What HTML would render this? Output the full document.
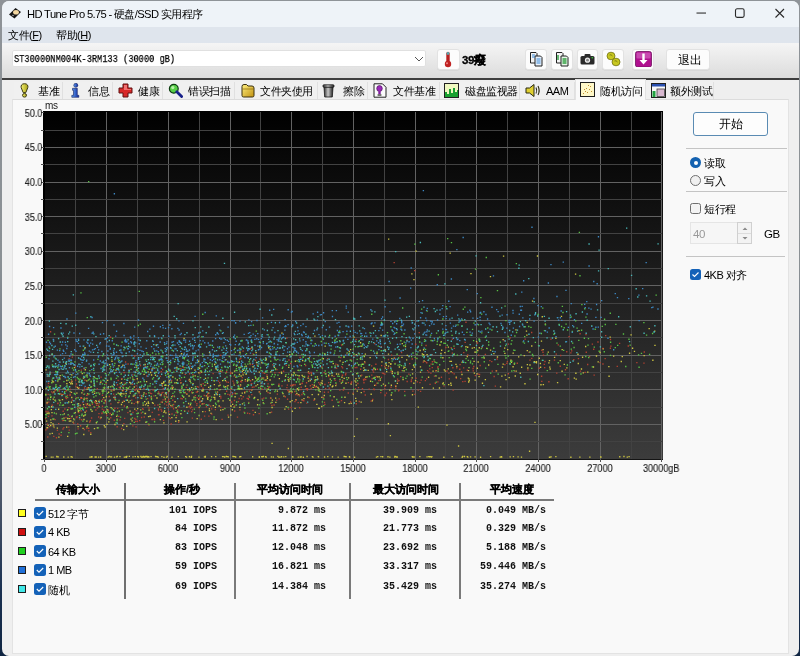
<!DOCTYPE html>
<html><head><meta charset="utf-8">
<style>
*{margin:0;padding:0;box-sizing:border-box}
html,body{width:800px;height:656px;overflow:hidden}
body{position:relative;font-family:"Liberation Sans",sans-serif;color:#1a1a1a;background:#1c2a40;-webkit-font-smoothing:antialiased}
div,svg,span.a{position:absolute}
div{will-change:transform}
.ui{font-size:11px;letter-spacing:-0.5px;line-height:12px;white-space:nowrap;color:#000;font-weight:500}
.btn{background:#fcfcfc;border:1px solid #e2e2e2;border-radius:3px;box-shadow:0 0.5px 0.5px rgba(0,0,0,0.08)}
.tab{top:82px;height:17px;background:#f0f0f0;border-right:1px solid #e0e0e0}
.tab svg{top:0px}
.tab .ui{top:2.5px}
.yl{left:0;width:42.3px;text-align:right;font-size:10px;line-height:10px;color:#222;letter-spacing:0;-webkit-text-stroke:0.15px #222;transform:scaleX(0.9);transform-origin:100% 0}
.xl{top:464px;font-size:10px;line-height:10px;color:#222;letter-spacing:0;-webkit-text-stroke:0.15px #222;white-space:nowrap;transform:translateX(-50%) scaleX(0.91)}
.mono{font-family:"Liberation Mono",monospace;font-weight:bold;font-size:10px;line-height:10px;color:#111;white-space:pre}
.hdr{top:484px;font-size:11px;line-height:11px;font-weight:bold;color:#000;-webkit-text-stroke:0.3px #000;white-space:nowrap;transform:translateX(-50%)}
.sq{left:18px;width:8px;height:8px;border:1px solid #1e1e1e}
.cb{left:34px;width:12px;height:12px;border-radius:2.5px;background:#1462b8}
.cb svg{left:0;top:0}
.sep{height:1px;background:#c4c4c4}
</style></head><body>
<div style="left:0;top:0;width:800px;height:656px;background:linear-gradient(#8e9398,#8a9094 40%,#6a7484 60%,#4a5568 76%,#1a3050 90%,#0f2542)"></div>
<!-- window -->
<div style="left:2px;top:1px;width:797px;height:655px;background:#efefef;border-radius:7px;overflow:hidden">
  <div style="left:0;top:0;width:797px;height:26px;background:#eef3f8"></div>
  <div style="left:0;top:26px;width:797px;height:17px;background:#dfe5ed"></div>
  <div style="left:0;top:42px;width:797px;height:36px;background:linear-gradient(#f5f5f5,#dbdbdb)"></div>
  <div style="left:0;top:76.5px;width:797px;height:1.5px;background:#3e3e3e"></div>
</div>
<!-- title -->
<svg style="left:8px;top:6px" width="14" height="14" viewBox="0 0 14 14"><path d="M1 8.5 L7.5 2 L13 6 L6.5 12.5 Z" fill="#161616"/><ellipse cx="8" cy="6.3" rx="2.9" ry="2.3" fill="#f2d6a0"/><ellipse cx="5" cy="9.5" rx="1.2" ry="0.8" fill="#888"/></svg>
<div class="ui" style="left:27px;top:8px;font-size:11.2px;color:#000;letter-spacing:-0.65px">HD Tune Pro 5.75 - 硬盘/SSD 实用程序</div>
<svg style="left:696px;top:12px" width="11" height="3"><rect x="0.5" y="0.5" width="9.5" height="1.1" fill="#333"/></svg>
<svg style="left:734px;top:7px" width="12" height="12"><rect x="1.5" y="1.8" width="8.6" height="8.6" rx="1.6" fill="none" stroke="#2a2a2a" stroke-width="1.1"/></svg>
<svg style="left:774px;top:7px" width="12" height="12"><path d="M1.5 2 L10 10.5 M10 2 L1.5 10.5" stroke="#2a2a2a" stroke-width="1.1"/></svg>
<!-- menu -->
<div class="ui" style="left:8px;top:29px">文件(<u>F</u>)</div>
<div class="ui" style="left:56px;top:29px">帮助(<u>H</u>)</div>
<!-- toolbar -->
<div style="left:12px;top:50px;width:414px;height:17px;background:#fff;border:1px solid #e0e0e0;border-radius:2px"></div>
<div class="mono" style="left:14px;top:54px;font-weight:normal;font-size:11.4px;line-height:11px;color:#000;-webkit-text-stroke:0.25px #000;transform:scaleX(0.76);transform-origin:0 0">ST30000NM004K-3RM133 (30000 gB)</div>
<svg style="left:414px;top:56px" width="10" height="6"><path d="M1 1 L5 5 L9 1" fill="none" stroke="#555" stroke-width="1"/></svg>
<div class="btn" style="left:437px;top:49px;width:23px;height:21px"></div>
<svg style="left:443px;top:51px" width="10" height="17" viewBox="0 0 10 17"><rect x="3.3" y="0.8" width="3.4" height="12" rx="1.7" fill="#b82020"/><rect x="3.6" y="1" width="2.8" height="3" rx="1.4" fill="#58a8b0"/><circle cx="5" cy="13" r="3.2" fill="#c02222"/><circle cx="4" cy="12.3" r="1" fill="#e88"/></svg>
<div class="ui" style="left:462px;top:54px;font-weight:bold;font-size:11.5px;letter-spacing:-0.3px;color:#000;-webkit-text-stroke:0.3px #000">39癈</div>
<div class="btn" style="left:525px;top:49px;width:22px;height:21px"></div>
<div class="btn" style="left:551px;top:49px;width:22px;height:21px"></div>
<div class="btn" style="left:577px;top:49px;width:21px;height:21px"></div>
<div class="btn" style="left:602px;top:49px;width:22px;height:21px"></div>
<div class="btn" style="left:632px;top:49px;width:22px;height:21px"></div>
<div class="btn" style="left:666px;top:49px;width:44px;height:21px"></div>
<svg style="left:529px;top:51px" width="15" height="16" viewBox="0 0 15 16"><path d="M1.5 1.5 H7 L8 2.5 V12 H1.5Z" fill="#f4f4f4" stroke="#222" stroke-width="1"/><path d="M6 5 H11.5 L13 6.5 V15 H6Z" fill="#e8f0fa" stroke="#222" stroke-width="1"/><path d="M3 4 H6 M3 6 H6 M7.5 8 H11.5 M7.5 10 H11.5 M7.5 12 H11.5" stroke="#3a8ad8" stroke-width="1"/></svg>
<svg style="left:555px;top:51px" width="15" height="16" viewBox="0 0 15 16"><path d="M1.5 1.5 H7 L8 2.5 V12 H1.5Z" fill="#f4f4f4" stroke="#222" stroke-width="1"/><path d="M6 5 H11.5 L13 6.5 V15 H6Z" fill="#e8f4e8" stroke="#222" stroke-width="1"/><path d="M3 4 V9 M7.5 8 H11.5 M7.5 10 H11.5 M7.5 12 H11.5" stroke="#30a040" stroke-width="1.4"/></svg>
<svg style="left:580px;top:53px" width="15" height="12" viewBox="0 0 15 12"><rect x="0.5" y="3" width="14" height="8.5" rx="1.5" fill="#2a2a2a"/><rect x="4.5" y="1" width="6" height="3" rx="1" fill="#2a2a2a"/><circle cx="7.5" cy="7.2" r="2.6" fill="#eee"/><circle cx="7.5" cy="7.2" r="1.4" fill="#888"/><circle cx="12.3" cy="4.8" r="0.8" fill="#3c3"/></svg>
<svg style="left:606px;top:51px" width="15" height="16" viewBox="0 0 15 16"><ellipse cx="5" cy="5" rx="4" ry="3.8" fill="#c8c820" stroke="#707010" stroke-width="0.8"/><ellipse cx="10" cy="11" rx="4" ry="3.8" fill="#c8c820" stroke="#707010" stroke-width="0.8"/><path d="M3.5 4 Q5 3 6.5 5 M8.5 10 Q10 9 11.5 11" stroke="#707010" stroke-width="0.8" fill="none"/></svg>
<svg style="left:635px;top:51px" width="17" height="16" viewBox="0 0 17 16"><rect x="0.5" y="0.5" width="16" height="15.5" rx="2" fill="#b0108f" stroke="#701060" stroke-width="0.8"/><rect x="1.5" y="1.5" width="14" height="6" rx="1" fill="#c84ab0"/><path d="M7.3 2.5 H9.7 V9 H12.5 L8.5 13.5 L4.5 9 H7.3Z" fill="#fff"/></svg>
<div class="ui" style="left:678px;top:54px;font-size:11.5px">退出</div>
<!-- tabs -->
<div class="tab" style="left:14px;width:49px"><svg style="left:6px;top:1px" width="9" height="15" viewBox="0 0 9 15"><defs><linearGradient id="gb" x1="0" x2="1"><stop offset="0" stop-color="#f4f070"/><stop offset="1" stop-color="#a8a018"/></linearGradient></defs><path d="M4.5 0.7 C7.3 0.7 8.3 2.6 7.8 4.6 L5.8 9.6 H3.2 L1.2 4.6 C0.7 2.6 1.7 0.7 4.5 0.7Z" fill="url(#gb)" stroke="#3c3a10" stroke-width="1"/><ellipse cx="4.5" cy="12.3" rx="2" ry="1.8" fill="url(#gb)" stroke="#3c3a10" stroke-width="1"/></svg><div class="ui" style="left:24px">基准</div></div>
<div class="tab" style="left:63px;width:50px"><svg style="left:8px;top:1px" width="9" height="15" viewBox="0 0 9 15"><defs><linearGradient id="gi" x1="0" x2="1"><stop offset="0" stop-color="#60a0f0"/><stop offset="1" stop-color="#1028a0"/></linearGradient></defs><circle cx="4.8" cy="2.3" r="2" fill="url(#gi)" stroke="#102060" stroke-width="0.6"/><path d="M1.5 5.3 H6.3 V12.3 H7.8 V14.3 H0.8 V12.3 H2.5 V7.3 H1.5Z" fill="url(#gi)" stroke="#102060" stroke-width="0.6"/></svg><div class="ui" style="left:25px">信息</div></div>
<div class="tab" style="left:113px;width:50px"><svg style="left:5px;top:1px" width="15" height="15" viewBox="0 0 15 15"><path d="M5 1 H10 V5 H14 V10 H10 V14 H5 V10 H1 V5 H5Z" fill="#d82828" stroke="#601010" stroke-width="1"/><path d="M6 2 H9 V6 H13 V7 H6Z" fill="#f07070"/></svg><div class="ui" style="left:25px">健康</div></div>
<div class="tab" style="left:163px;width:72px"><svg style="left:5px;top:1px" width="15" height="15" viewBox="0 0 15 15"><circle cx="5.8" cy="5.8" r="4.4" fill="#58d048" stroke="#0c3c10" stroke-width="1.2"/><circle cx="4.8" cy="4.6" r="1.6" fill="#b8f0a8"/><path d="M8.8 8.8 L13.6 13.6" stroke="#18208a" stroke-width="2.8" stroke-linecap="round"/></svg><div class="ui" style="left:25px">错误扫描</div></div>
<div class="tab" style="left:235px;width:83px"><svg style="left:6px;top:1px" width="14" height="15" viewBox="0 0 14 15"><defs><linearGradient id="gf" x1="0" y1="0" x2="1" y2="1"><stop offset="0" stop-color="#fff080"/><stop offset="1" stop-color="#c09010"/></linearGradient></defs><path d="M1 3.5 Q1 1.5 3 1.5 H5.5 L7 3 H11 Q13 3 13 5 V12.5 Q13 14 11.5 14 H2.5 Q1 14 1 12.5Z" fill="url(#gf)" stroke="#3a3010" stroke-width="1"/><path d="M1.5 6 H12.5" stroke="#8a6a10" stroke-width="0.7"/></svg><div class="ui" style="left:25px">文件夹使用</div></div>
<div class="tab" style="left:318px;width:50px"><svg style="left:4px;top:1px" width="13" height="15" viewBox="0 0 13 15"><defs><linearGradient id="gt" x1="0" x2="1"><stop offset="0" stop-color="#303030"/><stop offset="0.45" stop-color="#c8c8c8"/><stop offset="1" stop-color="#202020"/></linearGradient></defs><path d="M2 4 H11 L10.3 14 H2.7Z" fill="url(#gt)" stroke="#181818" stroke-width="0.8"/><rect x="1" y="1.8" width="11" height="2.4" rx="0.8" fill="url(#gt)" stroke="#181818" stroke-width="0.8"/></svg><div class="ui" style="left:25px">擦除</div></div>
<div class="tab" style="left:368px;width:72px"><svg style="left:5px;top:1px" width="14" height="15" viewBox="0 0 14 15"><path d="M1 0.8 H9.5 L13 4.3 V14.2 H1Z" fill="#fbfbfb" stroke="#202020" stroke-width="1"/><ellipse cx="6.5" cy="5.5" rx="2.8" ry="3" fill="#9a28b8" stroke="#401050" stroke-width="0.6"/><path d="M5.3 8.3 H7.7 V11 H5.3Z" fill="#801aa0"/><rect x="4.6" y="11.2" width="3.8" height="1.6" fill="#505050"/></svg><div class="ui" style="left:25px">文件基准</div></div>
<div class="tab" style="left:440px;width:80px"><svg style="left:4px;top:1px" width="15" height="15" viewBox="0 0 15 15"><rect x="0.5" y="0.5" width="14" height="14" fill="#f0f8c0" stroke="#202020" stroke-width="1"/><path d="M1 14 V9 H3 V11 H5 V6 H7 V10 H9 V5 H11 V9 H13 V7 H14 V14Z" fill="#18a030"/></svg><div class="ui" style="left:25px">磁盘监视器</div></div>
<div class="tab" style="left:520px;width:55px"><svg style="left:5px;top:1px" width="16" height="15" viewBox="0 0 16 15"><path d="M1 5 H4.5 L9 1.5 V13.5 L4.5 10 H1Z" fill="#e0d030" stroke="#282810" stroke-width="1"/><path d="M11 4.5 Q12.5 7.5 11 10.5 M13 3 Q15.3 7.5 13 12" fill="none" stroke="#282810" stroke-width="1.1"/></svg><div class="ui" style="left:26px">AAM</div></div>
<div class="tab" style="left:646px;width:68px"><svg style="left:5px;top:1px" width="15" height="15" viewBox="0 0 15 15"><rect x="0.5" y="0.5" width="14" height="14" fill="#fafafa" stroke="#202020" stroke-width="1"/><rect x="1" y="1" width="13" height="2.5" fill="#2a50b0"/><rect x="1.5" y="8" width="3" height="6" fill="#20a040"/><rect x="6" y="6" width="7.5" height="7.5" fill="#d8b8d0" stroke="#404040" stroke-width="0.8"/></svg><div class="ui" style="left:24px">额外测试</div></div>
<!-- content panel -->
<div style="left:12px;top:99px;width:777px;height:555px;background:#f9f9f9;border:1px solid #e3e3e3;border-top-color:#dcdcdc"></div>
<div style="left:575px;top:79px;width:71px;height:21px;background:#f9f9f9;border:1px solid #e2e2e2;border-bottom:none"><svg style="left:4px;top:2px" width="15" height="15" viewBox="0 0 15 15"><rect x="0.5" y="0.5" width="14" height="14" fill="#fff8c8" stroke="#202020" stroke-width="1"/><path d="M3 11 h1v1h-1z M5 9 h1v1h-1z M7 10 h1v1h-1z M6 6 h1v1h-1z M9 7 h1v1h-1z M10 4 h1v1h-1z M11 9 h1v1h-1z M8 3 h1v1h-1z M4 7 h1v1h-1z" fill="#c09030"/></svg><div class="ui" style="left:24px;top:5px">随机访问</div></div>
<svg style="left:0;top:0" width="800" height="656" viewBox="0 0 800 656" shape-rendering="crispEdges">
<defs><linearGradient id="bg" x1="0" y1="0" x2="0" y2="1"><stop offset="0" stop-color="#000"/><stop offset="1" stop-color="#3c3c3c"/></linearGradient></defs>
<rect x="43" y="111" width="620" height="348" fill="url(#bg)"/>
<rect x="44.4" y="112" width="1" height="347" fill="#626262"/>
<rect x="75.2" y="112" width="1" height="347" fill="#424242"/>
<rect x="106.1" y="112" width="1" height="347" fill="#626262"/>
<rect x="136.9" y="112" width="1" height="347" fill="#424242"/>
<rect x="167.8" y="112" width="1" height="347" fill="#626262"/>
<rect x="198.7" y="112" width="1" height="347" fill="#424242"/>
<rect x="229.5" y="112" width="1" height="347" fill="#626262"/>
<rect x="260.3" y="112" width="1" height="347" fill="#424242"/>
<rect x="291.2" y="112" width="1" height="347" fill="#626262"/>
<rect x="322.0" y="112" width="1" height="347" fill="#424242"/>
<rect x="352.9" y="112" width="1" height="347" fill="#626262"/>
<rect x="383.8" y="112" width="1" height="347" fill="#424242"/>
<rect x="414.6" y="112" width="1" height="347" fill="#626262"/>
<rect x="445.4" y="112" width="1" height="347" fill="#424242"/>
<rect x="476.3" y="112" width="1" height="347" fill="#626262"/>
<rect x="507.1" y="112" width="1" height="347" fill="#424242"/>
<rect x="538.0" y="112" width="1" height="347" fill="#626262"/>
<rect x="568.9" y="112" width="1" height="347" fill="#424242"/>
<rect x="599.7" y="112" width="1" height="347" fill="#626262"/>
<rect x="630.5" y="112" width="1" height="347" fill="#424242"/>
<rect x="661.4" y="112" width="1" height="347" fill="#626262"/>
<rect x="44" y="441.2" width="618" height="1" fill="#424242"/>
<rect x="44" y="423.9" width="618" height="1" fill="#626262"/>
<rect x="44" y="406.6" width="618" height="1" fill="#424242"/>
<rect x="44" y="389.2" width="618" height="1" fill="#626262"/>
<rect x="44" y="371.9" width="618" height="1" fill="#424242"/>
<rect x="44" y="354.6" width="618" height="1" fill="#626262"/>
<rect x="44" y="337.3" width="618" height="1" fill="#424242"/>
<rect x="44" y="320.0" width="618" height="1" fill="#626262"/>
<rect x="44" y="302.7" width="618" height="1" fill="#424242"/>
<rect x="44" y="285.4" width="618" height="1" fill="#626262"/>
<rect x="44" y="268.0" width="618" height="1" fill="#424242"/>
<rect x="44" y="250.7" width="618" height="1" fill="#626262"/>
<rect x="44" y="233.4" width="618" height="1" fill="#424242"/>
<rect x="44" y="216.1" width="618" height="1" fill="#626262"/>
<rect x="44" y="198.8" width="618" height="1" fill="#424242"/>
<rect x="44" y="181.5" width="618" height="1" fill="#626262"/>
<rect x="44" y="164.1" width="618" height="1" fill="#424242"/>
<rect x="44" y="146.8" width="618" height="1" fill="#626262"/>
<rect x="44" y="129.5" width="618" height="1" fill="#424242"/>
<rect x="43" y="111" width="1.5" height="349" fill="#000"/>
<rect x="43" y="110.5" width="620" height="1.5" fill="#000"/>
<rect x="43" y="458.5" width="620" height="1.3" fill="#141414"/>
<path fill="#ccc440" d="M301.5 374.7h1.35v1.35h-1.35zM271.7 399.5h1.35v1.35h-1.35zM393.6 357.6h1.35v1.35h-1.35zM391.2 358.0h1.35v1.35h-1.35zM385.7 364.7h1.35v1.35h-1.35zM355.3 378.1h1.35v1.35h-1.35zM488.0 364.3h1.35v1.35h-1.35zM46.5 402.3h1.35v1.35h-1.35zM154.8 374.6h1.35v1.35h-1.35zM187.9 402.8h1.35v1.35h-1.35zM542.4 349.0h1.35v1.35h-1.35zM159.1 406.2h1.35v1.35h-1.35zM70.0 363.4h1.35v1.35h-1.35zM137.1 402.2h1.35v1.35h-1.35zM377.0 376.2h1.35v1.35h-1.35zM483.5 357.3h1.35v1.35h-1.35zM271.3 383.7h1.35v1.35h-1.35zM82.4 427.7h1.35v1.35h-1.35zM245.4 365.6h1.35v1.35h-1.35zM168.8 403.4h1.35v1.35h-1.35zM93.8 427.9h1.35v1.35h-1.35zM145.3 421.6h1.35v1.35h-1.35zM46.5 412.6h1.35v1.35h-1.35zM350.5 402.7h1.35v1.35h-1.35zM103.6 424.9h1.35v1.35h-1.35zM194.5 375.2h1.35v1.35h-1.35zM288.0 380.5h1.35v1.35h-1.35zM198.0 398.7h1.35v1.35h-1.35zM86.2 420.5h1.35v1.35h-1.35zM164.8 392.3h1.35v1.35h-1.35zM224.8 380.0h1.35v1.35h-1.35zM537.0 373.8h1.35v1.35h-1.35zM363.2 367.2h1.35v1.35h-1.35zM432.7 387.4h1.35v1.35h-1.35zM66.2 379.8h1.35v1.35h-1.35zM467.6 377.4h1.35v1.35h-1.35zM208.0 386.7h1.35v1.35h-1.35zM620.6 360.8h1.35v1.35h-1.35zM289.3 390.6h1.35v1.35h-1.35zM91.0 401.0h1.35v1.35h-1.35zM161.5 401.5h1.35v1.35h-1.35zM548.8 360.0h1.35v1.35h-1.35zM114.5 398.5h1.35v1.35h-1.35zM241.4 379.7h1.35v1.35h-1.35zM171.7 388.2h1.35v1.35h-1.35zM219.7 370.5h1.35v1.35h-1.35zM297.5 369.7h1.35v1.35h-1.35zM524.3 383.1h1.35v1.35h-1.35zM526.7 363.9h1.35v1.35h-1.35zM300.2 401.9h1.35v1.35h-1.35zM450.4 370.9h1.35v1.35h-1.35zM237.7 387.7h1.35v1.35h-1.35zM121.8 390.0h1.35v1.35h-1.35zM631.9 347.6h1.35v1.35h-1.35zM151.8 401.9h1.35v1.35h-1.35zM103.9 387.3h1.35v1.35h-1.35zM80.7 397.0h1.35v1.35h-1.35zM144.4 363.8h1.35v1.35h-1.35zM142.7 395.5h1.35v1.35h-1.35zM164.7 398.3h1.35v1.35h-1.35zM119.9 394.4h1.35v1.35h-1.35zM183.4 337.8h1.35v1.35h-1.35zM111.3 360.7h1.35v1.35h-1.35zM271.4 406.8h1.35v1.35h-1.35zM112.9 409.3h1.35v1.35h-1.35zM150.0 371.8h1.35v1.35h-1.35zM59.1 378.2h1.35v1.35h-1.35zM168.8 413.7h1.35v1.35h-1.35zM61.8 398.9h1.35v1.35h-1.35zM198.9 367.6h1.35v1.35h-1.35zM534.2 361.6h1.35v1.35h-1.35zM123.6 400.7h1.35v1.35h-1.35zM233.5 384.4h1.35v1.35h-1.35zM465.3 346.1h1.35v1.35h-1.35zM304.8 385.4h1.35v1.35h-1.35zM208.7 408.2h1.35v1.35h-1.35zM101.6 390.3h1.35v1.35h-1.35zM186.2 393.5h1.35v1.35h-1.35zM53.2 418.5h1.35v1.35h-1.35zM283.3 395.5h1.35v1.35h-1.35zM68.6 418.0h1.35v1.35h-1.35zM414.9 379.9h1.35v1.35h-1.35zM129.0 381.7h1.35v1.35h-1.35zM275.2 401.7h1.35v1.35h-1.35zM535.8 361.0h1.35v1.35h-1.35zM510.3 359.6h1.35v1.35h-1.35zM358.0 363.9h1.35v1.35h-1.35zM104.5 426.3h1.35v1.35h-1.35zM73.0 418.2h1.35v1.35h-1.35zM526.2 334.5h1.35v1.35h-1.35zM45.1 393.8h1.35v1.35h-1.35zM238.8 373.8h1.35v1.35h-1.35zM440.3 352.8h1.35v1.35h-1.35zM105.8 412.7h1.35v1.35h-1.35zM131.4 420.2h1.35v1.35h-1.35zM209.8 385.9h1.35v1.35h-1.35zM533.6 361.1h1.35v1.35h-1.35zM130.4 418.4h1.35v1.35h-1.35zM59.6 385.2h1.35v1.35h-1.35zM347.9 377.2h1.35v1.35h-1.35zM58.2 436.4h1.35v1.35h-1.35zM255.5 351.9h1.35v1.35h-1.35zM165.2 384.6h1.35v1.35h-1.35zM335.9 373.3h1.35v1.35h-1.35zM388.4 361.9h1.35v1.35h-1.35zM599.4 351.8h1.35v1.35h-1.35zM202.1 410.9h1.35v1.35h-1.35zM291.9 385.0h1.35v1.35h-1.35zM106.6 409.1h1.35v1.35h-1.35zM539.9 366.6h1.35v1.35h-1.35zM321.5 380.2h1.35v1.35h-1.35zM307.8 371.2h1.35v1.35h-1.35zM206.9 397.6h1.35v1.35h-1.35zM423.0 354.1h1.35v1.35h-1.35zM343.9 401.9h1.35v1.35h-1.35zM260.5 382.4h1.35v1.35h-1.35zM91.9 391.4h1.35v1.35h-1.35zM540.8 340.4h1.35v1.35h-1.35zM555.2 337.6h1.35v1.35h-1.35zM53.3 391.3h1.35v1.35h-1.35zM563.6 363.7h1.35v1.35h-1.35zM419.8 371.5h1.35v1.35h-1.35zM443.7 369.2h1.35v1.35h-1.35zM318.1 388.2h1.35v1.35h-1.35zM246.8 380.5h1.35v1.35h-1.35zM297.9 389.3h1.35v1.35h-1.35zM52.9 424.8h1.35v1.35h-1.35zM419.8 366.2h1.35v1.35h-1.35zM292.7 374.4h1.35v1.35h-1.35zM192.4 383.0h1.35v1.35h-1.35zM160.6 394.3h1.35v1.35h-1.35zM52.3 423.2h1.35v1.35h-1.35zM284.9 375.6h1.35v1.35h-1.35zM296.2 392.8h1.35v1.35h-1.35zM51.6 432.7h1.35v1.35h-1.35zM364.0 369.3h1.35v1.35h-1.35zM125.5 393.0h1.35v1.35h-1.35zM61.3 394.1h1.35v1.35h-1.35zM299.4 383.6h1.35v1.35h-1.35zM93.6 383.2h1.35v1.35h-1.35zM397.4 373.2h1.35v1.35h-1.35zM471.6 347.4h1.35v1.35h-1.35zM107.5 387.4h1.35v1.35h-1.35zM307.9 380.4h1.35v1.35h-1.35zM241.6 370.6h1.35v1.35h-1.35zM630.4 334.2h1.35v1.35h-1.35zM132.7 395.5h1.35v1.35h-1.35zM431.6 339.9h1.35v1.35h-1.35zM168.3 390.3h1.35v1.35h-1.35zM240.4 375.3h1.35v1.35h-1.35zM45.9 420.4h1.35v1.35h-1.35zM332.2 385.3h1.35v1.35h-1.35zM423.4 360.3h1.35v1.35h-1.35zM120.1 393.1h1.35v1.35h-1.35zM247.0 371.0h1.35v1.35h-1.35zM447.6 368.2h1.35v1.35h-1.35zM282.3 392.9h1.35v1.35h-1.35zM113.3 396.7h1.35v1.35h-1.35zM254.6 411.7h1.35v1.35h-1.35zM208.1 392.5h1.35v1.35h-1.35zM450.5 384.6h1.35v1.35h-1.35zM194.3 369.5h1.35v1.35h-1.35zM321.2 396.7h1.35v1.35h-1.35zM364.0 361.2h1.35v1.35h-1.35zM244.7 379.0h1.35v1.35h-1.35zM168.4 381.4h1.35v1.35h-1.35zM145.9 380.9h1.35v1.35h-1.35zM265.6 359.2h1.35v1.35h-1.35zM50.4 421.9h1.35v1.35h-1.35zM214.1 396.8h1.35v1.35h-1.35zM111.5 385.4h1.35v1.35h-1.35zM575.2 372.6h1.35v1.35h-1.35zM50.0 396.7h1.35v1.35h-1.35zM585.0 345.8h1.35v1.35h-1.35zM531.9 300.4h1.35v1.35h-1.35zM587.1 371.5h1.35v1.35h-1.35zM597.5 361.2h1.35v1.35h-1.35zM79.5 405.0h1.35v1.35h-1.35zM448.0 383.9h1.35v1.35h-1.35zM461.3 373.8h1.35v1.35h-1.35zM233.9 370.4h1.35v1.35h-1.35zM48.3 412.9h1.35v1.35h-1.35zM51.8 380.3h1.35v1.35h-1.35zM102.8 389.4h1.35v1.35h-1.35zM218.5 405.3h1.35v1.35h-1.35zM401.3 356.7h1.35v1.35h-1.35zM86.9 403.3h1.35v1.35h-1.35zM366.4 376.2h1.35v1.35h-1.35zM577.6 362.8h1.35v1.35h-1.35zM595.8 355.3h1.35v1.35h-1.35zM541.6 316.1h1.35v1.35h-1.35zM496.8 356.3h1.35v1.35h-1.35zM191.7 399.5h1.35v1.35h-1.35zM468.6 380.0h1.35v1.35h-1.35zM76.7 386.8h1.35v1.35h-1.35zM115.3 369.5h1.35v1.35h-1.35zM45.5 387.7h1.35v1.35h-1.35zM197.0 390.7h1.35v1.35h-1.35zM90.1 433.6h1.35v1.35h-1.35zM331.0 372.2h1.35v1.35h-1.35zM172.2 376.3h1.35v1.35h-1.35zM318.2 389.8h1.35v1.35h-1.35zM195.2 387.8h1.35v1.35h-1.35zM100.4 416.8h1.35v1.35h-1.35zM215.2 367.5h1.35v1.35h-1.35zM440.6 340.9h1.35v1.35h-1.35zM98.2 400.6h1.35v1.35h-1.35zM373.5 377.5h1.35v1.35h-1.35zM222.4 400.2h1.35v1.35h-1.35zM142.5 404.4h1.35v1.35h-1.35zM197.9 360.6h1.35v1.35h-1.35zM317.8 393.8h1.35v1.35h-1.35zM266.1 390.3h1.35v1.35h-1.35zM343.5 377.7h1.35v1.35h-1.35zM231.6 372.5h1.35v1.35h-1.35zM227.9 416.4h1.35v1.35h-1.35zM122.3 364.6h1.35v1.35h-1.35zM621.6 356.0h1.35v1.35h-1.35zM544.7 323.5h1.35v1.35h-1.35zM413.7 366.4h1.35v1.35h-1.35zM477.5 361.3h1.35v1.35h-1.35zM126.0 389.5h1.35v1.35h-1.35zM337.0 364.6h1.35v1.35h-1.35zM294.4 407.7h1.35v1.35h-1.35zM78.2 381.2h1.35v1.35h-1.35zM314.3 379.5h1.35v1.35h-1.35zM71.1 374.2h1.35v1.35h-1.35zM237.2 381.5h1.35v1.35h-1.35zM561.4 370.6h1.35v1.35h-1.35zM456.2 365.8h1.35v1.35h-1.35zM86.2 380.2h1.35v1.35h-1.35zM83.1 433.8h1.35v1.35h-1.35zM207.1 398.7h1.35v1.35h-1.35zM77.6 409.8h1.35v1.35h-1.35zM384.6 349.3h1.35v1.35h-1.35zM360.1 375.2h1.35v1.35h-1.35zM384.8 384.8h1.35v1.35h-1.35zM652.2 359.6h1.35v1.35h-1.35zM213.9 394.1h1.35v1.35h-1.35zM200.6 400.6h1.35v1.35h-1.35zM150.9 374.3h1.35v1.35h-1.35zM556.9 382.0h1.35v1.35h-1.35zM164.2 384.7h1.35v1.35h-1.35zM406.0 359.2h1.35v1.35h-1.35zM341.3 376.6h1.35v1.35h-1.35zM411.5 377.2h1.35v1.35h-1.35zM450.1 382.6h1.35v1.35h-1.35zM121.3 392.9h1.35v1.35h-1.35zM67.0 417.8h1.35v1.35h-1.35zM79.2 407.4h1.35v1.35h-1.35zM238.3 388.7h1.35v1.35h-1.35zM510.8 361.6h1.35v1.35h-1.35zM643.5 355.0h1.35v1.35h-1.35zM502.5 339.0h1.35v1.35h-1.35zM360.5 401.5h1.35v1.35h-1.35zM180.1 382.1h1.35v1.35h-1.35zM129.5 382.0h1.35v1.35h-1.35zM348.5 403.0h1.35v1.35h-1.35zM268.1 347.1h1.35v1.35h-1.35zM144.8 404.2h1.35v1.35h-1.35zM390.1 363.6h1.35v1.35h-1.35zM129.6 392.5h1.35v1.35h-1.35zM573.7 377.4h1.35v1.35h-1.35zM110.9 414.1h1.35v1.35h-1.35zM214.7 406.6h1.35v1.35h-1.35zM126.1 425.6h1.35v1.35h-1.35zM231.7 409.1h1.35v1.35h-1.35zM163.2 381.0h1.35v1.35h-1.35zM321.6 382.8h1.35v1.35h-1.35zM301.4 399.2h1.35v1.35h-1.35zM136.6 378.1h1.35v1.35h-1.35zM187.2 389.1h1.35v1.35h-1.35zM190.7 367.9h1.35v1.35h-1.35zM648.5 328.0h1.35v1.35h-1.35zM227.3 384.9h1.35v1.35h-1.35zM235.2 376.5h1.35v1.35h-1.35zM241.6 392.5h1.35v1.35h-1.35zM109.0 363.9h1.35v1.35h-1.35zM71.1 396.8h1.35v1.35h-1.35zM149.5 415.6h1.35v1.35h-1.35zM106.2 423.7h1.35v1.35h-1.35zM167.8 385.0h1.35v1.35h-1.35zM200.9 371.3h1.35v1.35h-1.35zM96.7 427.2h1.35v1.35h-1.35zM239.2 388.2h1.35v1.35h-1.35zM538.6 357.6h1.35v1.35h-1.35zM325.2 373.2h1.35v1.35h-1.35zM130.3 383.2h1.35v1.35h-1.35zM180.2 413.1h1.35v1.35h-1.35zM176.6 379.4h1.35v1.35h-1.35zM402.4 378.8h1.35v1.35h-1.35zM135.8 366.5h1.35v1.35h-1.35zM352.6 393.3h1.35v1.35h-1.35zM50.9 406.1h1.35v1.35h-1.35zM170.2 405.0h1.35v1.35h-1.35zM285.5 405.9h1.35v1.35h-1.35zM208.8 410.0h1.35v1.35h-1.35zM219.2 388.9h1.35v1.35h-1.35zM478.4 375.9h1.35v1.35h-1.35zM367.5 369.7h1.35v1.35h-1.35zM88.1 387.1h1.35v1.35h-1.35zM247.0 379.6h1.35v1.35h-1.35zM205.7 395.2h1.35v1.35h-1.35zM334.0 377.9h1.35v1.35h-1.35zM317.1 378.3h1.35v1.35h-1.35zM90.1 386.4h1.35v1.35h-1.35zM90.5 381.2h1.35v1.35h-1.35zM121.0 378.3h1.35v1.35h-1.35zM222.3 409.0h1.35v1.35h-1.35zM329.6 384.1h1.35v1.35h-1.35zM363.7 355.8h1.35v1.35h-1.35zM578.3 330.0h1.35v1.35h-1.35zM113.6 383.7h1.35v1.35h-1.35zM116.0 415.7h1.35v1.35h-1.35zM118.3 365.1h1.35v1.35h-1.35zM82.9 403.9h1.35v1.35h-1.35zM398.7 366.3h1.35v1.35h-1.35zM111.7 370.7h1.35v1.35h-1.35zM55.7 389.0h1.35v1.35h-1.35zM238.7 361.3h1.35v1.35h-1.35zM561.5 349.0h1.35v1.35h-1.35zM67.0 409.0h1.35v1.35h-1.35zM84.6 369.1h1.35v1.35h-1.35zM239.4 388.0h1.35v1.35h-1.35zM113.3 389.3h1.35v1.35h-1.35zM82.8 377.4h1.35v1.35h-1.35zM239.9 384.3h1.35v1.35h-1.35zM58.0 408.6h1.35v1.35h-1.35zM396.7 382.7h1.35v1.35h-1.35zM161.1 382.7h1.35v1.35h-1.35zM527.2 367.3h1.35v1.35h-1.35zM213.5 380.1h1.35v1.35h-1.35zM298.1 393.9h1.35v1.35h-1.35zM163.1 381.6h1.35v1.35h-1.35zM175.4 416.9h1.35v1.35h-1.35zM256.9 404.1h1.35v1.35h-1.35zM380.5 334.8h1.35v1.35h-1.35zM269.7 348.6h1.35v1.35h-1.35zM495.8 370.1h1.35v1.35h-1.35zM466.6 355.8h1.35v1.35h-1.35zM191.0 387.0h1.35v1.35h-1.35zM315.7 385.7h1.35v1.35h-1.35zM72.4 421.4h1.35v1.35h-1.35zM514.6 375.3h1.35v1.35h-1.35zM449.3 360.7h1.35v1.35h-1.35zM475.9 340.9h1.35v1.35h-1.35zM501.2 375.5h1.35v1.35h-1.35zM99.8 381.9h1.35v1.35h-1.35zM136.9 390.3h1.35v1.35h-1.35zM202.1 403.2h1.35v1.35h-1.35zM220.0 409.5h1.35v1.35h-1.35zM120.8 403.8h1.35v1.35h-1.35zM107.0 379.7h1.35v1.35h-1.35zM333.4 396.1h1.35v1.35h-1.35zM467.8 369.9h1.35v1.35h-1.35zM137.1 400.9h1.35v1.35h-1.35zM566.2 367.2h1.35v1.35h-1.35zM474.2 351.4h1.35v1.35h-1.35zM50.0 424.8h1.35v1.35h-1.35zM91.4 410.6h1.35v1.35h-1.35zM207.8 392.5h1.35v1.35h-1.35zM559.6 360.0h1.35v1.35h-1.35zM291.0 374.2h1.35v1.35h-1.35zM184.6 391.9h1.35v1.35h-1.35zM526.6 349.9h1.35v1.35h-1.35zM232.0 403.7h1.35v1.35h-1.35zM421.7 353.3h1.35v1.35h-1.35zM291.7 410.6h1.35v1.35h-1.35zM126.6 405.9h1.35v1.35h-1.35zM323.6 394.8h1.35v1.35h-1.35zM108.5 418.4h1.35v1.35h-1.35zM314.2 335.5h1.35v1.35h-1.35zM93.6 376.3h1.35v1.35h-1.35zM84.4 414.4h1.35v1.35h-1.35zM166.5 371.0h1.35v1.35h-1.35zM89.3 404.9h1.35v1.35h-1.35zM261.4 377.5h1.35v1.35h-1.35zM320.5 382.2h1.35v1.35h-1.35zM105.6 396.1h1.35v1.35h-1.35zM526.5 321.7h1.35v1.35h-1.35zM86.2 397.8h1.35v1.35h-1.35zM613.0 355.5h1.35v1.35h-1.35zM432.4 370.4h1.35v1.35h-1.35zM163.2 422.2h1.35v1.35h-1.35zM322.7 358.1h1.35v1.35h-1.35zM148.0 402.7h1.35v1.35h-1.35zM201.3 390.1h1.35v1.35h-1.35zM476.7 367.6h1.35v1.35h-1.35zM225.2 358.9h1.35v1.35h-1.35zM504.6 374.4h1.35v1.35h-1.35zM152.5 402.7h1.35v1.35h-1.35zM364.7 353.5h1.35v1.35h-1.35zM117.4 402.0h1.35v1.35h-1.35zM63.2 419.7h1.35v1.35h-1.35zM67.0 435.7h1.35v1.35h-1.35zM355.6 354.0h1.35v1.35h-1.35zM188.8 378.8h1.35v1.35h-1.35zM450.7 360.7h1.35v1.35h-1.35zM117.5 392.5h1.35v1.35h-1.35zM453.3 354.0h1.35v1.35h-1.35zM523.6 354.9h1.35v1.35h-1.35zM505.4 379.0h1.35v1.35h-1.35zM438.8 387.3h1.35v1.35h-1.35zM331.6 386.1h1.35v1.35h-1.35zM93.5 384.9h1.35v1.35h-1.35zM349.9 348.9h1.35v1.35h-1.35zM355.6 384.4h1.35v1.35h-1.35zM355.2 381.4h1.35v1.35h-1.35zM397.3 371.5h1.35v1.35h-1.35zM391.6 372.8h1.35v1.35h-1.35zM303.9 376.3h1.35v1.35h-1.35zM262.6 402.2h1.35v1.35h-1.35zM168.9 379.9h1.35v1.35h-1.35zM178.1 420.1h1.35v1.35h-1.35zM361.9 363.7h1.35v1.35h-1.35zM175.6 382.1h1.35v1.35h-1.35zM390.7 384.6h1.35v1.35h-1.35zM360.1 358.5h1.35v1.35h-1.35zM147.4 371.2h1.35v1.35h-1.35zM176.2 366.7h1.35v1.35h-1.35zM356.2 373.0h1.35v1.35h-1.35zM318.1 407.6h1.35v1.35h-1.35zM189.2 389.3h1.35v1.35h-1.35zM275.0 397.5h1.35v1.35h-1.35zM73.8 366.9h1.35v1.35h-1.35zM49.3 433.2h1.35v1.35h-1.35zM166.3 396.5h1.35v1.35h-1.35zM373.3 367.6h1.35v1.35h-1.35zM86.4 374.5h1.35v1.35h-1.35zM104.6 399.6h1.35v1.35h-1.35zM403.5 370.2h1.35v1.35h-1.35zM241.8 403.2h1.35v1.35h-1.35zM421.8 387.1h1.35v1.35h-1.35zM224.7 386.1h1.35v1.35h-1.35zM83.4 399.0h1.35v1.35h-1.35zM395.1 385.6h1.35v1.35h-1.35zM403.0 367.5h1.35v1.35h-1.35zM191.6 392.2h1.35v1.35h-1.35zM508.5 377.0h1.35v1.35h-1.35zM96.3 402.7h1.35v1.35h-1.35zM147.4 404.9h1.35v1.35h-1.35zM295.1 374.3h1.35v1.35h-1.35zM271.3 401.7h1.35v1.35h-1.35zM86.5 388.4h1.35v1.35h-1.35zM258.6 371.4h1.35v1.35h-1.35zM230.1 405.3h1.35v1.35h-1.35zM298.4 375.1h1.35v1.35h-1.35zM114.3 423.8h1.35v1.35h-1.35zM316.2 403.7h1.35v1.35h-1.35zM121.8 401.7h1.35v1.35h-1.35zM219.1 395.7h1.35v1.35h-1.35zM535.8 362.2h1.35v1.35h-1.35zM47.3 375.3h1.35v1.35h-1.35zM502.5 363.4h1.35v1.35h-1.35zM83.0 415.3h1.35v1.35h-1.35zM86.9 393.2h1.35v1.35h-1.35zM633.8 350.7h1.35v1.35h-1.35zM379.7 379.4h1.35v1.35h-1.35zM144.8 412.8h1.35v1.35h-1.35zM103.1 396.9h1.35v1.35h-1.35zM235.8 365.4h1.35v1.35h-1.35zM81.2 392.2h1.35v1.35h-1.35zM329.6 378.5h1.35v1.35h-1.35zM512.4 366.1h1.35v1.35h-1.35zM582.6 372.2h1.35v1.35h-1.35zM261.2 362.1h1.35v1.35h-1.35zM253.4 397.4h1.35v1.35h-1.35zM122.0 424.8h1.35v1.35h-1.35zM81.6 373.0h1.35v1.35h-1.35zM592.8 366.3h1.35v1.35h-1.35zM332.7 405.8h1.35v1.35h-1.35zM406.6 354.7h1.35v1.35h-1.35zM369.5 356.9h1.35v1.35h-1.35zM358.5 377.4h1.35v1.35h-1.35zM230.5 405.5h1.35v1.35h-1.35zM411.8 394.1h1.35v1.35h-1.35zM134.1 408.5h1.35v1.35h-1.35zM95.8 400.7h1.35v1.35h-1.35zM444.2 351.9h1.35v1.35h-1.35zM575.5 378.5h1.35v1.35h-1.35zM170.8 381.4h1.35v1.35h-1.35zM70.8 401.6h1.35v1.35h-1.35zM287.5 379.0h1.35v1.35h-1.35zM218.2 385.2h1.35v1.35h-1.35zM411.9 373.2h1.35v1.35h-1.35zM512.5 352.4h1.35v1.35h-1.35zM519.6 372.6h1.35v1.35h-1.35zM291.3 391.3h1.35v1.35h-1.35zM351.9 374.1h1.35v1.35h-1.35zM161.7 385.1h1.35v1.35h-1.35zM360.4 345.6h1.35v1.35h-1.35zM321.1 405.8h1.35v1.35h-1.35zM294.7 360.6h1.35v1.35h-1.35zM390.2 363.1h1.35v1.35h-1.35zM155.6 344.2h1.35v1.35h-1.35zM481.8 382.6h1.35v1.35h-1.35zM208.9 352.0h1.35v1.35h-1.35zM489.9 349.5h1.35v1.35h-1.35zM369.9 380.6h1.35v1.35h-1.35zM70.9 381.4h1.35v1.35h-1.35zM391.7 370.8h1.35v1.35h-1.35zM171.2 396.0h1.35v1.35h-1.35zM525.8 330.4h1.35v1.35h-1.35zM531.1 345.3h1.35v1.35h-1.35zM71.3 415.9h1.35v1.35h-1.35zM270.1 397.5h1.35v1.35h-1.35zM515.5 370.5h1.35v1.35h-1.35zM86.3 426.1h1.35v1.35h-1.35zM144.4 412.8h1.35v1.35h-1.35zM240.9 365.6h1.35v1.35h-1.35zM198.2 372.1h1.35v1.35h-1.35zM542.7 384.0h1.35v1.35h-1.35zM150.8 397.5h1.35v1.35h-1.35zM295.3 398.9h1.35v1.35h-1.35zM302.0 359.9h1.35v1.35h-1.35zM339.4 360.2h1.35v1.35h-1.35zM255.0 377.3h1.35v1.35h-1.35zM77.4 426.0h1.35v1.35h-1.35zM356.6 390.4h1.35v1.35h-1.35zM376.3 352.9h1.35v1.35h-1.35zM186.2 406.6h1.35v1.35h-1.35zM206.9 382.7h1.35v1.35h-1.35zM189.4 380.7h1.35v1.35h-1.35zM143.4 373.7h1.35v1.35h-1.35zM518.0 356.2h1.35v1.35h-1.35zM63.3 417.5h1.35v1.35h-1.35zM344.3 396.6h1.35v1.35h-1.35zM281.3 332.5h1.35v1.35h-1.35zM394.8 380.2h1.35v1.35h-1.35zM442.2 357.1h1.35v1.35h-1.35zM539.7 362.8h1.35v1.35h-1.35zM175.4 407.1h1.35v1.35h-1.35zM255.3 385.2h1.35v1.35h-1.35zM128.2 401.5h1.35v1.35h-1.35zM478.6 347.1h1.35v1.35h-1.35zM193.3 396.5h1.35v1.35h-1.35zM353.3 336.5h1.35v1.35h-1.35zM280.8 371.5h1.35v1.35h-1.35zM59.2 393.2h1.35v1.35h-1.35zM341.9 379.8h1.35v1.35h-1.35zM222.0 380.0h1.35v1.35h-1.35zM355.0 397.7h1.35v1.35h-1.35zM131.1 402.4h1.35v1.35h-1.35zM378.6 376.2h1.35v1.35h-1.35zM163.9 410.3h1.35v1.35h-1.35zM174.4 401.1h1.35v1.35h-1.35zM389.1 389.5h1.35v1.35h-1.35zM408.3 355.8h1.35v1.35h-1.35zM216.5 394.0h1.35v1.35h-1.35zM363.1 370.0h1.35v1.35h-1.35zM444.6 370.5h1.35v1.35h-1.35zM284.2 408.5h1.35v1.35h-1.35zM95.7 422.1h1.35v1.35h-1.35zM139.6 388.4h1.35v1.35h-1.35zM50.7 408.9h1.35v1.35h-1.35zM334.6 366.8h1.35v1.35h-1.35zM90.1 408.7h1.35v1.35h-1.35zM84.4 347.1h1.35v1.35h-1.35zM609.5 336.5h1.35v1.35h-1.35zM163.3 411.7h1.35v1.35h-1.35zM468.0 381.3h1.35v1.35h-1.35zM66.2 382.9h1.35v1.35h-1.35zM66.0 426.4h1.35v1.35h-1.35zM354.3 380.2h1.35v1.35h-1.35zM48.2 412.3h1.35v1.35h-1.35zM162.9 382.2h1.35v1.35h-1.35zM317.3 386.8h1.35v1.35h-1.35zM229.3 399.6h1.35v1.35h-1.35zM52.6 398.5h1.35v1.35h-1.35zM107.9 385.9h1.35v1.35h-1.35zM387.8 353.5h1.35v1.35h-1.35zM126.8 399.6h1.35v1.35h-1.35zM360.6 392.0h1.35v1.35h-1.35zM311.5 394.0h1.35v1.35h-1.35zM484.7 379.0h1.35v1.35h-1.35zM202.5 389.0h1.35v1.35h-1.35zM473.6 347.0h1.35v1.35h-1.35zM210.4 412.7h1.35v1.35h-1.35zM71.7 383.1h1.35v1.35h-1.35zM608.4 375.6h1.35v1.35h-1.35zM553.9 356.7h1.35v1.35h-1.35zM46.9 427.1h1.35v1.35h-1.35zM355.5 400.3h1.35v1.35h-1.35zM549.5 368.3h1.35v1.35h-1.35zM288.3 380.4h1.35v1.35h-1.35zM361.6 363.6h1.35v1.35h-1.35zM240.3 395.0h1.35v1.35h-1.35zM264.5 379.5h1.35v1.35h-1.35zM371.7 400.1h1.35v1.35h-1.35zM271.2 369.8h1.35v1.35h-1.35zM215.6 368.5h1.35v1.35h-1.35zM77.9 403.1h1.35v1.35h-1.35zM171.6 387.0h1.35v1.35h-1.35zM68.7 420.4h1.35v1.35h-1.35zM118.9 392.9h1.35v1.35h-1.35zM213.3 396.7h1.35v1.35h-1.35zM252.4 366.1h1.35v1.35h-1.35zM148.4 409.4h1.35v1.35h-1.35zM504.0 347.4h1.35v1.35h-1.35zM176.8 411.8h1.35v1.35h-1.35zM93.9 392.7h1.35v1.35h-1.35zM46.4 427.1h1.35v1.35h-1.35zM513.7 363.3h1.35v1.35h-1.35zM387.9 365.4h1.35v1.35h-1.35zM303.3 397.9h1.35v1.35h-1.35zM473.7 372.4h1.35v1.35h-1.35zM266.8 377.6h1.35v1.35h-1.35zM119.6 387.2h1.35v1.35h-1.35zM324.0 353.3h1.35v1.35h-1.35zM475.2 351.5h1.35v1.35h-1.35zM501.8 366.4h1.35v1.35h-1.35zM507.0 348.9h1.35v1.35h-1.35zM504.2 352.7h1.35v1.35h-1.35zM419.4 349.8h1.35v1.35h-1.35zM335.1 385.0h1.35v1.35h-1.35zM602.5 348.1h1.35v1.35h-1.35zM76.2 392.4h1.35v1.35h-1.35zM244.0 392.1h1.35v1.35h-1.35zM422.9 349.1h1.35v1.35h-1.35zM59.5 374.9h1.35v1.35h-1.35zM549.1 366.4h1.35v1.35h-1.35zM529.3 364.3h1.35v1.35h-1.35zM654.1 330.4h1.35v1.35h-1.35zM313.9 398.3h1.35v1.35h-1.35zM138.3 391.3h1.35v1.35h-1.35zM289.1 354.0h1.35v1.35h-1.35zM343.2 356.3h1.35v1.35h-1.35zM302.4 375.9h1.35v1.35h-1.35zM45.4 369.2h1.35v1.35h-1.35zM144.0 400.9h1.35v1.35h-1.35zM69.0 381.7h1.35v1.35h-1.35zM404.8 345.8h1.35v1.35h-1.35zM340.7 382.5h1.35v1.35h-1.35zM474.5 379.4h1.35v1.35h-1.35zM111.0 356.7h1.35v1.35h-1.35zM435.4 369.9h1.35v1.35h-1.35zM204.8 377.7h1.35v1.35h-1.35zM243.0 369.7h1.35v1.35h-1.35zM310.8 374.5h1.35v1.35h-1.35zM239.3 351.6h1.35v1.35h-1.35zM147.9 415.9h1.35v1.35h-1.35zM46.4 401.7h1.35v1.35h-1.35zM280.9 372.7h1.35v1.35h-1.35zM291.4 399.9h1.35v1.35h-1.35zM342.4 361.7h1.35v1.35h-1.35zM390.6 394.3h1.35v1.35h-1.35zM129.4 410.5h1.35v1.35h-1.35zM214.0 363.8h1.35v1.35h-1.35zM212.6 404.9h1.35v1.35h-1.35zM350.5 383.3h1.35v1.35h-1.35zM404.2 366.7h1.35v1.35h-1.35zM278.1 385.2h1.35v1.35h-1.35zM167.9 375.9h1.35v1.35h-1.35zM365.0 376.5h1.35v1.35h-1.35zM269.3 411.9h1.35v1.35h-1.35zM159.7 419.0h1.35v1.35h-1.35zM189.8 404.1h1.35v1.35h-1.35zM560.8 315.7h1.35v1.35h-1.35zM318.7 407.7h1.35v1.35h-1.35zM412.9 364.8h1.35v1.35h-1.35zM65.2 362.8h1.35v1.35h-1.35zM172.3 386.8h1.35v1.35h-1.35zM245.4 373.6h1.35v1.35h-1.35zM654.3 344.7h1.35v1.35h-1.35zM165.2 412.2h1.35v1.35h-1.35zM138.0 381.5h1.35v1.35h-1.35zM348.6 350.8h1.35v1.35h-1.35zM370.5 393.6h1.35v1.35h-1.35zM202.2 390.5h1.35v1.35h-1.35zM68.0 401.3h1.35v1.35h-1.35zM183.0 396.3h1.35v1.35h-1.35zM267.8 388.6h1.35v1.35h-1.35zM381.2 361.2h1.35v1.35h-1.35zM319.5 390.9h1.35v1.35h-1.35zM90.1 399.6h1.35v1.35h-1.35zM316.7 376.2h1.35v1.35h-1.35zM309.7 379.9h1.35v1.35h-1.35zM293.3 371.7h1.35v1.35h-1.35zM315.3 378.9h1.35v1.35h-1.35zM266.5 376.0h1.35v1.35h-1.35zM161.7 383.0h1.35v1.35h-1.35zM84.4 411.6h1.35v1.35h-1.35zM374.0 384.7h1.35v1.35h-1.35zM442.2 383.1h1.35v1.35h-1.35zM146.0 402.8h1.35v1.35h-1.35zM477.1 349.8h1.35v1.35h-1.35zM441.0 349.6h1.35v1.35h-1.35zM247.2 379.3h1.35v1.35h-1.35zM242.4 374.2h1.35v1.35h-1.35zM486.1 347.7h1.35v1.35h-1.35zM214.2 398.4h1.35v1.35h-1.35zM216.8 391.5h1.35v1.35h-1.35zM77.9 387.6h1.35v1.35h-1.35zM427.9 376.6h1.35v1.35h-1.35zM52.8 381.2h1.35v1.35h-1.35zM547.6 351.5h1.35v1.35h-1.35zM186.4 421.2h1.35v1.35h-1.35zM257.3 399.1h1.35v1.35h-1.35zM256.6 378.8h1.35v1.35h-1.35zM580.8 368.3h1.35v1.35h-1.35zM259.1 346.3h1.35v1.35h-1.35zM140.8 397.7h1.35v1.35h-1.35zM288.1 366.7h1.35v1.35h-1.35zM359.9 342.1h1.35v1.35h-1.35zM296.7 388.1h1.35v1.35h-1.35zM108.1 421.2h1.35v1.35h-1.35zM230.1 414.5h1.35v1.35h-1.35zM401.6 342.9h1.35v1.35h-1.35zM324.5 345.5h1.35v1.35h-1.35zM51.3 412.0h1.35v1.35h-1.35zM251.1 389.3h1.35v1.35h-1.35zM171.2 416.9h1.35v1.35h-1.35zM239.2 406.7h1.35v1.35h-1.35zM213.7 384.0h1.35v1.35h-1.35zM105.0 411.3h1.35v1.35h-1.35zM51.1 382.0h1.35v1.35h-1.35zM473.4 360.7h1.35v1.35h-1.35zM123.2 393.2h1.35v1.35h-1.35zM308.7 357.2h1.35v1.35h-1.35zM548.2 362.2h1.35v1.35h-1.35zM581.9 356.6h1.35v1.35h-1.35zM180.9 353.1h1.35v1.35h-1.35zM70.1 383.1h1.35v1.35h-1.35zM411.7 368.9h1.35v1.35h-1.35zM175.1 420.6h1.35v1.35h-1.35zM442.7 382.2h1.35v1.35h-1.35zM439.3 344.3h1.35v1.35h-1.35zM455.3 363.7h1.35v1.35h-1.35zM251.9 378.9h1.35v1.35h-1.35zM307.5 377.5h1.35v1.35h-1.35zM218.0 400.3h1.35v1.35h-1.35zM577.3 353.6h1.35v1.35h-1.35zM608.2 365.9h1.35v1.35h-1.35zM202.0 398.1h1.35v1.35h-1.35zM385.2 363.1h1.35v1.35h-1.35zM391.2 398.9h1.35v1.35h-1.35zM45.9 420.4h1.35v1.35h-1.35zM207.3 396.6h1.35v1.35h-1.35zM331.4 374.8h1.35v1.35h-1.35zM251.3 347.1h1.35v1.35h-1.35zM77.7 411.1h1.35v1.35h-1.35zM413.2 382.6h1.35v1.35h-1.35zM255.9 361.8h1.35v1.35h-1.35zM374.7 368.9h1.35v1.35h-1.35zM182.6 384.5h1.35v1.35h-1.35zM382.7 383.4h1.35v1.35h-1.35zM147.6 401.3h1.35v1.35h-1.35zM372.9 325.5h1.35v1.35h-1.35zM447.7 346.5h1.35v1.35h-1.35zM156.3 397.3h1.35v1.35h-1.35zM70.1 420.3h1.35v1.35h-1.35zM307.2 396.5h1.35v1.35h-1.35zM176.6 379.2h1.35v1.35h-1.35zM426.4 354.0h1.35v1.35h-1.35zM265.8 379.4h1.35v1.35h-1.35zM50.1 419.2h1.35v1.35h-1.35zM118.6 410.5h1.35v1.35h-1.35zM328.0 374.6h1.35v1.35h-1.35zM345.3 382.6h1.35v1.35h-1.35zM455.6 376.6h1.35v1.35h-1.35zM291.0 390.7h1.35v1.35h-1.35zM54.4 399.6h1.35v1.35h-1.35zM63.7 413.2h1.35v1.35h-1.35zM127.8 387.4h1.35v1.35h-1.35zM56.7 427.5h1.35v1.35h-1.35zM540.3 384.1h1.35v1.35h-1.35zM467.0 346.6h1.35v1.35h-1.35zM289.5 401.1h1.35v1.35h-1.35zM269.4 379.3h1.35v1.35h-1.35zM337.9 373.5h1.35v1.35h-1.35zM332.6 362.9h1.35v1.35h-1.35zM269.4 392.5h1.35v1.35h-1.35zM71.3 380.8h1.35v1.35h-1.35zM312.5 386.7h1.35v1.35h-1.35zM110.4 406.9h1.35v1.35h-1.35zM374.3 376.7h1.35v1.35h-1.35zM95.1 399.9h1.35v1.35h-1.35zM196.5 417.9h1.35v1.35h-1.35zM188.4 395.3h1.35v1.35h-1.35zM239.4 366.8h1.35v1.35h-1.35zM107.9 391.6h1.35v1.35h-1.35zM628.9 352.6h1.35v1.35h-1.35zM256.9 383.9h1.35v1.35h-1.35zM47.5 424.7h1.35v1.35h-1.35zM468.4 378.3h1.35v1.35h-1.35zM521.0 366.6h1.35v1.35h-1.35zM241.1 388.1h1.35v1.35h-1.35zM499.9 386.2h1.35v1.35h-1.35zM273.8 366.7h1.35v1.35h-1.35zM137.0 407.9h1.35v1.35h-1.35zM134.0 394.7h1.35v1.35h-1.35zM70.8 391.7h1.35v1.35h-1.35zM278.7 377.9h1.35v1.35h-1.35zM476.5 373.2h1.35v1.35h-1.35zM120.8 382.1h1.35v1.35h-1.35zM384.9 367.4h1.35v1.35h-1.35zM276.7 390.5h1.35v1.35h-1.35zM515.3 329.2h1.35v1.35h-1.35zM270.1 371.2h1.35v1.35h-1.35zM258.6 391.2h1.35v1.35h-1.35zM215.5 419.0h1.35v1.35h-1.35zM234.4 396.1h1.35v1.35h-1.35zM234.8 392.9h1.35v1.35h-1.35zM254.0 396.8h1.35v1.35h-1.35zM74.6 411.9h1.35v1.35h-1.35zM386.0 371.0h1.35v1.35h-1.35zM288.4 391.4h1.35v1.35h-1.35zM198.6 406.7h1.35v1.35h-1.35zM143.4 392.2h1.35v1.35h-1.35zM493.2 353.0h1.35v1.35h-1.35zM165.6 393.5h1.35v1.35h-1.35zM438.4 377.4h1.35v1.35h-1.35zM265.4 357.8h1.35v1.35h-1.35zM219.5 384.5h1.35v1.35h-1.35zM83.3 418.8h1.35v1.35h-1.35zM133.6 386.3h1.35v1.35h-1.35zM59.1 399.8h1.35v1.35h-1.35zM313.6 384.6h1.35v1.35h-1.35zM574.9 273.5h1.35v1.35h-1.35zM502.9 255.4h1.35v1.35h-1.35zM415.4 250.5h1.35v1.35h-1.35zM411.2 273.2h1.35v1.35h-1.35zM449.5 252.4h1.35v1.35h-1.35zM536.8 255.3h1.35v1.35h-1.35zM489.8 275.9h1.35v1.35h-1.35zM388.0 238.5h1.35v1.35h-1.35zM413.3 279.0h1.35v1.35h-1.35zM470.3 272.9h1.35v1.35h-1.35zM215.1 456.0h1.35v1.35h-1.35zM157.7 456.5h1.35v1.35h-1.35zM463.8 455.8h1.35v1.35h-1.35zM56.1 455.8h1.35v1.35h-1.35zM311.7 455.9h1.35v1.35h-1.35zM57.6 456.2h1.35v1.35h-1.35zM337.5 456.5h1.35v1.35h-1.35zM467.2 456.4h1.35v1.35h-1.35zM258.6 455.9h1.35v1.35h-1.35zM261.5 456.1h1.35v1.35h-1.35zM137.8 456.3h1.35v1.35h-1.35zM63.1 456.3h1.35v1.35h-1.35zM142.6 455.9h1.35v1.35h-1.35zM222.5 455.9h1.35v1.35h-1.35zM143.7 456.3h1.35v1.35h-1.35zM141.0 456.5h1.35v1.35h-1.35zM317.9 456.2h1.35v1.35h-1.35zM165.8 456.4h1.35v1.35h-1.35zM107.4 456.5h1.35v1.35h-1.35zM306.4 455.8h1.35v1.35h-1.35zM144.6 456.1h1.35v1.35h-1.35zM99.9 456.2h1.35v1.35h-1.35zM232.3 455.7h1.35v1.35h-1.35zM570.2 456.6h1.35v1.35h-1.35zM233.9 456.0h1.35v1.35h-1.35zM71.6 456.4h1.35v1.35h-1.35zM461.5 456.6h1.35v1.35h-1.35zM443.2 456.6h1.35v1.35h-1.35zM413.4 456.3h1.35v1.35h-1.35zM177.7 455.9h1.35v1.35h-1.35zM429.0 455.9h1.35v1.35h-1.35zM252.0 456.1h1.35v1.35h-1.35zM119.3 455.9h1.35v1.35h-1.35zM91.3 456.1h1.35v1.35h-1.35zM198.3 456.5h1.35v1.35h-1.35zM345.4 456.1h1.35v1.35h-1.35zM509.5 456.2h1.35v1.35h-1.35zM280.9 456.1h1.35v1.35h-1.35zM137.7 456.2h1.35v1.35h-1.35zM430.7 456.4h1.35v1.35h-1.35zM279.3 456.4h1.35v1.35h-1.35zM239.0 456.2h1.35v1.35h-1.35zM221.9 456.0h1.35v1.35h-1.35zM265.5 456.5h1.35v1.35h-1.35zM272.6 456.3h1.35v1.35h-1.35zM148.2 456.3h1.35v1.35h-1.35zM108.5 455.8h1.35v1.35h-1.35zM520.8 456.5h1.35v1.35h-1.35zM89.3 456.4h1.35v1.35h-1.35zM123.7 456.4h1.35v1.35h-1.35zM394.3 455.7h1.35v1.35h-1.35zM394.1 456.3h1.35v1.35h-1.35zM52.3 456.5h1.35v1.35h-1.35zM126.2 455.7h1.35v1.35h-1.35zM549.2 456.4h1.35v1.35h-1.35zM396.6 456.3h1.35v1.35h-1.35zM134.6 456.0h1.35v1.35h-1.35zM619.1 456.1h1.35v1.35h-1.35zM462.0 455.7h1.35v1.35h-1.35zM171.3 456.5h1.35v1.35h-1.35zM128.7 455.7h1.35v1.35h-1.35zM258.6 456.6h1.35v1.35h-1.35zM45.5 455.7h1.35v1.35h-1.35zM225.7 455.8h1.35v1.35h-1.35zM331.8 456.2h1.35v1.35h-1.35zM190.9 455.8h1.35v1.35h-1.35zM377.1 456.0h1.35v1.35h-1.35zM142.1 456.3h1.35v1.35h-1.35zM396.0 456.4h1.35v1.35h-1.35zM132.3 456.2h1.35v1.35h-1.35zM623.3 455.8h1.35v1.35h-1.35zM63.1 456.5h1.35v1.35h-1.35zM283.1 456.2h1.35v1.35h-1.35zM203.8 456.2h1.35v1.35h-1.35zM466.6 456.0h1.35v1.35h-1.35zM550.4 456.2h1.35v1.35h-1.35zM299.6 456.3h1.35v1.35h-1.35zM232.6 455.9h1.35v1.35h-1.35zM469.9 456.2h1.35v1.35h-1.35zM474.4 456.2h1.35v1.35h-1.35zM589.2 456.4h1.35v1.35h-1.35zM600.3 456.5h1.35v1.35h-1.35zM147.7 455.9h1.35v1.35h-1.35zM479.9 456.6h1.35v1.35h-1.35zM166.6 455.8h1.35v1.35h-1.35zM150.4 455.9h1.35v1.35h-1.35zM56.2 455.9h1.35v1.35h-1.35zM579.2 456.4h1.35v1.35h-1.35zM90.8 456.0h1.35v1.35h-1.35zM227.6 456.2h1.35v1.35h-1.35zM155.3 455.9h1.35v1.35h-1.35zM94.5 456.3h1.35v1.35h-1.35zM297.6 456.4h1.35v1.35h-1.35zM261.1 455.9h1.35v1.35h-1.35zM349.0 456.4h1.35v1.35h-1.35zM389.2 456.5h1.35v1.35h-1.35zM412.0 456.3h1.35v1.35h-1.35zM348.8 456.1h1.35v1.35h-1.35zM428.8 456.1h1.35v1.35h-1.35zM154.9 455.8h1.35v1.35h-1.35zM327.1 455.9h1.35v1.35h-1.35zM210.9 455.9h1.35v1.35h-1.35zM426.4 456.2h1.35v1.35h-1.35zM312.3 456.4h1.35v1.35h-1.35zM156.6 456.1h1.35v1.35h-1.35zM100.0 456.3h1.35v1.35h-1.35zM232.4 455.8h1.35v1.35h-1.35zM501.0 456.3h1.35v1.35h-1.35zM227.0 456.0h1.35v1.35h-1.35zM140.2 455.8h1.35v1.35h-1.35zM67.5 456.5h1.35v1.35h-1.35zM190.6 456.6h1.35v1.35h-1.35zM270.7 456.2h1.35v1.35h-1.35zM50.6 456.4h1.35v1.35h-1.35zM188.8 456.1h1.35v1.35h-1.35zM90.8 456.4h1.35v1.35h-1.35zM419.2 455.9h1.35v1.35h-1.35zM499.5 456.4h1.35v1.35h-1.35zM555.2 455.9h1.35v1.35h-1.35zM113.8 456.4h1.35v1.35h-1.35zM431.2 456.0h1.35v1.35h-1.35zM375.8 456.5h1.35v1.35h-1.35zM292.2 456.3h1.35v1.35h-1.35zM91.1 456.3h1.35v1.35h-1.35zM429.5 456.0h1.35v1.35h-1.35zM116.6 455.8h1.35v1.35h-1.35zM278.1 456.5h1.35v1.35h-1.35zM300.7 456.2h1.35v1.35h-1.35zM125.8 456.6h1.35v1.35h-1.35zM600.0 456.3h1.35v1.35h-1.35zM204.6 456.4h1.35v1.35h-1.35zM56.3 456.1h1.35v1.35h-1.35zM277.2 455.7h1.35v1.35h-1.35zM395.1 455.9h1.35v1.35h-1.35zM70.5 456.1h1.35v1.35h-1.35zM185.9 456.5h1.35v1.35h-1.35zM411.6 455.9h1.35v1.35h-1.35zM302.7 456.6h1.35v1.35h-1.35zM262.8 455.8h1.35v1.35h-1.35zM95.5 456.3h1.35v1.35h-1.35zM323.9 456.3h1.35v1.35h-1.35zM626.6 456.4h1.35v1.35h-1.35zM110.0 456.2h1.35v1.35h-1.35zM380.3 456.0h1.35v1.35h-1.35zM146.3 455.8h1.35v1.35h-1.35zM125.8 456.1h1.35v1.35h-1.35zM235.0 456.3h1.35v1.35h-1.35zM548.8 456.6h1.35v1.35h-1.35zM146.7 456.5h1.35v1.35h-1.35zM285.1 455.9h1.35v1.35h-1.35zM240.1 455.9h1.35v1.35h-1.35zM317.6 456.0h1.35v1.35h-1.35zM110.9 456.2h1.35v1.35h-1.35zM204.7 455.8h1.35v1.35h-1.35zM185.0 456.0h1.35v1.35h-1.35zM145.1 455.8h1.35v1.35h-1.35zM161.2 456.0h1.35v1.35h-1.35zM344.6 456.0h1.35v1.35h-1.35zM428.1 456.0h1.35v1.35h-1.35zM517.4 456.2h1.35v1.35h-1.35zM115.9 456.2h1.35v1.35h-1.35zM137.0 456.0h1.35v1.35h-1.35zM353.9 456.6h1.35v1.35h-1.35zM387.3 456.1h1.35v1.35h-1.35zM451.5 455.9h1.35v1.35h-1.35zM97.9 456.5h1.35v1.35h-1.35zM224.0 456.3h1.35v1.35h-1.35zM147.9 456.2h1.35v1.35h-1.35zM163.3 456.6h1.35v1.35h-1.35zM142.8 455.8h1.35v1.35h-1.35zM500.6 456.1h1.35v1.35h-1.35zM125.2 456.3h1.35v1.35h-1.35zM291.8 455.9h1.35v1.35h-1.35zM382.0 456.1h1.35v1.35h-1.35zM489.9 455.9h1.35v1.35h-1.35zM204.7 455.9h1.35v1.35h-1.35zM512.8 456.0h1.35v1.35h-1.35zM343.5 455.8h1.35v1.35h-1.35zM265.0 455.9h1.35v1.35h-1.35zM628.4 456.0h1.35v1.35h-1.35zM534.3 421.7h1.35v1.35h-1.35zM353.7 435.7h1.35v1.35h-1.35zM417.6 406.5h1.35v1.35h-1.35zM356.4 418.2h1.35v1.35h-1.35zM387.7 423.1h1.35v1.35h-1.35zM446.3 424.4h1.35v1.35h-1.35zM123.0 428.9h1.35v1.35h-1.35zM271.4 442.7h1.35v1.35h-1.35zM287.7 447.8h1.35v1.35h-1.35zM528.9 450.6h1.35v1.35h-1.35zM457.9 445.3h1.35v1.35h-1.35zM389.7 434.9h1.35v1.35h-1.35z" shape-rendering="auto"/>
<path fill="#b24030" d="M306.7 389.4h1.35v1.35h-1.35zM433.6 360.7h1.35v1.35h-1.35zM239.8 385.4h1.35v1.35h-1.35zM140.7 412.3h1.35v1.35h-1.35zM484.7 353.7h1.35v1.35h-1.35zM161.1 392.5h1.35v1.35h-1.35zM246.5 397.7h1.35v1.35h-1.35zM207.0 393.3h1.35v1.35h-1.35zM149.1 390.0h1.35v1.35h-1.35zM286.2 386.9h1.35v1.35h-1.35zM567.5 378.1h1.35v1.35h-1.35zM328.0 382.0h1.35v1.35h-1.35zM362.8 378.8h1.35v1.35h-1.35zM365.1 379.0h1.35v1.35h-1.35zM109.6 412.7h1.35v1.35h-1.35zM45.0 417.9h1.35v1.35h-1.35zM415.3 377.6h1.35v1.35h-1.35zM540.9 375.6h1.35v1.35h-1.35zM313.3 399.6h1.35v1.35h-1.35zM85.4 403.2h1.35v1.35h-1.35zM303.1 400.1h1.35v1.35h-1.35zM440.8 376.6h1.35v1.35h-1.35zM384.4 394.8h1.35v1.35h-1.35zM86.4 406.7h1.35v1.35h-1.35zM344.9 374.1h1.35v1.35h-1.35zM371.5 378.1h1.35v1.35h-1.35zM251.8 363.6h1.35v1.35h-1.35zM147.6 423.5h1.35v1.35h-1.35zM416.7 381.2h1.35v1.35h-1.35zM211.1 413.5h1.35v1.35h-1.35zM261.5 398.3h1.35v1.35h-1.35zM88.2 430.2h1.35v1.35h-1.35zM474.7 375.0h1.35v1.35h-1.35zM468.2 366.9h1.35v1.35h-1.35zM426.9 369.9h1.35v1.35h-1.35zM47.8 415.7h1.35v1.35h-1.35zM259.9 387.3h1.35v1.35h-1.35zM189.8 407.5h1.35v1.35h-1.35zM548.2 381.1h1.35v1.35h-1.35zM200.6 418.6h1.35v1.35h-1.35zM588.9 356.0h1.35v1.35h-1.35zM411.6 358.3h1.35v1.35h-1.35zM99.7 418.0h1.35v1.35h-1.35zM643.6 351.3h1.35v1.35h-1.35zM192.2 374.1h1.35v1.35h-1.35zM374.0 343.0h1.35v1.35h-1.35zM114.2 395.5h1.35v1.35h-1.35zM196.5 386.0h1.35v1.35h-1.35zM433.8 375.5h1.35v1.35h-1.35zM77.5 428.2h1.35v1.35h-1.35zM605.0 335.0h1.35v1.35h-1.35zM252.8 414.1h1.35v1.35h-1.35zM308.6 372.8h1.35v1.35h-1.35zM199.1 401.3h1.35v1.35h-1.35zM98.3 412.9h1.35v1.35h-1.35zM241.6 377.0h1.35v1.35h-1.35zM610.2 345.5h1.35v1.35h-1.35zM448.2 372.5h1.35v1.35h-1.35zM132.3 411.8h1.35v1.35h-1.35zM85.8 410.3h1.35v1.35h-1.35zM132.2 425.2h1.35v1.35h-1.35zM380.8 376.8h1.35v1.35h-1.35zM181.9 372.7h1.35v1.35h-1.35zM219.9 354.7h1.35v1.35h-1.35zM372.1 398.8h1.35v1.35h-1.35zM459.1 368.6h1.35v1.35h-1.35zM584.5 371.7h1.35v1.35h-1.35zM238.9 358.5h1.35v1.35h-1.35zM314.0 386.1h1.35v1.35h-1.35zM118.4 401.4h1.35v1.35h-1.35zM333.3 375.7h1.35v1.35h-1.35zM267.4 383.2h1.35v1.35h-1.35zM462.1 381.0h1.35v1.35h-1.35zM247.6 398.1h1.35v1.35h-1.35zM301.2 383.0h1.35v1.35h-1.35zM384.2 373.4h1.35v1.35h-1.35zM224.3 393.0h1.35v1.35h-1.35zM64.2 408.3h1.35v1.35h-1.35zM135.5 401.4h1.35v1.35h-1.35zM62.5 410.6h1.35v1.35h-1.35zM384.1 366.0h1.35v1.35h-1.35zM182.5 366.1h1.35v1.35h-1.35zM282.9 370.6h1.35v1.35h-1.35zM104.7 400.8h1.35v1.35h-1.35zM136.7 420.7h1.35v1.35h-1.35zM47.3 397.5h1.35v1.35h-1.35zM76.3 416.0h1.35v1.35h-1.35zM323.8 391.6h1.35v1.35h-1.35zM273.9 357.6h1.35v1.35h-1.35zM293.0 384.1h1.35v1.35h-1.35zM287.1 389.5h1.35v1.35h-1.35zM66.8 394.7h1.35v1.35h-1.35zM57.1 402.9h1.35v1.35h-1.35zM345.2 372.7h1.35v1.35h-1.35zM99.1 392.5h1.35v1.35h-1.35zM246.9 412.6h1.35v1.35h-1.35zM191.7 417.4h1.35v1.35h-1.35zM398.3 389.3h1.35v1.35h-1.35zM302.5 392.1h1.35v1.35h-1.35zM452.2 367.1h1.35v1.35h-1.35zM397.0 380.4h1.35v1.35h-1.35zM335.2 363.4h1.35v1.35h-1.35zM175.9 414.9h1.35v1.35h-1.35zM230.1 388.6h1.35v1.35h-1.35zM507.7 343.5h1.35v1.35h-1.35zM339.2 389.5h1.35v1.35h-1.35zM65.1 396.9h1.35v1.35h-1.35zM75.0 379.5h1.35v1.35h-1.35zM270.0 402.7h1.35v1.35h-1.35zM83.7 428.8h1.35v1.35h-1.35zM122.0 386.5h1.35v1.35h-1.35zM247.3 370.5h1.35v1.35h-1.35zM340.8 400.0h1.35v1.35h-1.35zM305.6 388.1h1.35v1.35h-1.35zM199.3 396.9h1.35v1.35h-1.35zM95.9 404.6h1.35v1.35h-1.35zM166.5 388.4h1.35v1.35h-1.35zM231.6 393.8h1.35v1.35h-1.35zM52.2 392.2h1.35v1.35h-1.35zM319.1 383.6h1.35v1.35h-1.35zM161.5 384.6h1.35v1.35h-1.35zM70.1 417.7h1.35v1.35h-1.35zM286.9 398.6h1.35v1.35h-1.35zM370.5 400.4h1.35v1.35h-1.35zM183.9 409.9h1.35v1.35h-1.35zM472.4 367.8h1.35v1.35h-1.35zM451.7 338.5h1.35v1.35h-1.35zM153.3 395.2h1.35v1.35h-1.35zM429.1 368.2h1.35v1.35h-1.35zM211.0 408.2h1.35v1.35h-1.35zM506.2 362.7h1.35v1.35h-1.35zM406.4 339.6h1.35v1.35h-1.35zM276.7 393.5h1.35v1.35h-1.35zM361.1 374.5h1.35v1.35h-1.35zM79.8 404.4h1.35v1.35h-1.35zM184.5 391.6h1.35v1.35h-1.35zM577.8 357.9h1.35v1.35h-1.35zM196.1 404.7h1.35v1.35h-1.35zM299.2 364.4h1.35v1.35h-1.35zM410.6 380.9h1.35v1.35h-1.35zM205.8 406.1h1.35v1.35h-1.35zM404.0 390.7h1.35v1.35h-1.35zM384.1 385.7h1.35v1.35h-1.35zM191.8 409.2h1.35v1.35h-1.35zM396.9 378.4h1.35v1.35h-1.35zM172.0 394.9h1.35v1.35h-1.35zM341.9 380.3h1.35v1.35h-1.35zM288.9 378.0h1.35v1.35h-1.35zM80.0 397.1h1.35v1.35h-1.35zM135.0 420.9h1.35v1.35h-1.35zM307.7 372.2h1.35v1.35h-1.35zM627.6 345.3h1.35v1.35h-1.35zM152.4 389.3h1.35v1.35h-1.35zM557.6 344.2h1.35v1.35h-1.35zM161.3 392.4h1.35v1.35h-1.35zM113.0 393.5h1.35v1.35h-1.35zM409.0 362.9h1.35v1.35h-1.35zM54.5 419.0h1.35v1.35h-1.35zM77.1 423.3h1.35v1.35h-1.35zM100.4 376.4h1.35v1.35h-1.35zM400.7 325.8h1.35v1.35h-1.35zM220.1 395.7h1.35v1.35h-1.35zM272.1 364.2h1.35v1.35h-1.35zM347.7 381.9h1.35v1.35h-1.35zM493.5 375.8h1.35v1.35h-1.35zM479.5 364.8h1.35v1.35h-1.35zM419.9 390.7h1.35v1.35h-1.35zM269.9 397.4h1.35v1.35h-1.35zM124.0 417.7h1.35v1.35h-1.35zM355.4 338.8h1.35v1.35h-1.35zM63.0 388.6h1.35v1.35h-1.35zM68.1 407.0h1.35v1.35h-1.35zM107.5 409.3h1.35v1.35h-1.35zM244.7 380.4h1.35v1.35h-1.35zM597.3 341.3h1.35v1.35h-1.35zM101.2 400.5h1.35v1.35h-1.35zM116.8 384.1h1.35v1.35h-1.35zM54.4 389.2h1.35v1.35h-1.35zM354.8 388.1h1.35v1.35h-1.35zM202.3 387.6h1.35v1.35h-1.35zM587.0 363.8h1.35v1.35h-1.35zM135.6 410.0h1.35v1.35h-1.35zM541.0 375.5h1.35v1.35h-1.35zM231.0 401.3h1.35v1.35h-1.35zM110.2 403.2h1.35v1.35h-1.35zM306.4 388.2h1.35v1.35h-1.35zM354.2 363.9h1.35v1.35h-1.35zM410.7 379.3h1.35v1.35h-1.35zM503.6 340.0h1.35v1.35h-1.35zM286.7 384.5h1.35v1.35h-1.35zM139.0 419.9h1.35v1.35h-1.35zM233.8 399.8h1.35v1.35h-1.35zM56.7 377.5h1.35v1.35h-1.35zM84.6 406.9h1.35v1.35h-1.35zM200.5 383.7h1.35v1.35h-1.35zM82.9 393.7h1.35v1.35h-1.35zM100.7 381.5h1.35v1.35h-1.35zM67.1 397.0h1.35v1.35h-1.35zM144.5 365.8h1.35v1.35h-1.35zM556.1 372.4h1.35v1.35h-1.35zM68.9 415.4h1.35v1.35h-1.35zM135.4 426.2h1.35v1.35h-1.35zM261.4 388.6h1.35v1.35h-1.35zM276.0 399.5h1.35v1.35h-1.35zM103.1 409.6h1.35v1.35h-1.35zM430.2 372.4h1.35v1.35h-1.35zM139.9 397.3h1.35v1.35h-1.35zM256.3 364.2h1.35v1.35h-1.35zM160.3 395.1h1.35v1.35h-1.35zM127.2 411.9h1.35v1.35h-1.35zM142.5 408.7h1.35v1.35h-1.35zM236.8 416.4h1.35v1.35h-1.35zM323.8 401.7h1.35v1.35h-1.35zM160.5 401.5h1.35v1.35h-1.35zM378.2 380.0h1.35v1.35h-1.35zM147.0 397.9h1.35v1.35h-1.35zM53.6 426.8h1.35v1.35h-1.35zM358.6 400.8h1.35v1.35h-1.35zM417.5 389.4h1.35v1.35h-1.35zM54.5 390.0h1.35v1.35h-1.35zM202.5 383.1h1.35v1.35h-1.35zM609.7 347.6h1.35v1.35h-1.35zM150.9 392.9h1.35v1.35h-1.35zM334.4 379.7h1.35v1.35h-1.35zM542.3 351.6h1.35v1.35h-1.35zM179.9 389.4h1.35v1.35h-1.35zM311.6 383.9h1.35v1.35h-1.35zM170.5 423.3h1.35v1.35h-1.35zM203.6 394.8h1.35v1.35h-1.35zM258.9 391.5h1.35v1.35h-1.35zM401.4 370.0h1.35v1.35h-1.35zM418.6 332.0h1.35v1.35h-1.35zM162.3 391.7h1.35v1.35h-1.35zM138.4 392.3h1.35v1.35h-1.35zM429.4 383.7h1.35v1.35h-1.35zM341.9 374.6h1.35v1.35h-1.35zM160.3 408.8h1.35v1.35h-1.35zM234.0 405.2h1.35v1.35h-1.35zM188.3 406.2h1.35v1.35h-1.35zM531.1 357.7h1.35v1.35h-1.35zM376.7 368.6h1.35v1.35h-1.35zM113.6 419.6h1.35v1.35h-1.35zM310.4 371.8h1.35v1.35h-1.35zM154.5 371.6h1.35v1.35h-1.35zM463.0 367.2h1.35v1.35h-1.35zM45.2 429.2h1.35v1.35h-1.35zM241.1 398.2h1.35v1.35h-1.35zM51.5 404.6h1.35v1.35h-1.35zM341.1 366.0h1.35v1.35h-1.35zM295.4 399.6h1.35v1.35h-1.35zM354.5 366.9h1.35v1.35h-1.35zM62.8 393.7h1.35v1.35h-1.35zM251.1 382.9h1.35v1.35h-1.35zM184.6 373.7h1.35v1.35h-1.35zM506.7 361.0h1.35v1.35h-1.35zM87.9 404.7h1.35v1.35h-1.35zM152.3 368.1h1.35v1.35h-1.35zM593.5 374.5h1.35v1.35h-1.35zM446.3 370.3h1.35v1.35h-1.35zM323.6 372.0h1.35v1.35h-1.35zM585.3 334.0h1.35v1.35h-1.35zM324.2 383.8h1.35v1.35h-1.35zM149.8 392.6h1.35v1.35h-1.35zM387.8 358.8h1.35v1.35h-1.35zM201.0 403.4h1.35v1.35h-1.35zM380.7 346.1h1.35v1.35h-1.35zM153.5 418.2h1.35v1.35h-1.35zM338.8 401.3h1.35v1.35h-1.35zM363.4 390.8h1.35v1.35h-1.35zM94.3 400.9h1.35v1.35h-1.35zM225.9 381.2h1.35v1.35h-1.35zM264.0 372.7h1.35v1.35h-1.35zM104.2 402.4h1.35v1.35h-1.35zM163.9 403.2h1.35v1.35h-1.35zM376.3 382.6h1.35v1.35h-1.35zM573.1 359.1h1.35v1.35h-1.35zM69.5 393.8h1.35v1.35h-1.35zM461.9 360.7h1.35v1.35h-1.35zM636.2 362.0h1.35v1.35h-1.35zM296.8 394.2h1.35v1.35h-1.35zM46.7 423.4h1.35v1.35h-1.35zM90.9 417.3h1.35v1.35h-1.35zM299.4 356.8h1.35v1.35h-1.35zM168.3 417.0h1.35v1.35h-1.35zM57.2 380.8h1.35v1.35h-1.35zM162.4 399.2h1.35v1.35h-1.35zM232.1 393.1h1.35v1.35h-1.35zM116.4 418.3h1.35v1.35h-1.35zM267.4 391.9h1.35v1.35h-1.35zM158.9 392.8h1.35v1.35h-1.35zM191.0 391.4h1.35v1.35h-1.35zM182.6 367.0h1.35v1.35h-1.35zM564.8 369.1h1.35v1.35h-1.35zM154.1 404.4h1.35v1.35h-1.35zM268.1 386.6h1.35v1.35h-1.35zM303.9 363.7h1.35v1.35h-1.35zM75.8 383.3h1.35v1.35h-1.35zM58.0 422.9h1.35v1.35h-1.35zM602.3 363.3h1.35v1.35h-1.35zM227.2 393.7h1.35v1.35h-1.35zM233.1 382.4h1.35v1.35h-1.35zM185.6 386.7h1.35v1.35h-1.35zM214.7 409.0h1.35v1.35h-1.35zM198.7 414.8h1.35v1.35h-1.35zM172.9 408.1h1.35v1.35h-1.35zM559.6 365.6h1.35v1.35h-1.35zM233.0 406.3h1.35v1.35h-1.35zM394.4 362.8h1.35v1.35h-1.35zM278.6 371.9h1.35v1.35h-1.35zM198.5 398.3h1.35v1.35h-1.35zM360.0 368.6h1.35v1.35h-1.35zM167.4 372.2h1.35v1.35h-1.35zM408.2 373.5h1.35v1.35h-1.35zM47.3 410.8h1.35v1.35h-1.35zM309.7 385.1h1.35v1.35h-1.35zM157.9 409.4h1.35v1.35h-1.35zM204.7 410.9h1.35v1.35h-1.35zM94.1 401.4h1.35v1.35h-1.35zM188.9 405.5h1.35v1.35h-1.35zM298.9 395.1h1.35v1.35h-1.35zM48.8 426.0h1.35v1.35h-1.35zM298.4 377.5h1.35v1.35h-1.35zM171.0 379.7h1.35v1.35h-1.35zM209.2 395.4h1.35v1.35h-1.35zM477.6 373.5h1.35v1.35h-1.35zM68.1 426.5h1.35v1.35h-1.35zM507.7 373.1h1.35v1.35h-1.35zM181.7 398.2h1.35v1.35h-1.35zM463.1 352.0h1.35v1.35h-1.35zM306.9 387.9h1.35v1.35h-1.35zM180.0 391.5h1.35v1.35h-1.35zM174.0 382.4h1.35v1.35h-1.35zM290.4 406.8h1.35v1.35h-1.35zM101.6 408.4h1.35v1.35h-1.35zM437.1 367.1h1.35v1.35h-1.35zM79.1 418.5h1.35v1.35h-1.35zM168.8 403.5h1.35v1.35h-1.35zM198.1 407.0h1.35v1.35h-1.35zM123.7 405.3h1.35v1.35h-1.35zM68.6 429.4h1.35v1.35h-1.35zM175.4 412.0h1.35v1.35h-1.35zM220.2 397.3h1.35v1.35h-1.35zM324.9 388.0h1.35v1.35h-1.35zM494.7 385.5h1.35v1.35h-1.35zM109.3 413.0h1.35v1.35h-1.35zM341.9 367.2h1.35v1.35h-1.35zM426.0 378.2h1.35v1.35h-1.35zM117.5 379.7h1.35v1.35h-1.35zM83.2 389.8h1.35v1.35h-1.35zM109.9 336.6h1.35v1.35h-1.35zM415.0 357.7h1.35v1.35h-1.35zM51.3 415.2h1.35v1.35h-1.35zM531.0 331.8h1.35v1.35h-1.35zM46.4 402.8h1.35v1.35h-1.35zM181.3 387.6h1.35v1.35h-1.35zM336.8 364.6h1.35v1.35h-1.35zM310.5 387.8h1.35v1.35h-1.35zM171.3 413.3h1.35v1.35h-1.35zM381.2 389.4h1.35v1.35h-1.35zM56.7 429.7h1.35v1.35h-1.35zM466.7 369.6h1.35v1.35h-1.35zM467.1 354.3h1.35v1.35h-1.35zM424.7 380.0h1.35v1.35h-1.35zM207.0 395.3h1.35v1.35h-1.35zM110.4 389.5h1.35v1.35h-1.35zM50.0 372.2h1.35v1.35h-1.35zM327.6 391.4h1.35v1.35h-1.35zM167.5 400.8h1.35v1.35h-1.35zM50.9 353.7h1.35v1.35h-1.35zM430.5 363.4h1.35v1.35h-1.35zM52.5 425.3h1.35v1.35h-1.35zM241.7 365.6h1.35v1.35h-1.35zM249.9 380.1h1.35v1.35h-1.35zM168.0 398.8h1.35v1.35h-1.35zM83.2 367.8h1.35v1.35h-1.35zM357.2 382.8h1.35v1.35h-1.35zM260.8 384.9h1.35v1.35h-1.35zM364.2 362.2h1.35v1.35h-1.35zM300.2 388.9h1.35v1.35h-1.35zM240.1 357.9h1.35v1.35h-1.35zM94.1 390.9h1.35v1.35h-1.35zM83.2 397.9h1.35v1.35h-1.35zM150.3 396.4h1.35v1.35h-1.35zM553.8 359.4h1.35v1.35h-1.35zM53.1 435.7h1.35v1.35h-1.35zM428.1 371.4h1.35v1.35h-1.35zM160.6 370.9h1.35v1.35h-1.35zM142.0 408.0h1.35v1.35h-1.35zM364.1 378.3h1.35v1.35h-1.35zM63.2 426.9h1.35v1.35h-1.35zM328.8 387.4h1.35v1.35h-1.35zM385.8 392.4h1.35v1.35h-1.35zM199.5 372.2h1.35v1.35h-1.35zM161.0 410.4h1.35v1.35h-1.35zM495.5 370.2h1.35v1.35h-1.35zM118.1 415.7h1.35v1.35h-1.35zM137.6 412.5h1.35v1.35h-1.35zM426.1 362.1h1.35v1.35h-1.35zM424.8 360.9h1.35v1.35h-1.35zM295.1 394.0h1.35v1.35h-1.35zM381.8 372.4h1.35v1.35h-1.35zM196.5 397.2h1.35v1.35h-1.35zM88.0 427.6h1.35v1.35h-1.35zM73.7 419.2h1.35v1.35h-1.35zM224.7 377.5h1.35v1.35h-1.35zM527.2 369.2h1.35v1.35h-1.35zM372.9 369.0h1.35v1.35h-1.35zM593.0 348.6h1.35v1.35h-1.35zM178.7 406.1h1.35v1.35h-1.35zM464.4 380.7h1.35v1.35h-1.35zM419.3 381.9h1.35v1.35h-1.35zM346.2 353.2h1.35v1.35h-1.35zM131.9 383.6h1.35v1.35h-1.35zM234.0 410.3h1.35v1.35h-1.35zM200.7 385.7h1.35v1.35h-1.35zM139.8 364.8h1.35v1.35h-1.35zM529.3 359.4h1.35v1.35h-1.35zM168.0 411.0h1.35v1.35h-1.35zM253.3 386.3h1.35v1.35h-1.35zM363.3 382.1h1.35v1.35h-1.35zM375.2 363.6h1.35v1.35h-1.35zM189.3 365.3h1.35v1.35h-1.35zM481.4 346.9h1.35v1.35h-1.35zM229.9 373.0h1.35v1.35h-1.35zM394.9 384.9h1.35v1.35h-1.35zM242.4 350.4h1.35v1.35h-1.35zM203.5 402.9h1.35v1.35h-1.35zM242.6 396.1h1.35v1.35h-1.35zM431.7 361.1h1.35v1.35h-1.35zM134.1 417.8h1.35v1.35h-1.35zM342.6 389.5h1.35v1.35h-1.35zM422.6 361.4h1.35v1.35h-1.35zM208.9 389.3h1.35v1.35h-1.35zM194.7 395.0h1.35v1.35h-1.35zM602.2 347.7h1.35v1.35h-1.35zM414.2 393.7h1.35v1.35h-1.35zM133.5 402.9h1.35v1.35h-1.35zM171.5 386.3h1.35v1.35h-1.35zM271.2 404.7h1.35v1.35h-1.35zM135.0 371.0h1.35v1.35h-1.35zM415.1 343.6h1.35v1.35h-1.35zM286.2 337.4h1.35v1.35h-1.35zM159.7 375.7h1.35v1.35h-1.35zM451.7 352.4h1.35v1.35h-1.35zM108.6 395.8h1.35v1.35h-1.35zM208.3 404.3h1.35v1.35h-1.35zM75.9 397.0h1.35v1.35h-1.35zM294.1 390.8h1.35v1.35h-1.35zM188.9 373.1h1.35v1.35h-1.35zM180.2 381.9h1.35v1.35h-1.35zM327.0 357.9h1.35v1.35h-1.35zM398.3 379.9h1.35v1.35h-1.35zM384.1 388.2h1.35v1.35h-1.35zM464.5 341.7h1.35v1.35h-1.35zM390.4 386.5h1.35v1.35h-1.35zM173.0 403.8h1.35v1.35h-1.35zM203.9 415.4h1.35v1.35h-1.35zM84.3 379.6h1.35v1.35h-1.35zM349.9 401.3h1.35v1.35h-1.35zM166.1 401.7h1.35v1.35h-1.35zM62.2 419.9h1.35v1.35h-1.35zM164.4 399.5h1.35v1.35h-1.35zM250.7 383.1h1.35v1.35h-1.35zM355.6 403.1h1.35v1.35h-1.35zM390.6 370.8h1.35v1.35h-1.35zM106.0 414.7h1.35v1.35h-1.35zM239.3 409.2h1.35v1.35h-1.35zM384.4 394.3h1.35v1.35h-1.35zM328.5 387.5h1.35v1.35h-1.35zM348.1 364.7h1.35v1.35h-1.35zM353.1 355.8h1.35v1.35h-1.35zM83.9 387.3h1.35v1.35h-1.35zM289.9 362.8h1.35v1.35h-1.35zM58.5 433.3h1.35v1.35h-1.35zM81.2 397.7h1.35v1.35h-1.35zM122.8 385.0h1.35v1.35h-1.35zM91.7 403.6h1.35v1.35h-1.35zM387.5 367.4h1.35v1.35h-1.35zM238.5 397.8h1.35v1.35h-1.35zM93.2 405.9h1.35v1.35h-1.35zM291.7 384.3h1.35v1.35h-1.35zM210.6 398.7h1.35v1.35h-1.35zM342.9 389.0h1.35v1.35h-1.35zM514.0 370.4h1.35v1.35h-1.35zM65.7 398.0h1.35v1.35h-1.35zM361.8 388.1h1.35v1.35h-1.35zM278.5 398.2h1.35v1.35h-1.35zM187.8 410.4h1.35v1.35h-1.35zM62.9 404.7h1.35v1.35h-1.35zM538.6 367.6h1.35v1.35h-1.35zM101.8 394.6h1.35v1.35h-1.35zM541.2 349.6h1.35v1.35h-1.35zM71.0 380.3h1.35v1.35h-1.35zM86.2 427.7h1.35v1.35h-1.35zM210.0 405.5h1.35v1.35h-1.35zM216.7 392.5h1.35v1.35h-1.35zM59.2 377.1h1.35v1.35h-1.35zM560.0 354.8h1.35v1.35h-1.35zM448.6 378.2h1.35v1.35h-1.35zM218.1 371.1h1.35v1.35h-1.35zM157.8 408.2h1.35v1.35h-1.35zM542.8 354.5h1.35v1.35h-1.35zM472.6 370.2h1.35v1.35h-1.35zM248.2 395.3h1.35v1.35h-1.35zM375.7 375.8h1.35v1.35h-1.35zM80.5 410.1h1.35v1.35h-1.35zM254.8 359.6h1.35v1.35h-1.35zM544.0 366.9h1.35v1.35h-1.35zM391.0 354.4h1.35v1.35h-1.35zM81.0 419.1h1.35v1.35h-1.35zM310.7 372.6h1.35v1.35h-1.35zM250.8 389.2h1.35v1.35h-1.35zM242.3 372.4h1.35v1.35h-1.35zM58.6 390.3h1.35v1.35h-1.35zM566.1 351.1h1.35v1.35h-1.35zM65.6 390.1h1.35v1.35h-1.35zM450.5 346.9h1.35v1.35h-1.35zM135.5 385.2h1.35v1.35h-1.35zM80.4 397.6h1.35v1.35h-1.35zM86.0 394.7h1.35v1.35h-1.35zM455.7 377.7h1.35v1.35h-1.35zM169.6 417.9h1.35v1.35h-1.35zM398.9 354.9h1.35v1.35h-1.35zM101.8 405.6h1.35v1.35h-1.35zM95.0 402.3h1.35v1.35h-1.35zM299.0 407.1h1.35v1.35h-1.35zM568.4 335.9h1.35v1.35h-1.35zM157.8 414.2h1.35v1.35h-1.35zM130.3 414.7h1.35v1.35h-1.35zM217.6 400.8h1.35v1.35h-1.35zM48.1 401.5h1.35v1.35h-1.35zM122.8 400.5h1.35v1.35h-1.35zM437.5 370.2h1.35v1.35h-1.35zM110.1 417.1h1.35v1.35h-1.35zM317.5 388.8h1.35v1.35h-1.35zM373.0 388.5h1.35v1.35h-1.35zM247.8 398.6h1.35v1.35h-1.35zM89.0 421.3h1.35v1.35h-1.35zM68.5 357.9h1.35v1.35h-1.35zM226.0 390.6h1.35v1.35h-1.35zM244.3 391.0h1.35v1.35h-1.35zM382.9 372.8h1.35v1.35h-1.35zM431.6 367.0h1.35v1.35h-1.35zM111.5 390.2h1.35v1.35h-1.35zM543.6 363.7h1.35v1.35h-1.35zM194.7 401.2h1.35v1.35h-1.35zM262.5 372.2h1.35v1.35h-1.35zM281.3 385.2h1.35v1.35h-1.35zM140.9 416.8h1.35v1.35h-1.35zM78.1 412.0h1.35v1.35h-1.35zM297.5 402.0h1.35v1.35h-1.35zM321.0 366.3h1.35v1.35h-1.35zM461.1 361.7h1.35v1.35h-1.35zM322.8 396.8h1.35v1.35h-1.35zM138.2 400.9h1.35v1.35h-1.35zM274.1 372.2h1.35v1.35h-1.35zM175.5 369.4h1.35v1.35h-1.35zM127.4 363.3h1.35v1.35h-1.35zM230.1 371.8h1.35v1.35h-1.35zM251.1 394.0h1.35v1.35h-1.35zM301.2 393.8h1.35v1.35h-1.35zM445.2 346.8h1.35v1.35h-1.35zM71.7 356.5h1.35v1.35h-1.35zM350.3 359.2h1.35v1.35h-1.35zM161.9 368.8h1.35v1.35h-1.35zM341.6 374.4h1.35v1.35h-1.35zM193.0 388.6h1.35v1.35h-1.35zM205.1 384.4h1.35v1.35h-1.35zM225.9 371.7h1.35v1.35h-1.35zM133.8 395.5h1.35v1.35h-1.35zM269.1 386.3h1.35v1.35h-1.35zM191.0 410.9h1.35v1.35h-1.35zM249.5 363.8h1.35v1.35h-1.35zM352.6 392.4h1.35v1.35h-1.35zM309.4 378.8h1.35v1.35h-1.35zM139.8 409.0h1.35v1.35h-1.35zM101.4 412.3h1.35v1.35h-1.35zM294.6 384.2h1.35v1.35h-1.35zM232.3 380.4h1.35v1.35h-1.35zM120.9 378.0h1.35v1.35h-1.35zM266.2 388.2h1.35v1.35h-1.35zM172.2 406.2h1.35v1.35h-1.35zM585.6 351.6h1.35v1.35h-1.35zM460.0 378.0h1.35v1.35h-1.35zM324.2 403.7h1.35v1.35h-1.35zM62.3 428.3h1.35v1.35h-1.35zM496.5 358.3h1.35v1.35h-1.35zM195.6 391.4h1.35v1.35h-1.35zM476.8 342.3h1.35v1.35h-1.35zM395.2 387.4h1.35v1.35h-1.35zM288.3 359.3h1.35v1.35h-1.35zM157.3 404.3h1.35v1.35h-1.35zM524.5 338.5h1.35v1.35h-1.35zM109.7 399.3h1.35v1.35h-1.35zM177.0 409.2h1.35v1.35h-1.35zM350.3 382.7h1.35v1.35h-1.35zM309.3 378.5h1.35v1.35h-1.35zM117.0 407.7h1.35v1.35h-1.35zM89.7 420.1h1.35v1.35h-1.35zM163.5 394.5h1.35v1.35h-1.35zM604.5 357.9h1.35v1.35h-1.35zM178.0 421.6h1.35v1.35h-1.35zM218.6 389.2h1.35v1.35h-1.35zM400.9 351.8h1.35v1.35h-1.35zM47.7 385.5h1.35v1.35h-1.35zM434.7 382.3h1.35v1.35h-1.35zM381.0 365.0h1.35v1.35h-1.35zM284.6 396.1h1.35v1.35h-1.35zM618.9 342.7h1.35v1.35h-1.35zM249.0 413.0h1.35v1.35h-1.35zM223.8 386.2h1.35v1.35h-1.35zM148.3 424.5h1.35v1.35h-1.35zM95.2 409.3h1.35v1.35h-1.35zM82.1 401.9h1.35v1.35h-1.35zM124.9 396.7h1.35v1.35h-1.35zM170.9 405.3h1.35v1.35h-1.35zM83.5 406.0h1.35v1.35h-1.35zM123.2 422.9h1.35v1.35h-1.35zM118.7 386.7h1.35v1.35h-1.35zM437.2 381.2h1.35v1.35h-1.35zM197.7 386.5h1.35v1.35h-1.35zM167.3 392.2h1.35v1.35h-1.35zM283.8 380.3h1.35v1.35h-1.35zM116.5 426.1h1.35v1.35h-1.35zM263.0 377.3h1.35v1.35h-1.35zM98.1 406.2h1.35v1.35h-1.35zM368.5 388.4h1.35v1.35h-1.35zM114.2 407.6h1.35v1.35h-1.35zM285.7 364.7h1.35v1.35h-1.35zM70.6 408.7h1.35v1.35h-1.35zM456.0 367.2h1.35v1.35h-1.35zM550.3 338.5h1.35v1.35h-1.35zM199.6 400.9h1.35v1.35h-1.35zM47.1 436.3h1.35v1.35h-1.35zM143.3 387.7h1.35v1.35h-1.35zM491.1 360.9h1.35v1.35h-1.35zM504.2 363.9h1.35v1.35h-1.35zM60.5 393.6h1.35v1.35h-1.35zM45.4 410.8h1.35v1.35h-1.35zM544.3 360.8h1.35v1.35h-1.35zM234.0 406.2h1.35v1.35h-1.35zM73.1 422.6h1.35v1.35h-1.35zM180.3 397.8h1.35v1.35h-1.35zM489.2 360.0h1.35v1.35h-1.35zM459.4 363.9h1.35v1.35h-1.35zM240.1 380.8h1.35v1.35h-1.35zM142.2 395.0h1.35v1.35h-1.35zM167.3 407.0h1.35v1.35h-1.35zM87.0 394.1h1.35v1.35h-1.35zM252.3 409.7h1.35v1.35h-1.35zM172.1 399.6h1.35v1.35h-1.35zM79.9 425.1h1.35v1.35h-1.35zM389.8 366.2h1.35v1.35h-1.35zM185.9 393.0h1.35v1.35h-1.35zM85.9 404.4h1.35v1.35h-1.35zM425.4 344.8h1.35v1.35h-1.35zM306.1 402.5h1.35v1.35h-1.35zM570.2 352.2h1.35v1.35h-1.35zM98.4 403.0h1.35v1.35h-1.35zM294.3 401.0h1.35v1.35h-1.35zM75.2 385.8h1.35v1.35h-1.35zM97.7 404.7h1.35v1.35h-1.35zM240.9 381.2h1.35v1.35h-1.35zM372.1 370.0h1.35v1.35h-1.35zM336.0 367.4h1.35v1.35h-1.35zM212.5 373.0h1.35v1.35h-1.35zM591.7 343.5h1.35v1.35h-1.35zM234.0 347.6h1.35v1.35h-1.35zM400.0 376.0h1.35v1.35h-1.35zM227.4 414.5h1.35v1.35h-1.35zM287.8 390.5h1.35v1.35h-1.35zM78.3 387.0h1.35v1.35h-1.35zM357.8 386.9h1.35v1.35h-1.35zM528.4 351.6h1.35v1.35h-1.35zM76.1 417.0h1.35v1.35h-1.35zM335.7 383.5h1.35v1.35h-1.35zM394.0 357.5h1.35v1.35h-1.35zM166.1 404.4h1.35v1.35h-1.35zM350.9 381.3h1.35v1.35h-1.35zM151.4 418.8h1.35v1.35h-1.35zM579.4 333.1h1.35v1.35h-1.35zM375.0 384.6h1.35v1.35h-1.35zM96.6 388.0h1.35v1.35h-1.35zM57.3 402.4h1.35v1.35h-1.35zM273.4 404.3h1.35v1.35h-1.35zM214.3 388.8h1.35v1.35h-1.35zM643.3 362.4h1.35v1.35h-1.35zM541.1 380.7h1.35v1.35h-1.35zM135.1 397.2h1.35v1.35h-1.35zM229.0 394.3h1.35v1.35h-1.35zM226.3 385.4h1.35v1.35h-1.35zM132.2 374.2h1.35v1.35h-1.35zM305.0 364.8h1.35v1.35h-1.35zM98.0 416.3h1.35v1.35h-1.35zM151.6 411.7h1.35v1.35h-1.35zM157.5 393.1h1.35v1.35h-1.35zM435.0 370.2h1.35v1.35h-1.35zM406.5 380.8h1.35v1.35h-1.35zM49.9 331.1h1.35v1.35h-1.35zM237.8 400.9h1.35v1.35h-1.35zM196.2 403.0h1.35v1.35h-1.35zM435.4 375.5h1.35v1.35h-1.35zM128.0 369.5h1.35v1.35h-1.35zM85.1 397.9h1.35v1.35h-1.35zM77.6 406.6h1.35v1.35h-1.35zM248.7 390.4h1.35v1.35h-1.35zM263.1 397.5h1.35v1.35h-1.35zM46.5 427.9h1.35v1.35h-1.35zM431.5 354.1h1.35v1.35h-1.35zM571.0 350.2h1.35v1.35h-1.35zM134.0 378.9h1.35v1.35h-1.35zM165.5 395.5h1.35v1.35h-1.35zM158.4 414.1h1.35v1.35h-1.35zM356.2 366.8h1.35v1.35h-1.35zM124.9 361.3h1.35v1.35h-1.35zM151.0 368.3h1.35v1.35h-1.35zM121.0 427.8h1.35v1.35h-1.35zM60.4 434.6h1.35v1.35h-1.35zM331.5 399.6h1.35v1.35h-1.35zM248.1 401.7h1.35v1.35h-1.35zM372.9 371.5h1.35v1.35h-1.35zM223.8 407.5h1.35v1.35h-1.35zM339.1 380.5h1.35v1.35h-1.35zM102.0 398.7h1.35v1.35h-1.35zM237.9 384.4h1.35v1.35h-1.35zM364.6 394.3h1.35v1.35h-1.35zM47.5 397.4h1.35v1.35h-1.35zM363.1 379.8h1.35v1.35h-1.35zM477.9 354.5h1.35v1.35h-1.35zM460.8 371.3h1.35v1.35h-1.35zM290.2 384.8h1.35v1.35h-1.35zM251.7 386.6h1.35v1.35h-1.35zM55.7 412.7h1.35v1.35h-1.35zM420.5 379.5h1.35v1.35h-1.35zM397.9 390.2h1.35v1.35h-1.35zM47.8 382.6h1.35v1.35h-1.35zM51.0 391.2h1.35v1.35h-1.35zM188.6 391.0h1.35v1.35h-1.35zM305.9 382.1h1.35v1.35h-1.35zM178.6 390.5h1.35v1.35h-1.35zM124.5 382.6h1.35v1.35h-1.35zM74.7 365.3h1.35v1.35h-1.35zM135.7 388.3h1.35v1.35h-1.35zM258.5 412.9h1.35v1.35h-1.35zM131.1 399.4h1.35v1.35h-1.35zM71.7 399.6h1.35v1.35h-1.35zM343.8 387.5h1.35v1.35h-1.35zM263.4 383.1h1.35v1.35h-1.35zM300.5 386.6h1.35v1.35h-1.35zM412.2 390.5h1.35v1.35h-1.35zM90.1 432.0h1.35v1.35h-1.35zM308.4 396.9h1.35v1.35h-1.35zM69.4 394.7h1.35v1.35h-1.35zM509.6 337.2h1.35v1.35h-1.35zM153.9 419.1h1.35v1.35h-1.35zM85.2 375.2h1.35v1.35h-1.35zM307.8 375.6h1.35v1.35h-1.35zM225.9 370.9h1.35v1.35h-1.35zM315.4 386.3h1.35v1.35h-1.35zM373.7 388.8h1.35v1.35h-1.35zM340.1 357.0h1.35v1.35h-1.35zM340.9 344.3h1.35v1.35h-1.35zM191.0 406.6h1.35v1.35h-1.35zM127.3 407.3h1.35v1.35h-1.35zM380.1 392.0h1.35v1.35h-1.35zM162.6 388.1h1.35v1.35h-1.35zM162.9 419.7h1.35v1.35h-1.35zM434.6 382.6h1.35v1.35h-1.35zM188.1 379.5h1.35v1.35h-1.35zM145.5 393.1h1.35v1.35h-1.35zM201.4 400.0h1.35v1.35h-1.35zM105.5 382.7h1.35v1.35h-1.35zM157.9 391.3h1.35v1.35h-1.35zM132.1 377.2h1.35v1.35h-1.35zM65.3 416.8h1.35v1.35h-1.35zM259.2 358.4h1.35v1.35h-1.35zM452.5 389.4h1.35v1.35h-1.35zM146.0 375.3h1.35v1.35h-1.35zM301.6 382.6h1.35v1.35h-1.35zM119.3 419.3h1.35v1.35h-1.35zM252.4 353.2h1.35v1.35h-1.35zM270.9 411.4h1.35v1.35h-1.35zM122.7 389.8h1.35v1.35h-1.35zM473.1 365.8h1.35v1.35h-1.35zM148.4 407.3h1.35v1.35h-1.35zM80.7 369.5h1.35v1.35h-1.35zM516.6 362.6h1.35v1.35h-1.35zM123.5 371.8h1.35v1.35h-1.35zM233.4 375.5h1.35v1.35h-1.35zM219.0 382.1h1.35v1.35h-1.35zM134.0 355.3h1.35v1.35h-1.35zM86.6 387.1h1.35v1.35h-1.35zM579.8 370.5h1.35v1.35h-1.35zM101.2 413.0h1.35v1.35h-1.35zM234.4 392.4h1.35v1.35h-1.35zM357.7 353.0h1.35v1.35h-1.35zM616.6 365.7h1.35v1.35h-1.35zM200.6 384.3h1.35v1.35h-1.35zM347.6 392.3h1.35v1.35h-1.35zM77.0 408.0h1.35v1.35h-1.35zM278.3 383.6h1.35v1.35h-1.35zM555.6 353.4h1.35v1.35h-1.35zM196.6 391.3h1.35v1.35h-1.35zM276.2 368.9h1.35v1.35h-1.35zM69.8 391.3h1.35v1.35h-1.35zM69.6 388.5h1.35v1.35h-1.35zM318.0 382.0h1.35v1.35h-1.35zM221.4 418.7h1.35v1.35h-1.35zM437.3 365.9h1.35v1.35h-1.35zM113.8 397.9h1.35v1.35h-1.35zM443.3 385.2h1.35v1.35h-1.35zM266.2 379.9h1.35v1.35h-1.35zM180.2 367.9h1.35v1.35h-1.35zM134.3 389.6h1.35v1.35h-1.35zM138.1 388.6h1.35v1.35h-1.35zM478.9 373.8h1.35v1.35h-1.35zM139.3 394.8h1.35v1.35h-1.35zM227.7 381.7h1.35v1.35h-1.35zM221.0 370.8h1.35v1.35h-1.35zM179.8 379.5h1.35v1.35h-1.35zM143.6 416.3h1.35v1.35h-1.35zM230.6 391.6h1.35v1.35h-1.35zM173.8 396.1h1.35v1.35h-1.35zM135.2 418.8h1.35v1.35h-1.35zM609.8 338.8h1.35v1.35h-1.35zM302.0 399.5h1.35v1.35h-1.35zM55.8 437.1h1.35v1.35h-1.35zM96.8 407.4h1.35v1.35h-1.35zM371.1 374.5h1.35v1.35h-1.35zM491.6 370.4h1.35v1.35h-1.35zM208.2 415.5h1.35v1.35h-1.35zM451.8 372.0h1.35v1.35h-1.35zM47.5 393.7h1.35v1.35h-1.35zM290.5 392.2h1.35v1.35h-1.35zM217.8 380.5h1.35v1.35h-1.35zM371.0 365.2h1.35v1.35h-1.35zM453.7 347.7h1.35v1.35h-1.35zM328.1 375.9h1.35v1.35h-1.35zM243.4 411.4h1.35v1.35h-1.35zM465.3 321.6h1.35v1.35h-1.35zM98.9 399.5h1.35v1.35h-1.35zM250.0 348.1h1.35v1.35h-1.35zM453.5 373.2h1.35v1.35h-1.35zM129.5 391.0h1.35v1.35h-1.35zM220.0 406.6h1.35v1.35h-1.35zM266.3 374.3h1.35v1.35h-1.35zM599.4 361.9h1.35v1.35h-1.35zM288.0 408.5h1.35v1.35h-1.35zM393.5 261.9h1.35v1.35h-1.35zM414.0 270.0h1.35v1.35h-1.35z" shape-rendering="auto"/>
<path fill="#58c044" d="M150.7 395.7h1.35v1.35h-1.35zM435.9 332.5h1.35v1.35h-1.35zM318.3 388.9h1.35v1.35h-1.35zM148.3 423.7h1.35v1.35h-1.35zM478.9 339.1h1.35v1.35h-1.35zM159.2 403.7h1.35v1.35h-1.35zM505.2 320.0h1.35v1.35h-1.35zM154.3 381.1h1.35v1.35h-1.35zM309.2 360.9h1.35v1.35h-1.35zM127.3 377.7h1.35v1.35h-1.35zM153.6 359.0h1.35v1.35h-1.35zM448.5 356.9h1.35v1.35h-1.35zM57.1 367.0h1.35v1.35h-1.35zM131.8 375.9h1.35v1.35h-1.35zM88.2 393.3h1.35v1.35h-1.35zM371.8 380.9h1.35v1.35h-1.35zM164.8 387.1h1.35v1.35h-1.35zM465.2 348.6h1.35v1.35h-1.35zM146.9 387.5h1.35v1.35h-1.35zM76.3 432.6h1.35v1.35h-1.35zM244.3 407.3h1.35v1.35h-1.35zM81.4 413.6h1.35v1.35h-1.35zM469.9 360.5h1.35v1.35h-1.35zM94.2 363.2h1.35v1.35h-1.35zM198.4 414.8h1.35v1.35h-1.35zM110.3 377.5h1.35v1.35h-1.35zM66.9 389.1h1.35v1.35h-1.35zM333.8 352.4h1.35v1.35h-1.35zM585.3 316.4h1.35v1.35h-1.35zM83.2 399.0h1.35v1.35h-1.35zM363.3 355.1h1.35v1.35h-1.35zM273.0 383.7h1.35v1.35h-1.35zM403.1 345.1h1.35v1.35h-1.35zM233.5 406.6h1.35v1.35h-1.35zM76.0 371.2h1.35v1.35h-1.35zM61.6 374.4h1.35v1.35h-1.35zM129.6 377.2h1.35v1.35h-1.35zM136.5 382.4h1.35v1.35h-1.35zM443.6 384.0h1.35v1.35h-1.35zM125.7 387.1h1.35v1.35h-1.35zM115.8 388.1h1.35v1.35h-1.35zM469.7 334.4h1.35v1.35h-1.35zM154.1 372.3h1.35v1.35h-1.35zM335.8 338.0h1.35v1.35h-1.35zM145.6 398.5h1.35v1.35h-1.35zM74.3 361.2h1.35v1.35h-1.35zM45.4 416.7h1.35v1.35h-1.35zM341.2 371.3h1.35v1.35h-1.35zM439.0 364.1h1.35v1.35h-1.35zM161.6 350.5h1.35v1.35h-1.35zM254.4 380.8h1.35v1.35h-1.35zM396.0 331.9h1.35v1.35h-1.35zM226.1 369.4h1.35v1.35h-1.35zM278.2 385.7h1.35v1.35h-1.35zM511.1 370.3h1.35v1.35h-1.35zM133.7 349.9h1.35v1.35h-1.35zM287.4 406.8h1.35v1.35h-1.35zM265.3 397.4h1.35v1.35h-1.35zM55.3 386.3h1.35v1.35h-1.35zM55.2 385.6h1.35v1.35h-1.35zM129.6 400.0h1.35v1.35h-1.35zM143.7 369.2h1.35v1.35h-1.35zM380.8 321.8h1.35v1.35h-1.35zM337.4 401.6h1.35v1.35h-1.35zM206.5 367.4h1.35v1.35h-1.35zM149.3 385.3h1.35v1.35h-1.35zM102.6 390.8h1.35v1.35h-1.35zM330.7 380.0h1.35v1.35h-1.35zM244.5 363.4h1.35v1.35h-1.35zM248.4 361.0h1.35v1.35h-1.35zM581.2 303.9h1.35v1.35h-1.35zM298.3 381.2h1.35v1.35h-1.35zM305.0 358.8h1.35v1.35h-1.35zM320.0 359.1h1.35v1.35h-1.35zM63.3 380.9h1.35v1.35h-1.35zM483.6 361.1h1.35v1.35h-1.35zM50.3 395.9h1.35v1.35h-1.35zM230.9 387.7h1.35v1.35h-1.35zM55.7 413.2h1.35v1.35h-1.35zM461.5 319.3h1.35v1.35h-1.35zM311.4 364.3h1.35v1.35h-1.35zM377.6 345.4h1.35v1.35h-1.35zM53.7 412.3h1.35v1.35h-1.35zM258.1 378.4h1.35v1.35h-1.35zM109.3 368.1h1.35v1.35h-1.35zM148.8 363.0h1.35v1.35h-1.35zM400.2 326.2h1.35v1.35h-1.35zM180.9 377.0h1.35v1.35h-1.35zM57.1 390.1h1.35v1.35h-1.35zM74.6 393.6h1.35v1.35h-1.35zM67.5 376.6h1.35v1.35h-1.35zM151.9 378.3h1.35v1.35h-1.35zM118.8 393.3h1.35v1.35h-1.35zM226.9 387.9h1.35v1.35h-1.35zM230.1 375.4h1.35v1.35h-1.35zM277.3 374.5h1.35v1.35h-1.35zM287.6 376.8h1.35v1.35h-1.35zM262.1 399.6h1.35v1.35h-1.35zM422.0 355.3h1.35v1.35h-1.35zM135.1 364.4h1.35v1.35h-1.35zM211.0 377.2h1.35v1.35h-1.35zM89.2 369.9h1.35v1.35h-1.35zM306.1 349.3h1.35v1.35h-1.35zM128.6 395.3h1.35v1.35h-1.35zM258.1 387.1h1.35v1.35h-1.35zM402.0 307.3h1.35v1.35h-1.35zM303.1 392.8h1.35v1.35h-1.35zM246.9 378.3h1.35v1.35h-1.35zM446.6 344.6h1.35v1.35h-1.35zM537.5 313.7h1.35v1.35h-1.35zM223.6 386.7h1.35v1.35h-1.35zM528.1 325.8h1.35v1.35h-1.35zM291.4 352.9h1.35v1.35h-1.35zM275.8 353.8h1.35v1.35h-1.35zM421.2 369.6h1.35v1.35h-1.35zM522.5 341.2h1.35v1.35h-1.35zM469.8 362.1h1.35v1.35h-1.35zM380.6 350.1h1.35v1.35h-1.35zM61.6 418.1h1.35v1.35h-1.35zM167.7 389.3h1.35v1.35h-1.35zM210.4 398.9h1.35v1.35h-1.35zM240.1 356.1h1.35v1.35h-1.35zM374.2 377.2h1.35v1.35h-1.35zM235.6 404.3h1.35v1.35h-1.35zM338.3 356.3h1.35v1.35h-1.35zM217.4 400.2h1.35v1.35h-1.35zM390.2 326.1h1.35v1.35h-1.35zM226.3 376.5h1.35v1.35h-1.35zM243.1 368.5h1.35v1.35h-1.35zM353.3 353.3h1.35v1.35h-1.35zM403.6 341.5h1.35v1.35h-1.35zM275.6 359.5h1.35v1.35h-1.35zM238.1 388.7h1.35v1.35h-1.35zM311.9 366.7h1.35v1.35h-1.35zM211.6 363.4h1.35v1.35h-1.35zM304.0 363.7h1.35v1.35h-1.35zM112.3 412.6h1.35v1.35h-1.35zM343.5 356.3h1.35v1.35h-1.35zM202.8 389.7h1.35v1.35h-1.35zM504.6 354.9h1.35v1.35h-1.35zM321.8 337.2h1.35v1.35h-1.35zM221.8 369.8h1.35v1.35h-1.35zM90.6 386.1h1.35v1.35h-1.35zM570.4 316.3h1.35v1.35h-1.35zM101.0 400.6h1.35v1.35h-1.35zM497.3 363.7h1.35v1.35h-1.35zM82.0 390.0h1.35v1.35h-1.35zM231.0 395.9h1.35v1.35h-1.35zM130.2 391.0h1.35v1.35h-1.35zM362.8 363.6h1.35v1.35h-1.35zM181.2 416.9h1.35v1.35h-1.35zM59.9 413.9h1.35v1.35h-1.35zM304.3 360.6h1.35v1.35h-1.35zM580.9 329.6h1.35v1.35h-1.35zM120.5 373.3h1.35v1.35h-1.35zM637.9 354.2h1.35v1.35h-1.35zM368.7 375.8h1.35v1.35h-1.35zM276.7 351.0h1.35v1.35h-1.35zM101.9 355.1h1.35v1.35h-1.35zM443.4 337.5h1.35v1.35h-1.35zM96.8 378.1h1.35v1.35h-1.35zM629.5 344.5h1.35v1.35h-1.35zM486.6 348.0h1.35v1.35h-1.35zM132.9 379.1h1.35v1.35h-1.35zM59.9 385.2h1.35v1.35h-1.35zM192.0 376.4h1.35v1.35h-1.35zM61.9 368.7h1.35v1.35h-1.35zM321.7 357.6h1.35v1.35h-1.35zM209.2 362.1h1.35v1.35h-1.35zM428.8 357.7h1.35v1.35h-1.35zM292.8 378.7h1.35v1.35h-1.35zM223.0 385.4h1.35v1.35h-1.35zM132.2 363.6h1.35v1.35h-1.35zM184.2 368.9h1.35v1.35h-1.35zM156.3 375.7h1.35v1.35h-1.35zM480.2 297.0h1.35v1.35h-1.35zM346.2 333.4h1.35v1.35h-1.35zM148.5 368.6h1.35v1.35h-1.35zM199.5 365.1h1.35v1.35h-1.35zM181.5 372.3h1.35v1.35h-1.35zM383.9 357.4h1.35v1.35h-1.35zM55.1 373.8h1.35v1.35h-1.35zM572.0 342.4h1.35v1.35h-1.35zM394.2 372.6h1.35v1.35h-1.35zM322.0 352.4h1.35v1.35h-1.35zM170.1 387.6h1.35v1.35h-1.35zM514.2 335.3h1.35v1.35h-1.35zM394.5 390.2h1.35v1.35h-1.35zM172.2 344.8h1.35v1.35h-1.35zM149.6 354.6h1.35v1.35h-1.35zM295.7 354.4h1.35v1.35h-1.35zM102.8 353.1h1.35v1.35h-1.35zM404.2 394.8h1.35v1.35h-1.35zM56.9 380.4h1.35v1.35h-1.35zM505.3 357.3h1.35v1.35h-1.35zM207.4 377.2h1.35v1.35h-1.35zM467.6 359.7h1.35v1.35h-1.35zM79.4 378.4h1.35v1.35h-1.35zM187.5 370.3h1.35v1.35h-1.35zM513.3 370.0h1.35v1.35h-1.35zM181.2 385.6h1.35v1.35h-1.35zM266.5 413.1h1.35v1.35h-1.35zM239.3 370.3h1.35v1.35h-1.35zM478.4 338.3h1.35v1.35h-1.35zM174.5 388.6h1.35v1.35h-1.35zM487.1 327.3h1.35v1.35h-1.35zM428.9 365.2h1.35v1.35h-1.35zM409.7 374.4h1.35v1.35h-1.35zM186.5 350.6h1.35v1.35h-1.35zM202.2 355.7h1.35v1.35h-1.35zM102.1 366.8h1.35v1.35h-1.35zM163.8 396.2h1.35v1.35h-1.35zM108.5 400.5h1.35v1.35h-1.35zM451.4 334.7h1.35v1.35h-1.35zM176.7 382.6h1.35v1.35h-1.35zM403.4 333.1h1.35v1.35h-1.35zM215.5 404.0h1.35v1.35h-1.35zM77.1 405.9h1.35v1.35h-1.35zM558.4 323.8h1.35v1.35h-1.35zM253.2 353.9h1.35v1.35h-1.35zM529.4 378.5h1.35v1.35h-1.35zM136.8 415.9h1.35v1.35h-1.35zM102.6 360.9h1.35v1.35h-1.35zM360.6 365.6h1.35v1.35h-1.35zM396.8 320.3h1.35v1.35h-1.35zM69.4 390.7h1.35v1.35h-1.35zM274.7 368.8h1.35v1.35h-1.35zM209.8 400.2h1.35v1.35h-1.35zM537.9 344.9h1.35v1.35h-1.35zM655.5 294.5h1.35v1.35h-1.35zM144.6 383.8h1.35v1.35h-1.35zM112.7 386.3h1.35v1.35h-1.35zM51.5 379.5h1.35v1.35h-1.35zM442.5 330.8h1.35v1.35h-1.35zM126.1 346.2h1.35v1.35h-1.35zM462.6 308.6h1.35v1.35h-1.35zM625.1 365.8h1.35v1.35h-1.35zM125.0 395.2h1.35v1.35h-1.35zM263.2 403.0h1.35v1.35h-1.35zM65.4 395.7h1.35v1.35h-1.35zM248.4 348.0h1.35v1.35h-1.35zM400.9 365.0h1.35v1.35h-1.35zM85.3 366.9h1.35v1.35h-1.35zM68.2 431.9h1.35v1.35h-1.35zM51.7 353.6h1.35v1.35h-1.35zM135.9 362.3h1.35v1.35h-1.35zM81.9 407.4h1.35v1.35h-1.35zM113.9 372.1h1.35v1.35h-1.35zM424.1 339.0h1.35v1.35h-1.35zM121.1 395.6h1.35v1.35h-1.35zM413.1 364.0h1.35v1.35h-1.35zM540.7 332.8h1.35v1.35h-1.35zM212.8 346.7h1.35v1.35h-1.35zM222.4 346.5h1.35v1.35h-1.35zM129.1 386.2h1.35v1.35h-1.35zM194.5 397.0h1.35v1.35h-1.35zM274.5 374.1h1.35v1.35h-1.35zM243.4 402.2h1.35v1.35h-1.35zM117.6 367.6h1.35v1.35h-1.35zM210.7 369.3h1.35v1.35h-1.35zM295.6 381.1h1.35v1.35h-1.35zM295.8 381.4h1.35v1.35h-1.35zM593.6 346.5h1.35v1.35h-1.35zM302.2 380.4h1.35v1.35h-1.35zM234.5 347.6h1.35v1.35h-1.35zM110.4 378.9h1.35v1.35h-1.35zM217.5 400.8h1.35v1.35h-1.35zM81.9 407.3h1.35v1.35h-1.35zM460.7 346.0h1.35v1.35h-1.35zM260.2 359.4h1.35v1.35h-1.35zM51.1 382.0h1.35v1.35h-1.35zM349.5 359.5h1.35v1.35h-1.35zM146.9 366.1h1.35v1.35h-1.35zM317.8 355.0h1.35v1.35h-1.35zM295.5 390.4h1.35v1.35h-1.35zM352.6 348.4h1.35v1.35h-1.35zM316.4 364.6h1.35v1.35h-1.35zM524.0 335.9h1.35v1.35h-1.35zM157.6 378.4h1.35v1.35h-1.35zM51.7 364.3h1.35v1.35h-1.35zM47.4 339.7h1.35v1.35h-1.35zM228.6 356.0h1.35v1.35h-1.35zM117.8 359.2h1.35v1.35h-1.35zM221.1 366.8h1.35v1.35h-1.35zM603.6 351.1h1.35v1.35h-1.35zM70.4 376.7h1.35v1.35h-1.35zM628.3 338.6h1.35v1.35h-1.35zM323.1 405.0h1.35v1.35h-1.35zM154.3 386.5h1.35v1.35h-1.35zM78.8 415.0h1.35v1.35h-1.35zM570.6 348.5h1.35v1.35h-1.35zM137.6 412.6h1.35v1.35h-1.35zM181.7 365.7h1.35v1.35h-1.35zM356.8 379.9h1.35v1.35h-1.35zM285.6 342.1h1.35v1.35h-1.35zM560.9 325.8h1.35v1.35h-1.35zM126.6 406.4h1.35v1.35h-1.35zM310.9 361.6h1.35v1.35h-1.35zM112.9 369.1h1.35v1.35h-1.35zM154.4 389.7h1.35v1.35h-1.35zM436.5 343.7h1.35v1.35h-1.35zM513.9 362.6h1.35v1.35h-1.35zM320.2 362.5h1.35v1.35h-1.35zM215.5 362.4h1.35v1.35h-1.35zM258.0 361.0h1.35v1.35h-1.35zM289.1 351.1h1.35v1.35h-1.35zM171.5 384.9h1.35v1.35h-1.35zM182.9 402.1h1.35v1.35h-1.35zM615.2 323.7h1.35v1.35h-1.35zM235.5 364.4h1.35v1.35h-1.35zM192.0 371.9h1.35v1.35h-1.35zM184.8 356.2h1.35v1.35h-1.35zM405.2 377.7h1.35v1.35h-1.35zM303.5 375.7h1.35v1.35h-1.35zM541.7 359.7h1.35v1.35h-1.35zM302.4 356.2h1.35v1.35h-1.35zM532.5 355.2h1.35v1.35h-1.35zM304.1 354.9h1.35v1.35h-1.35zM203.9 364.9h1.35v1.35h-1.35zM386.8 332.0h1.35v1.35h-1.35zM491.2 329.3h1.35v1.35h-1.35zM54.9 400.5h1.35v1.35h-1.35zM45.9 414.2h1.35v1.35h-1.35zM258.3 377.0h1.35v1.35h-1.35zM523.8 342.4h1.35v1.35h-1.35zM480.7 347.9h1.35v1.35h-1.35zM405.6 368.8h1.35v1.35h-1.35zM176.3 368.1h1.35v1.35h-1.35zM320.3 372.1h1.35v1.35h-1.35zM119.9 416.4h1.35v1.35h-1.35zM464.2 306.5h1.35v1.35h-1.35zM288.3 364.6h1.35v1.35h-1.35zM209.9 344.4h1.35v1.35h-1.35zM445.4 306.1h1.35v1.35h-1.35zM63.7 392.2h1.35v1.35h-1.35zM515.9 331.8h1.35v1.35h-1.35zM194.8 386.0h1.35v1.35h-1.35zM453.3 345.4h1.35v1.35h-1.35zM116.6 414.4h1.35v1.35h-1.35zM236.0 401.3h1.35v1.35h-1.35zM614.6 346.9h1.35v1.35h-1.35zM315.1 389.2h1.35v1.35h-1.35zM258.9 404.2h1.35v1.35h-1.35zM111.2 359.2h1.35v1.35h-1.35zM393.6 376.2h1.35v1.35h-1.35zM182.9 357.1h1.35v1.35h-1.35zM151.9 352.3h1.35v1.35h-1.35zM132.2 378.6h1.35v1.35h-1.35zM93.9 406.4h1.35v1.35h-1.35zM262.7 358.7h1.35v1.35h-1.35zM391.5 360.5h1.35v1.35h-1.35zM107.9 374.2h1.35v1.35h-1.35zM264.5 371.5h1.35v1.35h-1.35zM247.9 384.6h1.35v1.35h-1.35zM97.7 427.2h1.35v1.35h-1.35zM648.9 353.7h1.35v1.35h-1.35zM90.1 365.7h1.35v1.35h-1.35zM105.4 381.6h1.35v1.35h-1.35zM236.4 381.4h1.35v1.35h-1.35zM511.2 339.9h1.35v1.35h-1.35zM67.5 414.1h1.35v1.35h-1.35zM324.6 373.2h1.35v1.35h-1.35zM239.5 353.2h1.35v1.35h-1.35zM76.6 376.8h1.35v1.35h-1.35zM59.8 402.1h1.35v1.35h-1.35zM125.2 383.2h1.35v1.35h-1.35zM48.5 406.6h1.35v1.35h-1.35zM350.2 370.7h1.35v1.35h-1.35zM154.3 390.9h1.35v1.35h-1.35zM609.6 312.6h1.35v1.35h-1.35zM105.6 394.4h1.35v1.35h-1.35zM87.8 379.3h1.35v1.35h-1.35zM73.6 412.6h1.35v1.35h-1.35zM260.0 388.0h1.35v1.35h-1.35zM73.4 419.0h1.35v1.35h-1.35zM514.2 349.7h1.35v1.35h-1.35zM115.8 393.7h1.35v1.35h-1.35zM204.2 371.5h1.35v1.35h-1.35zM218.6 347.3h1.35v1.35h-1.35zM184.9 398.2h1.35v1.35h-1.35zM107.0 417.2h1.35v1.35h-1.35zM443.3 342.6h1.35v1.35h-1.35zM352.9 365.3h1.35v1.35h-1.35zM323.1 398.3h1.35v1.35h-1.35zM202.1 313.6h1.35v1.35h-1.35zM308.6 359.4h1.35v1.35h-1.35zM390.5 369.3h1.35v1.35h-1.35zM148.2 392.1h1.35v1.35h-1.35zM103.3 402.3h1.35v1.35h-1.35zM313.8 382.0h1.35v1.35h-1.35zM85.6 375.2h1.35v1.35h-1.35zM247.3 384.1h1.35v1.35h-1.35zM80.6 371.3h1.35v1.35h-1.35zM356.5 358.7h1.35v1.35h-1.35zM257.2 378.8h1.35v1.35h-1.35zM82.1 408.6h1.35v1.35h-1.35zM181.1 387.7h1.35v1.35h-1.35zM190.2 382.1h1.35v1.35h-1.35zM377.2 337.4h1.35v1.35h-1.35zM256.0 380.0h1.35v1.35h-1.35zM303.9 394.0h1.35v1.35h-1.35zM471.8 363.2h1.35v1.35h-1.35zM58.3 399.2h1.35v1.35h-1.35zM499.7 341.4h1.35v1.35h-1.35zM86.7 400.2h1.35v1.35h-1.35zM178.8 377.7h1.35v1.35h-1.35zM201.3 336.1h1.35v1.35h-1.35zM46.8 365.9h1.35v1.35h-1.35zM183.9 388.9h1.35v1.35h-1.35zM97.2 358.7h1.35v1.35h-1.35zM293.6 372.9h1.35v1.35h-1.35zM141.1 384.8h1.35v1.35h-1.35zM397.4 364.5h1.35v1.35h-1.35zM117.4 375.9h1.35v1.35h-1.35zM453.6 353.3h1.35v1.35h-1.35zM345.9 377.0h1.35v1.35h-1.35zM176.3 410.3h1.35v1.35h-1.35zM153.9 421.1h1.35v1.35h-1.35zM206.2 379.8h1.35v1.35h-1.35zM129.8 423.1h1.35v1.35h-1.35zM95.7 392.3h1.35v1.35h-1.35zM106.9 392.7h1.35v1.35h-1.35zM180.0 369.8h1.35v1.35h-1.35zM235.9 360.8h1.35v1.35h-1.35zM71.9 408.1h1.35v1.35h-1.35zM173.1 371.4h1.35v1.35h-1.35zM103.8 386.6h1.35v1.35h-1.35zM248.5 379.2h1.35v1.35h-1.35zM89.1 403.7h1.35v1.35h-1.35zM466.2 331.7h1.35v1.35h-1.35zM83.4 376.8h1.35v1.35h-1.35zM468.4 367.0h1.35v1.35h-1.35zM564.4 374.2h1.35v1.35h-1.35zM290.0 377.0h1.35v1.35h-1.35zM126.8 387.7h1.35v1.35h-1.35zM465.4 357.9h1.35v1.35h-1.35zM139.7 323.5h1.35v1.35h-1.35zM433.4 359.2h1.35v1.35h-1.35zM130.4 368.7h1.35v1.35h-1.35zM430.1 334.4h1.35v1.35h-1.35zM180.7 409.9h1.35v1.35h-1.35zM397.9 357.3h1.35v1.35h-1.35zM643.2 322.0h1.35v1.35h-1.35zM274.7 363.5h1.35v1.35h-1.35zM477.8 324.1h1.35v1.35h-1.35zM111.5 408.1h1.35v1.35h-1.35zM355.3 341.0h1.35v1.35h-1.35zM260.1 385.7h1.35v1.35h-1.35zM281.6 380.7h1.35v1.35h-1.35zM83.8 393.5h1.35v1.35h-1.35zM274.4 359.0h1.35v1.35h-1.35zM598.5 350.6h1.35v1.35h-1.35zM332.1 360.8h1.35v1.35h-1.35zM183.1 392.0h1.35v1.35h-1.35zM105.5 411.5h1.35v1.35h-1.35zM358.6 353.3h1.35v1.35h-1.35zM144.8 371.9h1.35v1.35h-1.35zM103.3 365.8h1.35v1.35h-1.35zM241.3 339.8h1.35v1.35h-1.35zM129.9 413.6h1.35v1.35h-1.35zM262.4 378.5h1.35v1.35h-1.35zM174.2 381.9h1.35v1.35h-1.35zM248.2 379.1h1.35v1.35h-1.35zM286.5 355.5h1.35v1.35h-1.35zM248.0 402.6h1.35v1.35h-1.35zM585.1 355.8h1.35v1.35h-1.35zM59.3 348.2h1.35v1.35h-1.35zM118.8 359.9h1.35v1.35h-1.35zM444.8 342.7h1.35v1.35h-1.35zM290.8 361.1h1.35v1.35h-1.35zM290.5 390.5h1.35v1.35h-1.35zM216.3 388.1h1.35v1.35h-1.35zM472.9 340.0h1.35v1.35h-1.35zM92.6 389.4h1.35v1.35h-1.35zM286.4 360.9h1.35v1.35h-1.35zM142.4 402.3h1.35v1.35h-1.35zM338.9 340.0h1.35v1.35h-1.35zM139.9 381.1h1.35v1.35h-1.35zM406.4 375.5h1.35v1.35h-1.35zM334.3 350.2h1.35v1.35h-1.35zM67.6 389.1h1.35v1.35h-1.35zM424.9 348.7h1.35v1.35h-1.35zM45.0 414.0h1.35v1.35h-1.35zM488.0 341.3h1.35v1.35h-1.35zM58.7 393.3h1.35v1.35h-1.35zM78.7 379.4h1.35v1.35h-1.35zM183.7 356.9h1.35v1.35h-1.35zM583.7 337.6h1.35v1.35h-1.35zM559.6 345.5h1.35v1.35h-1.35zM447.6 350.7h1.35v1.35h-1.35zM142.8 368.7h1.35v1.35h-1.35zM154.9 395.0h1.35v1.35h-1.35zM465.0 362.0h1.35v1.35h-1.35zM77.3 408.4h1.35v1.35h-1.35zM186.4 384.4h1.35v1.35h-1.35zM262.2 385.8h1.35v1.35h-1.35zM80.5 407.7h1.35v1.35h-1.35zM62.6 387.9h1.35v1.35h-1.35zM224.5 393.1h1.35v1.35h-1.35zM287.9 373.5h1.35v1.35h-1.35zM320.0 384.3h1.35v1.35h-1.35zM240.2 348.6h1.35v1.35h-1.35zM93.2 396.3h1.35v1.35h-1.35zM178.5 368.2h1.35v1.35h-1.35zM198.0 395.2h1.35v1.35h-1.35zM440.4 341.7h1.35v1.35h-1.35zM339.3 378.7h1.35v1.35h-1.35zM126.0 407.2h1.35v1.35h-1.35zM53.1 426.2h1.35v1.35h-1.35zM493.1 347.6h1.35v1.35h-1.35zM591.7 366.2h1.35v1.35h-1.35zM200.4 370.1h1.35v1.35h-1.35zM471.9 328.7h1.35v1.35h-1.35zM102.1 392.4h1.35v1.35h-1.35zM337.9 404.9h1.35v1.35h-1.35zM73.6 364.2h1.35v1.35h-1.35zM102.5 379.6h1.35v1.35h-1.35zM184.3 366.9h1.35v1.35h-1.35zM389.6 342.5h1.35v1.35h-1.35zM124.1 378.7h1.35v1.35h-1.35zM249.3 362.7h1.35v1.35h-1.35zM510.0 360.7h1.35v1.35h-1.35zM321.7 401.2h1.35v1.35h-1.35zM271.7 373.8h1.35v1.35h-1.35zM472.0 357.7h1.35v1.35h-1.35zM432.2 363.6h1.35v1.35h-1.35zM107.0 410.3h1.35v1.35h-1.35zM197.6 366.9h1.35v1.35h-1.35zM155.2 353.4h1.35v1.35h-1.35zM143.7 371.0h1.35v1.35h-1.35zM214.0 380.0h1.35v1.35h-1.35zM443.1 360.7h1.35v1.35h-1.35zM248.8 396.4h1.35v1.35h-1.35zM85.9 374.5h1.35v1.35h-1.35zM429.7 357.9h1.35v1.35h-1.35zM249.0 359.1h1.35v1.35h-1.35zM361.7 345.2h1.35v1.35h-1.35zM302.5 356.7h1.35v1.35h-1.35zM430.4 339.8h1.35v1.35h-1.35zM171.5 349.6h1.35v1.35h-1.35zM329.0 334.8h1.35v1.35h-1.35zM284.6 378.9h1.35v1.35h-1.35zM221.6 361.0h1.35v1.35h-1.35zM91.8 402.1h1.35v1.35h-1.35zM131.8 417.2h1.35v1.35h-1.35zM317.8 389.8h1.35v1.35h-1.35zM346.5 352.2h1.35v1.35h-1.35zM264.2 387.4h1.35v1.35h-1.35zM206.9 363.0h1.35v1.35h-1.35zM350.9 360.3h1.35v1.35h-1.35zM131.0 390.7h1.35v1.35h-1.35zM49.5 386.1h1.35v1.35h-1.35zM72.9 369.3h1.35v1.35h-1.35zM81.5 381.6h1.35v1.35h-1.35zM563.5 327.1h1.35v1.35h-1.35zM244.0 412.3h1.35v1.35h-1.35zM298.1 387.2h1.35v1.35h-1.35zM271.5 384.1h1.35v1.35h-1.35zM543.8 330.0h1.35v1.35h-1.35zM121.4 341.4h1.35v1.35h-1.35zM158.5 359.8h1.35v1.35h-1.35zM421.0 308.4h1.35v1.35h-1.35zM244.1 366.1h1.35v1.35h-1.35zM194.6 356.6h1.35v1.35h-1.35zM137.2 370.3h1.35v1.35h-1.35zM299.1 379.2h1.35v1.35h-1.35zM54.6 357.5h1.35v1.35h-1.35zM94.3 377.2h1.35v1.35h-1.35zM410.4 387.1h1.35v1.35h-1.35zM116.6 411.2h1.35v1.35h-1.35zM200.4 395.8h1.35v1.35h-1.35zM241.4 340.1h1.35v1.35h-1.35zM66.5 396.5h1.35v1.35h-1.35zM510.2 360.7h1.35v1.35h-1.35zM93.9 388.4h1.35v1.35h-1.35zM167.1 373.5h1.35v1.35h-1.35zM134.0 374.5h1.35v1.35h-1.35zM174.6 358.8h1.35v1.35h-1.35zM161.5 355.2h1.35v1.35h-1.35zM95.6 377.9h1.35v1.35h-1.35zM194.2 379.2h1.35v1.35h-1.35zM85.0 407.0h1.35v1.35h-1.35zM391.8 329.9h1.35v1.35h-1.35zM507.6 355.3h1.35v1.35h-1.35zM285.4 373.9h1.35v1.35h-1.35zM556.3 342.4h1.35v1.35h-1.35zM103.4 412.1h1.35v1.35h-1.35zM335.2 382.3h1.35v1.35h-1.35zM114.9 399.2h1.35v1.35h-1.35zM232.9 364.6h1.35v1.35h-1.35zM497.5 373.5h1.35v1.35h-1.35zM546.7 353.5h1.35v1.35h-1.35zM456.7 354.4h1.35v1.35h-1.35zM104.1 384.0h1.35v1.35h-1.35zM234.1 374.3h1.35v1.35h-1.35zM421.9 355.2h1.35v1.35h-1.35zM55.7 375.9h1.35v1.35h-1.35zM310.5 339.4h1.35v1.35h-1.35zM334.0 340.5h1.35v1.35h-1.35zM440.2 356.8h1.35v1.35h-1.35zM112.2 413.6h1.35v1.35h-1.35zM325.7 375.7h1.35v1.35h-1.35zM354.8 345.9h1.35v1.35h-1.35zM603.9 318.6h1.35v1.35h-1.35zM90.8 386.0h1.35v1.35h-1.35zM289.5 378.7h1.35v1.35h-1.35zM442.2 318.3h1.35v1.35h-1.35zM66.7 409.5h1.35v1.35h-1.35zM55.0 370.8h1.35v1.35h-1.35zM414.7 362.4h1.35v1.35h-1.35zM52.2 418.3h1.35v1.35h-1.35zM234.6 351.6h1.35v1.35h-1.35zM357.0 372.6h1.35v1.35h-1.35zM331.1 366.3h1.35v1.35h-1.35zM352.9 388.7h1.35v1.35h-1.35zM197.0 362.0h1.35v1.35h-1.35zM544.8 324.1h1.35v1.35h-1.35zM399.2 364.1h1.35v1.35h-1.35zM333.6 377.9h1.35v1.35h-1.35zM338.6 375.7h1.35v1.35h-1.35zM173.7 414.5h1.35v1.35h-1.35zM119.5 383.0h1.35v1.35h-1.35zM102.0 389.5h1.35v1.35h-1.35zM158.1 365.8h1.35v1.35h-1.35zM243.7 372.0h1.35v1.35h-1.35zM311.8 365.4h1.35v1.35h-1.35zM587.8 337.9h1.35v1.35h-1.35zM194.9 399.5h1.35v1.35h-1.35zM186.7 359.7h1.35v1.35h-1.35zM350.3 341.8h1.35v1.35h-1.35zM152.0 367.7h1.35v1.35h-1.35zM67.9 379.4h1.35v1.35h-1.35zM56.7 371.3h1.35v1.35h-1.35zM67.0 336.7h1.35v1.35h-1.35zM372.8 377.6h1.35v1.35h-1.35zM622.8 333.3h1.35v1.35h-1.35zM267.1 385.7h1.35v1.35h-1.35zM223.0 361.0h1.35v1.35h-1.35zM93.7 384.3h1.35v1.35h-1.35zM557.6 362.1h1.35v1.35h-1.35zM481.0 313.5h1.35v1.35h-1.35zM62.6 404.3h1.35v1.35h-1.35zM183.0 389.3h1.35v1.35h-1.35zM254.6 376.1h1.35v1.35h-1.35zM110.5 390.5h1.35v1.35h-1.35zM106.3 405.9h1.35v1.35h-1.35zM250.4 340.3h1.35v1.35h-1.35zM566.7 364.3h1.35v1.35h-1.35zM115.5 422.1h1.35v1.35h-1.35zM226.5 386.4h1.35v1.35h-1.35zM520.3 354.2h1.35v1.35h-1.35zM297.1 379.2h1.35v1.35h-1.35zM79.8 408.4h1.35v1.35h-1.35zM266.2 363.6h1.35v1.35h-1.35zM513.0 349.5h1.35v1.35h-1.35zM211.0 396.5h1.35v1.35h-1.35zM575.0 320.2h1.35v1.35h-1.35zM251.0 341.7h1.35v1.35h-1.35zM193.9 412.0h1.35v1.35h-1.35zM651.9 332.8h1.35v1.35h-1.35zM81.5 379.7h1.35v1.35h-1.35zM260.7 378.9h1.35v1.35h-1.35zM81.2 415.0h1.35v1.35h-1.35zM162.3 360.5h1.35v1.35h-1.35zM341.1 396.6h1.35v1.35h-1.35zM292.7 388.4h1.35v1.35h-1.35zM123.2 349.2h1.35v1.35h-1.35zM296.9 374.7h1.35v1.35h-1.35zM118.4 399.7h1.35v1.35h-1.35zM236.4 370.0h1.35v1.35h-1.35zM158.2 353.1h1.35v1.35h-1.35zM179.4 392.0h1.35v1.35h-1.35zM348.6 354.4h1.35v1.35h-1.35zM504.4 305.4h1.35v1.35h-1.35zM140.1 409.2h1.35v1.35h-1.35zM169.0 400.9h1.35v1.35h-1.35zM74.8 433.1h1.35v1.35h-1.35zM377.3 382.5h1.35v1.35h-1.35zM130.0 363.4h1.35v1.35h-1.35zM369.4 332.1h1.35v1.35h-1.35zM290.0 388.2h1.35v1.35h-1.35zM55.4 371.1h1.35v1.35h-1.35zM553.3 333.6h1.35v1.35h-1.35zM184.0 410.7h1.35v1.35h-1.35zM565.4 323.5h1.35v1.35h-1.35zM402.2 370.0h1.35v1.35h-1.35zM488.0 344.3h1.35v1.35h-1.35zM330.0 381.8h1.35v1.35h-1.35zM391.2 392.1h1.35v1.35h-1.35zM371.1 313.6h1.35v1.35h-1.35zM240.5 366.2h1.35v1.35h-1.35zM102.7 410.9h1.35v1.35h-1.35zM136.3 413.0h1.35v1.35h-1.35zM359.6 358.1h1.35v1.35h-1.35zM291.8 367.9h1.35v1.35h-1.35zM415.1 349.0h1.35v1.35h-1.35zM461.8 361.6h1.35v1.35h-1.35zM165.1 401.0h1.35v1.35h-1.35zM314.5 380.3h1.35v1.35h-1.35zM360.5 363.9h1.35v1.35h-1.35zM252.7 324.5h1.35v1.35h-1.35zM197.2 376.0h1.35v1.35h-1.35zM266.4 369.9h1.35v1.35h-1.35zM142.9 393.8h1.35v1.35h-1.35zM227.6 367.1h1.35v1.35h-1.35zM75.2 398.1h1.35v1.35h-1.35zM77.6 378.1h1.35v1.35h-1.35zM346.5 378.9h1.35v1.35h-1.35zM205.6 404.1h1.35v1.35h-1.35zM436.1 362.1h1.35v1.35h-1.35zM206.9 371.0h1.35v1.35h-1.35zM218.7 370.4h1.35v1.35h-1.35zM256.9 364.8h1.35v1.35h-1.35zM234.0 374.4h1.35v1.35h-1.35zM461.5 325.3h1.35v1.35h-1.35zM270.6 401.9h1.35v1.35h-1.35zM67.4 402.2h1.35v1.35h-1.35zM450.9 348.2h1.35v1.35h-1.35zM297.1 378.1h1.35v1.35h-1.35zM563.0 349.7h1.35v1.35h-1.35zM591.0 325.2h1.35v1.35h-1.35zM107.7 411.7h1.35v1.35h-1.35zM334.4 339.3h1.35v1.35h-1.35zM57.5 379.1h1.35v1.35h-1.35zM90.3 409.2h1.35v1.35h-1.35zM231.2 395.3h1.35v1.35h-1.35zM312.1 345.2h1.35v1.35h-1.35zM267.0 322.9h1.35v1.35h-1.35zM136.5 368.6h1.35v1.35h-1.35zM70.5 378.9h1.35v1.35h-1.35zM397.1 373.7h1.35v1.35h-1.35zM161.2 338.0h1.35v1.35h-1.35zM310.2 339.8h1.35v1.35h-1.35zM437.5 370.7h1.35v1.35h-1.35zM132.5 357.6h1.35v1.35h-1.35zM204.7 368.8h1.35v1.35h-1.35zM529.3 351.3h1.35v1.35h-1.35zM264.3 362.8h1.35v1.35h-1.35zM49.6 398.8h1.35v1.35h-1.35zM255.6 330.4h1.35v1.35h-1.35zM213.4 416.3h1.35v1.35h-1.35zM426.5 310.5h1.35v1.35h-1.35zM573.4 346.8h1.35v1.35h-1.35zM140.2 373.0h1.35v1.35h-1.35zM211.7 365.6h1.35v1.35h-1.35zM282.1 366.5h1.35v1.35h-1.35zM321.2 375.0h1.35v1.35h-1.35zM59.1 378.4h1.35v1.35h-1.35zM84.1 354.3h1.35v1.35h-1.35zM601.6 325.7h1.35v1.35h-1.35zM448.2 350.2h1.35v1.35h-1.35zM172.3 392.7h1.35v1.35h-1.35zM199.9 370.5h1.35v1.35h-1.35zM167.1 388.3h1.35v1.35h-1.35zM93.1 369.7h1.35v1.35h-1.35zM316.2 370.0h1.35v1.35h-1.35zM169.3 369.4h1.35v1.35h-1.35zM562.3 311.8h1.35v1.35h-1.35zM55.3 384.0h1.35v1.35h-1.35zM238.2 375.7h1.35v1.35h-1.35zM165.7 370.0h1.35v1.35h-1.35zM270.8 341.5h1.35v1.35h-1.35zM188.2 360.9h1.35v1.35h-1.35zM64.1 391.1h1.35v1.35h-1.35zM531.1 367.7h1.35v1.35h-1.35zM490.0 372.4h1.35v1.35h-1.35zM235.3 369.8h1.35v1.35h-1.35zM281.8 391.7h1.35v1.35h-1.35zM351.8 367.2h1.35v1.35h-1.35zM180.9 369.5h1.35v1.35h-1.35zM236.2 392.9h1.35v1.35h-1.35zM46.8 408.1h1.35v1.35h-1.35zM329.3 360.8h1.35v1.35h-1.35zM64.8 420.0h1.35v1.35h-1.35zM505.0 344.9h1.35v1.35h-1.35zM230.9 361.4h1.35v1.35h-1.35zM267.0 388.8h1.35v1.35h-1.35zM281.7 367.7h1.35v1.35h-1.35zM357.9 364.3h1.35v1.35h-1.35zM73.7 404.1h1.35v1.35h-1.35zM190.1 376.6h1.35v1.35h-1.35zM213.2 418.5h1.35v1.35h-1.35zM102.8 387.2h1.35v1.35h-1.35zM116.5 418.8h1.35v1.35h-1.35zM338.1 331.6h1.35v1.35h-1.35zM604.6 323.8h1.35v1.35h-1.35zM237.9 366.7h1.35v1.35h-1.35zM70.5 408.1h1.35v1.35h-1.35zM53.9 333.4h1.35v1.35h-1.35zM182.1 395.6h1.35v1.35h-1.35zM110.4 377.9h1.35v1.35h-1.35zM277.2 358.7h1.35v1.35h-1.35zM260.6 370.0h1.35v1.35h-1.35zM170.5 397.7h1.35v1.35h-1.35zM146.2 353.5h1.35v1.35h-1.35zM132.2 388.1h1.35v1.35h-1.35zM337.1 375.4h1.35v1.35h-1.35zM349.1 352.7h1.35v1.35h-1.35zM227.4 361.9h1.35v1.35h-1.35zM200.6 343.5h1.35v1.35h-1.35zM82.3 420.5h1.35v1.35h-1.35zM168.4 376.7h1.35v1.35h-1.35zM61.9 365.3h1.35v1.35h-1.35zM435.6 381.4h1.35v1.35h-1.35zM269.8 356.3h1.35v1.35h-1.35zM334.4 365.3h1.35v1.35h-1.35zM170.0 362.1h1.35v1.35h-1.35zM481.4 356.9h1.35v1.35h-1.35zM91.6 391.5h1.35v1.35h-1.35zM133.6 421.7h1.35v1.35h-1.35zM204.5 381.6h1.35v1.35h-1.35zM617.0 344.7h1.35v1.35h-1.35zM379.5 368.5h1.35v1.35h-1.35zM266.2 371.5h1.35v1.35h-1.35zM214.9 391.4h1.35v1.35h-1.35zM144.4 370.4h1.35v1.35h-1.35zM113.3 343.3h1.35v1.35h-1.35zM346.3 360.1h1.35v1.35h-1.35zM165.0 374.6h1.35v1.35h-1.35zM214.8 358.1h1.35v1.35h-1.35zM49.2 373.3h1.35v1.35h-1.35zM115.7 377.7h1.35v1.35h-1.35zM330.9 360.9h1.35v1.35h-1.35zM107.1 410.2h1.35v1.35h-1.35zM164.7 383.9h1.35v1.35h-1.35zM98.9 393.6h1.35v1.35h-1.35zM268.8 352.3h1.35v1.35h-1.35zM584.1 308.1h1.35v1.35h-1.35zM320.6 340.8h1.35v1.35h-1.35zM343.2 387.3h1.35v1.35h-1.35zM169.0 369.9h1.35v1.35h-1.35zM435.2 375.1h1.35v1.35h-1.35zM380.8 384.9h1.35v1.35h-1.35zM433.9 339.5h1.35v1.35h-1.35zM566.9 329.3h1.35v1.35h-1.35zM199.6 405.2h1.35v1.35h-1.35zM357.3 346.1h1.35v1.35h-1.35zM135.3 392.6h1.35v1.35h-1.35zM358.6 340.0h1.35v1.35h-1.35zM121.5 409.1h1.35v1.35h-1.35zM229.5 338.3h1.35v1.35h-1.35zM104.7 372.9h1.35v1.35h-1.35zM224.6 366.4h1.35v1.35h-1.35zM645.9 334.5h1.35v1.35h-1.35zM485.0 367.4h1.35v1.35h-1.35zM104.6 406.4h1.35v1.35h-1.35zM103.4 365.0h1.35v1.35h-1.35zM162.1 356.1h1.35v1.35h-1.35zM193.2 398.4h1.35v1.35h-1.35zM142.1 411.5h1.35v1.35h-1.35zM239.1 347.8h1.35v1.35h-1.35zM638.4 366.6h1.35v1.35h-1.35zM45.6 356.6h1.35v1.35h-1.35zM190.2 402.6h1.35v1.35h-1.35zM609.8 354.7h1.35v1.35h-1.35zM78.2 369.9h1.35v1.35h-1.35zM253.5 398.0h1.35v1.35h-1.35zM83.8 397.4h1.35v1.35h-1.35zM183.9 391.9h1.35v1.35h-1.35zM404.8 344.2h1.35v1.35h-1.35zM324.4 353.5h1.35v1.35h-1.35zM191.9 389.1h1.35v1.35h-1.35zM71.6 415.2h1.35v1.35h-1.35zM128.1 396.1h1.35v1.35h-1.35zM379.6 378.0h1.35v1.35h-1.35zM66.3 384.8h1.35v1.35h-1.35zM235.8 367.9h1.35v1.35h-1.35zM274.8 389.3h1.35v1.35h-1.35zM640.8 352.7h1.35v1.35h-1.35zM113.5 365.0h1.35v1.35h-1.35zM164.8 366.2h1.35v1.35h-1.35zM374.3 367.8h1.35v1.35h-1.35zM155.4 367.2h1.35v1.35h-1.35zM111.9 337.8h1.35v1.35h-1.35zM531.8 353.8h1.35v1.35h-1.35zM416.3 353.6h1.35v1.35h-1.35zM245.8 353.0h1.35v1.35h-1.35zM98.5 405.9h1.35v1.35h-1.35zM259.7 393.1h1.35v1.35h-1.35zM341.8 363.7h1.35v1.35h-1.35zM152.9 376.9h1.35v1.35h-1.35zM580.3 373.3h1.35v1.35h-1.35zM193.1 387.8h1.35v1.35h-1.35zM162.2 363.3h1.35v1.35h-1.35zM88.9 378.5h1.35v1.35h-1.35zM370.4 349.7h1.35v1.35h-1.35zM153.9 364.8h1.35v1.35h-1.35zM394.4 363.3h1.35v1.35h-1.35zM434.5 361.6h1.35v1.35h-1.35zM376.4 351.6h1.35v1.35h-1.35zM336.1 398.8h1.35v1.35h-1.35zM510.5 343.3h1.35v1.35h-1.35zM174.7 377.8h1.35v1.35h-1.35zM273.5 346.8h1.35v1.35h-1.35zM122.8 387.6h1.35v1.35h-1.35zM436.6 340.8h1.35v1.35h-1.35zM78.9 410.0h1.35v1.35h-1.35zM180.4 391.9h1.35v1.35h-1.35zM169.6 370.5h1.35v1.35h-1.35zM150.8 398.8h1.35v1.35h-1.35zM437.6 368.3h1.35v1.35h-1.35zM324.5 370.3h1.35v1.35h-1.35zM314.8 376.3h1.35v1.35h-1.35zM192.5 391.9h1.35v1.35h-1.35zM325.4 342.6h1.35v1.35h-1.35zM484.7 336.6h1.35v1.35h-1.35zM368.0 342.6h1.35v1.35h-1.35zM181.1 347.7h1.35v1.35h-1.35zM473.3 322.4h1.35v1.35h-1.35zM116.4 420.0h1.35v1.35h-1.35zM360.2 335.7h1.35v1.35h-1.35zM97.5 392.2h1.35v1.35h-1.35zM72.1 353.8h1.35v1.35h-1.35zM267.6 334.2h1.35v1.35h-1.35zM442.2 332.3h1.35v1.35h-1.35zM193.7 408.4h1.35v1.35h-1.35zM321.1 375.0h1.35v1.35h-1.35zM270.1 360.6h1.35v1.35h-1.35zM259.9 367.1h1.35v1.35h-1.35zM60.7 431.7h1.35v1.35h-1.35zM149.7 383.0h1.35v1.35h-1.35zM247.2 363.4h1.35v1.35h-1.35zM101.8 383.2h1.35v1.35h-1.35zM136.1 375.6h1.35v1.35h-1.35zM72.0 404.0h1.35v1.35h-1.35zM224.3 408.0h1.35v1.35h-1.35zM340.7 370.8h1.35v1.35h-1.35zM546.6 370.0h1.35v1.35h-1.35zM227.7 398.0h1.35v1.35h-1.35zM274.2 391.0h1.35v1.35h-1.35zM330.0 389.9h1.35v1.35h-1.35zM71.8 367.5h1.35v1.35h-1.35zM104.2 390.4h1.35v1.35h-1.35zM93.5 390.6h1.35v1.35h-1.35zM265.4 364.5h1.35v1.35h-1.35zM402.3 376.8h1.35v1.35h-1.35zM161.6 364.0h1.35v1.35h-1.35zM403.1 365.4h1.35v1.35h-1.35zM475.7 348.4h1.35v1.35h-1.35zM73.6 392.8h1.35v1.35h-1.35zM245.7 369.1h1.35v1.35h-1.35zM509.4 362.8h1.35v1.35h-1.35zM419.1 341.3h1.35v1.35h-1.35zM321.7 367.5h1.35v1.35h-1.35zM421.5 376.5h1.35v1.35h-1.35zM209.5 400.0h1.35v1.35h-1.35zM100.1 380.5h1.35v1.35h-1.35zM45.1 394.5h1.35v1.35h-1.35zM47.0 398.8h1.35v1.35h-1.35zM86.9 424.3h1.35v1.35h-1.35zM83.4 372.1h1.35v1.35h-1.35zM476.0 351.6h1.35v1.35h-1.35zM258.2 407.4h1.35v1.35h-1.35zM56.0 386.5h1.35v1.35h-1.35zM141.7 370.6h1.35v1.35h-1.35zM177.1 411.6h1.35v1.35h-1.35zM137.7 324.8h1.35v1.35h-1.35zM296.4 360.2h1.35v1.35h-1.35zM171.8 404.5h1.35v1.35h-1.35zM416.3 357.8h1.35v1.35h-1.35zM53.5 396.6h1.35v1.35h-1.35zM146.2 352.0h1.35v1.35h-1.35zM145.2 359.2h1.35v1.35h-1.35zM298.2 360.9h1.35v1.35h-1.35zM259.6 341.8h1.35v1.35h-1.35zM109.9 366.1h1.35v1.35h-1.35zM110.0 386.1h1.35v1.35h-1.35zM257.5 378.1h1.35v1.35h-1.35zM146.1 421.1h1.35v1.35h-1.35zM200.3 383.9h1.35v1.35h-1.35zM274.9 368.1h1.35v1.35h-1.35zM457.3 324.2h1.35v1.35h-1.35zM123.5 383.9h1.35v1.35h-1.35zM246.3 385.7h1.35v1.35h-1.35zM571.7 330.8h1.35v1.35h-1.35zM236.3 336.2h1.35v1.35h-1.35zM329.6 395.1h1.35v1.35h-1.35zM157.5 392.8h1.35v1.35h-1.35zM135.8 364.6h1.35v1.35h-1.35zM273.6 376.2h1.35v1.35h-1.35zM181.6 394.7h1.35v1.35h-1.35zM270.6 375.7h1.35v1.35h-1.35zM503.4 350.7h1.35v1.35h-1.35zM181.5 386.7h1.35v1.35h-1.35zM465.8 349.8h1.35v1.35h-1.35zM173.7 395.4h1.35v1.35h-1.35zM167.7 373.0h1.35v1.35h-1.35zM594.5 328.6h1.35v1.35h-1.35zM225.1 372.4h1.35v1.35h-1.35zM90.6 380.6h1.35v1.35h-1.35zM93.3 380.9h1.35v1.35h-1.35zM56.9 387.9h1.35v1.35h-1.35zM62.3 413.9h1.35v1.35h-1.35zM116.2 367.9h1.35v1.35h-1.35zM524.5 326.1h1.35v1.35h-1.35zM49.0 347.6h1.35v1.35h-1.35zM423.8 340.7h1.35v1.35h-1.35zM341.8 381.6h1.35v1.35h-1.35zM189.2 389.5h1.35v1.35h-1.35zM82.7 349.6h1.35v1.35h-1.35zM301.3 353.7h1.35v1.35h-1.35zM273.9 356.6h1.35v1.35h-1.35zM313.2 357.9h1.35v1.35h-1.35zM143.7 380.8h1.35v1.35h-1.35zM530.3 326.7h1.35v1.35h-1.35zM238.6 367.0h1.35v1.35h-1.35zM49.0 386.0h1.35v1.35h-1.35zM170.4 382.0h1.35v1.35h-1.35zM291.8 353.6h1.35v1.35h-1.35zM95.3 395.1h1.35v1.35h-1.35zM128.3 371.8h1.35v1.35h-1.35zM342.0 343.8h1.35v1.35h-1.35zM314.6 343.1h1.35v1.35h-1.35zM59.1 404.5h1.35v1.35h-1.35zM199.9 377.0h1.35v1.35h-1.35zM122.4 387.0h1.35v1.35h-1.35zM483.0 356.3h1.35v1.35h-1.35zM478.5 339.3h1.35v1.35h-1.35zM534.7 341.7h1.35v1.35h-1.35zM192.7 375.4h1.35v1.35h-1.35zM507.5 335.8h1.35v1.35h-1.35zM214.0 388.7h1.35v1.35h-1.35zM587.3 344.5h1.35v1.35h-1.35zM155.6 371.6h1.35v1.35h-1.35zM167.6 361.9h1.35v1.35h-1.35zM328.1 371.7h1.35v1.35h-1.35zM439.1 336.5h1.35v1.35h-1.35zM238.3 386.4h1.35v1.35h-1.35zM193.0 378.2h1.35v1.35h-1.35zM542.1 307.4h1.35v1.35h-1.35zM414.5 356.7h1.35v1.35h-1.35zM233.4 363.5h1.35v1.35h-1.35zM214.9 402.6h1.35v1.35h-1.35zM133.2 394.4h1.35v1.35h-1.35zM207.1 363.4h1.35v1.35h-1.35zM86.6 376.3h1.35v1.35h-1.35zM396.4 353.6h1.35v1.35h-1.35zM300.7 365.0h1.35v1.35h-1.35zM421.0 344.4h1.35v1.35h-1.35zM84.8 413.8h1.35v1.35h-1.35zM96.3 380.8h1.35v1.35h-1.35zM237.8 385.9h1.35v1.35h-1.35zM361.9 343.6h1.35v1.35h-1.35zM511.3 360.4h1.35v1.35h-1.35zM578.1 339.7h1.35v1.35h-1.35zM412.3 352.3h1.35v1.35h-1.35zM48.6 386.8h1.35v1.35h-1.35zM134.6 371.8h1.35v1.35h-1.35zM86.6 317.0h1.35v1.35h-1.35zM298.4 369.8h1.35v1.35h-1.35zM67.6 388.2h1.35v1.35h-1.35zM356.5 362.3h1.35v1.35h-1.35zM400.2 340.1h1.35v1.35h-1.35zM481.1 332.2h1.35v1.35h-1.35zM561.7 305.7h1.35v1.35h-1.35zM246.3 390.8h1.35v1.35h-1.35zM316.4 360.5h1.35v1.35h-1.35zM104.5 377.4h1.35v1.35h-1.35zM77.4 397.1h1.35v1.35h-1.35zM393.5 375.9h1.35v1.35h-1.35zM236.2 376.5h1.35v1.35h-1.35zM330.4 348.5h1.35v1.35h-1.35zM380.2 389.6h1.35v1.35h-1.35zM338.7 347.0h1.35v1.35h-1.35zM96.5 421.1h1.35v1.35h-1.35zM147.2 385.4h1.35v1.35h-1.35zM173.9 391.2h1.35v1.35h-1.35zM236.7 382.5h1.35v1.35h-1.35zM220.2 330.2h1.35v1.35h-1.35zM180.3 389.9h1.35v1.35h-1.35zM189.7 379.4h1.35v1.35h-1.35zM183.8 376.6h1.35v1.35h-1.35zM183.7 358.1h1.35v1.35h-1.35zM204.0 384.7h1.35v1.35h-1.35zM67.2 386.4h1.35v1.35h-1.35zM162.3 415.6h1.35v1.35h-1.35zM410.9 355.9h1.35v1.35h-1.35zM141.1 397.5h1.35v1.35h-1.35zM339.0 330.4h1.35v1.35h-1.35zM609.9 341.6h1.35v1.35h-1.35zM177.1 405.7h1.35v1.35h-1.35zM92.6 378.2h1.35v1.35h-1.35zM202.0 353.3h1.35v1.35h-1.35zM114.2 362.8h1.35v1.35h-1.35zM70.3 361.6h1.35v1.35h-1.35zM61.7 404.7h1.35v1.35h-1.35zM368.9 363.9h1.35v1.35h-1.35zM223.0 379.5h1.35v1.35h-1.35zM337.3 334.4h1.35v1.35h-1.35zM388.0 382.5h1.35v1.35h-1.35zM49.4 388.2h1.35v1.35h-1.35zM236.9 388.4h1.35v1.35h-1.35zM49.4 394.2h1.35v1.35h-1.35zM52.1 377.6h1.35v1.35h-1.35zM117.5 345.0h1.35v1.35h-1.35zM576.4 327.4h1.35v1.35h-1.35zM188.0 363.2h1.35v1.35h-1.35zM588.0 356.8h1.35v1.35h-1.35zM496.8 289.9h1.35v1.35h-1.35zM138.6 290.7h1.35v1.35h-1.35zM80.3 292.2h1.35v1.35h-1.35zM450.8 241.9h1.35v1.35h-1.35zM515.7 263.0h1.35v1.35h-1.35zM414.2 243.5h1.35v1.35h-1.35zM474.9 268.4h1.35v1.35h-1.35zM578.7 231.7h1.35v1.35h-1.35zM437.7 274.1h1.35v1.35h-1.35zM485.6 256.8h1.35v1.35h-1.35zM579.3 275.1h1.35v1.35h-1.35zM447.0 237.9h1.35v1.35h-1.35zM88.0 181.0h1.35v1.35h-1.35z" shape-rendering="auto"/>
<path fill="#48b8b8" d="M291.2 325.9h1.35v1.35h-1.35zM262.3 362.3h1.35v1.35h-1.35zM56.5 372.1h1.35v1.35h-1.35zM284.4 380.0h1.35v1.35h-1.35zM483.2 384.9h1.35v1.35h-1.35zM182.2 357.5h1.35v1.35h-1.35zM242.8 347.4h1.35v1.35h-1.35zM537.0 315.3h1.35v1.35h-1.35zM411.2 320.0h1.35v1.35h-1.35zM124.6 374.6h1.35v1.35h-1.35zM133.8 383.1h1.35v1.35h-1.35zM64.5 402.3h1.35v1.35h-1.35zM83.5 358.4h1.35v1.35h-1.35zM83.4 382.2h1.35v1.35h-1.35zM121.9 383.8h1.35v1.35h-1.35zM243.9 367.6h1.35v1.35h-1.35zM221.8 332.7h1.35v1.35h-1.35zM376.3 337.2h1.35v1.35h-1.35zM383.9 342.9h1.35v1.35h-1.35zM62.9 375.7h1.35v1.35h-1.35zM257.4 381.0h1.35v1.35h-1.35zM423.6 356.1h1.35v1.35h-1.35zM151.4 369.3h1.35v1.35h-1.35zM143.1 364.2h1.35v1.35h-1.35zM423.3 357.0h1.35v1.35h-1.35zM523.4 326.1h1.35v1.35h-1.35zM381.0 324.1h1.35v1.35h-1.35zM119.3 362.0h1.35v1.35h-1.35zM148.4 373.8h1.35v1.35h-1.35zM88.5 372.8h1.35v1.35h-1.35zM46.5 373.7h1.35v1.35h-1.35zM78.8 381.4h1.35v1.35h-1.35zM572.4 360.3h1.35v1.35h-1.35zM485.6 335.5h1.35v1.35h-1.35zM534.8 313.3h1.35v1.35h-1.35zM251.2 349.9h1.35v1.35h-1.35zM218.9 394.0h1.35v1.35h-1.35zM74.8 369.1h1.35v1.35h-1.35zM55.5 358.3h1.35v1.35h-1.35zM52.3 406.3h1.35v1.35h-1.35zM159.3 384.4h1.35v1.35h-1.35zM479.5 312.3h1.35v1.35h-1.35zM360.0 356.8h1.35v1.35h-1.35zM444.2 283.2h1.35v1.35h-1.35zM293.0 338.2h1.35v1.35h-1.35zM596.9 309.2h1.35v1.35h-1.35zM224.8 388.4h1.35v1.35h-1.35zM192.1 384.1h1.35v1.35h-1.35zM193.0 352.9h1.35v1.35h-1.35zM93.2 380.1h1.35v1.35h-1.35zM192.0 352.6h1.35v1.35h-1.35zM268.3 341.4h1.35v1.35h-1.35zM259.2 345.0h1.35v1.35h-1.35zM358.4 345.7h1.35v1.35h-1.35zM107.9 358.2h1.35v1.35h-1.35zM268.5 336.4h1.35v1.35h-1.35zM69.0 386.1h1.35v1.35h-1.35zM370.0 335.2h1.35v1.35h-1.35zM352.5 335.2h1.35v1.35h-1.35zM125.3 391.0h1.35v1.35h-1.35zM120.5 367.0h1.35v1.35h-1.35zM334.8 319.0h1.35v1.35h-1.35zM149.0 362.3h1.35v1.35h-1.35zM271.0 370.0h1.35v1.35h-1.35zM428.4 330.5h1.35v1.35h-1.35zM565.9 311.0h1.35v1.35h-1.35zM324.5 335.6h1.35v1.35h-1.35zM125.3 354.9h1.35v1.35h-1.35zM63.7 387.3h1.35v1.35h-1.35zM205.7 362.0h1.35v1.35h-1.35zM259.7 375.3h1.35v1.35h-1.35zM417.8 320.1h1.35v1.35h-1.35zM261.1 335.5h1.35v1.35h-1.35zM302.1 345.2h1.35v1.35h-1.35zM48.7 320.3h1.35v1.35h-1.35zM141.0 395.2h1.35v1.35h-1.35zM306.2 348.1h1.35v1.35h-1.35zM373.1 341.9h1.35v1.35h-1.35zM442.9 334.7h1.35v1.35h-1.35zM384.2 336.0h1.35v1.35h-1.35zM57.7 392.9h1.35v1.35h-1.35zM279.6 347.3h1.35v1.35h-1.35zM455.0 332.4h1.35v1.35h-1.35zM188.2 344.0h1.35v1.35h-1.35zM124.3 347.3h1.35v1.35h-1.35zM165.9 349.1h1.35v1.35h-1.35zM400.7 319.6h1.35v1.35h-1.35zM61.5 333.8h1.35v1.35h-1.35zM82.6 345.4h1.35v1.35h-1.35zM293.4 343.3h1.35v1.35h-1.35zM653.3 331.4h1.35v1.35h-1.35zM281.9 347.1h1.35v1.35h-1.35zM83.0 356.7h1.35v1.35h-1.35zM266.8 351.5h1.35v1.35h-1.35zM81.2 380.1h1.35v1.35h-1.35zM282.8 358.2h1.35v1.35h-1.35zM178.8 374.7h1.35v1.35h-1.35zM144.5 384.3h1.35v1.35h-1.35zM169.1 361.0h1.35v1.35h-1.35zM339.8 347.3h1.35v1.35h-1.35zM319.7 364.9h1.35v1.35h-1.35zM152.0 358.9h1.35v1.35h-1.35zM299.0 361.0h1.35v1.35h-1.35zM395.8 337.1h1.35v1.35h-1.35zM201.2 365.9h1.35v1.35h-1.35zM372.8 332.3h1.35v1.35h-1.35zM383.5 334.9h1.35v1.35h-1.35zM148.6 395.0h1.35v1.35h-1.35zM433.3 349.0h1.35v1.35h-1.35zM501.0 307.2h1.35v1.35h-1.35zM444.5 332.8h1.35v1.35h-1.35zM630.9 274.7h1.35v1.35h-1.35zM241.0 360.4h1.35v1.35h-1.35zM292.2 343.3h1.35v1.35h-1.35zM198.6 344.0h1.35v1.35h-1.35zM180.8 342.8h1.35v1.35h-1.35zM68.4 360.7h1.35v1.35h-1.35zM387.0 346.3h1.35v1.35h-1.35zM61.9 359.0h1.35v1.35h-1.35zM361.6 356.2h1.35v1.35h-1.35zM293.6 379.2h1.35v1.35h-1.35zM416.2 336.7h1.35v1.35h-1.35zM423.2 322.5h1.35v1.35h-1.35zM192.1 353.2h1.35v1.35h-1.35zM318.3 363.6h1.35v1.35h-1.35zM585.5 332.6h1.35v1.35h-1.35zM88.9 384.6h1.35v1.35h-1.35zM398.5 349.0h1.35v1.35h-1.35zM601.0 336.6h1.35v1.35h-1.35zM437.3 337.6h1.35v1.35h-1.35zM556.8 316.9h1.35v1.35h-1.35zM101.9 370.6h1.35v1.35h-1.35zM324.5 354.5h1.35v1.35h-1.35zM278.7 347.5h1.35v1.35h-1.35zM226.6 366.4h1.35v1.35h-1.35zM390.2 367.6h1.35v1.35h-1.35zM464.1 319.0h1.35v1.35h-1.35zM224.3 365.8h1.35v1.35h-1.35zM570.9 340.8h1.35v1.35h-1.35zM525.0 319.9h1.35v1.35h-1.35zM80.2 359.0h1.35v1.35h-1.35zM98.6 377.4h1.35v1.35h-1.35zM645.9 295.2h1.35v1.35h-1.35zM155.6 389.7h1.35v1.35h-1.35zM61.3 394.9h1.35v1.35h-1.35zM500.9 324.7h1.35v1.35h-1.35zM294.7 330.7h1.35v1.35h-1.35zM51.3 353.4h1.35v1.35h-1.35zM306.5 318.5h1.35v1.35h-1.35zM365.4 369.4h1.35v1.35h-1.35zM165.5 357.5h1.35v1.35h-1.35zM416.6 347.2h1.35v1.35h-1.35zM427.9 359.2h1.35v1.35h-1.35zM509.1 321.7h1.35v1.35h-1.35zM649.4 300.4h1.35v1.35h-1.35zM259.4 345.5h1.35v1.35h-1.35zM360.2 338.4h1.35v1.35h-1.35zM257.9 361.0h1.35v1.35h-1.35zM150.6 363.5h1.35v1.35h-1.35zM429.8 354.3h1.35v1.35h-1.35zM139.6 339.8h1.35v1.35h-1.35zM190.4 362.8h1.35v1.35h-1.35zM121.4 366.0h1.35v1.35h-1.35zM364.0 335.6h1.35v1.35h-1.35zM233.9 311.6h1.35v1.35h-1.35zM134.9 371.7h1.35v1.35h-1.35zM157.1 369.9h1.35v1.35h-1.35zM447.1 331.4h1.35v1.35h-1.35zM173.5 315.7h1.35v1.35h-1.35zM293.0 351.3h1.35v1.35h-1.35zM108.7 339.8h1.35v1.35h-1.35zM370.9 341.2h1.35v1.35h-1.35zM113.7 384.7h1.35v1.35h-1.35zM576.2 352.0h1.35v1.35h-1.35zM265.2 370.6h1.35v1.35h-1.35zM521.8 323.5h1.35v1.35h-1.35zM273.9 336.4h1.35v1.35h-1.35zM81.3 365.7h1.35v1.35h-1.35zM51.9 348.7h1.35v1.35h-1.35zM90.4 364.8h1.35v1.35h-1.35zM102.8 353.4h1.35v1.35h-1.35zM385.9 368.9h1.35v1.35h-1.35zM184.2 333.9h1.35v1.35h-1.35zM368.5 364.5h1.35v1.35h-1.35zM243.9 404.5h1.35v1.35h-1.35zM270.0 353.2h1.35v1.35h-1.35zM480.4 324.0h1.35v1.35h-1.35zM423.5 347.5h1.35v1.35h-1.35zM384.8 350.7h1.35v1.35h-1.35zM113.9 372.9h1.35v1.35h-1.35zM198.1 345.5h1.35v1.35h-1.35zM159.7 363.4h1.35v1.35h-1.35zM372.9 350.4h1.35v1.35h-1.35zM350.8 355.1h1.35v1.35h-1.35zM575.4 313.1h1.35v1.35h-1.35zM53.2 365.5h1.35v1.35h-1.35zM68.0 333.2h1.35v1.35h-1.35zM424.5 350.9h1.35v1.35h-1.35zM487.8 331.7h1.35v1.35h-1.35zM155.7 364.4h1.35v1.35h-1.35zM279.4 387.8h1.35v1.35h-1.35zM93.5 379.5h1.35v1.35h-1.35zM565.1 341.2h1.35v1.35h-1.35zM266.0 367.1h1.35v1.35h-1.35zM429.5 336.5h1.35v1.35h-1.35zM182.5 390.4h1.35v1.35h-1.35zM534.9 311.9h1.35v1.35h-1.35zM177.0 356.8h1.35v1.35h-1.35zM284.7 337.8h1.35v1.35h-1.35zM295.9 322.3h1.35v1.35h-1.35zM134.1 366.7h1.35v1.35h-1.35zM76.8 403.3h1.35v1.35h-1.35zM357.8 352.4h1.35v1.35h-1.35zM131.0 413.5h1.35v1.35h-1.35zM177.5 303.0h1.35v1.35h-1.35zM204.7 361.8h1.35v1.35h-1.35zM285.1 341.9h1.35v1.35h-1.35zM88.4 388.6h1.35v1.35h-1.35zM320.1 372.3h1.35v1.35h-1.35zM90.9 389.7h1.35v1.35h-1.35zM189.0 387.8h1.35v1.35h-1.35zM156.7 388.7h1.35v1.35h-1.35zM273.4 364.9h1.35v1.35h-1.35zM349.7 330.6h1.35v1.35h-1.35zM434.7 310.8h1.35v1.35h-1.35zM52.5 387.6h1.35v1.35h-1.35zM192.3 320.2h1.35v1.35h-1.35zM328.4 358.6h1.35v1.35h-1.35zM505.6 343.5h1.35v1.35h-1.35zM274.7 322.1h1.35v1.35h-1.35zM551.8 337.3h1.35v1.35h-1.35zM123.3 376.1h1.35v1.35h-1.35zM295.0 339.1h1.35v1.35h-1.35zM247.1 370.2h1.35v1.35h-1.35zM215.5 366.9h1.35v1.35h-1.35zM267.2 363.9h1.35v1.35h-1.35zM284.4 362.8h1.35v1.35h-1.35zM304.7 354.6h1.35v1.35h-1.35zM264.9 357.2h1.35v1.35h-1.35zM267.7 363.3h1.35v1.35h-1.35zM298.6 332.9h1.35v1.35h-1.35zM282.5 353.0h1.35v1.35h-1.35zM371.3 310.4h1.35v1.35h-1.35zM125.6 399.6h1.35v1.35h-1.35zM262.6 340.9h1.35v1.35h-1.35zM65.5 386.2h1.35v1.35h-1.35zM406.0 316.4h1.35v1.35h-1.35zM504.5 340.3h1.35v1.35h-1.35zM255.4 370.6h1.35v1.35h-1.35zM307.0 401.4h1.35v1.35h-1.35zM142.0 355.3h1.35v1.35h-1.35zM399.0 361.3h1.35v1.35h-1.35zM72.7 294.2h1.35v1.35h-1.35zM51.2 344.8h1.35v1.35h-1.35zM385.4 362.0h1.35v1.35h-1.35zM226.0 347.6h1.35v1.35h-1.35zM450.6 340.6h1.35v1.35h-1.35zM241.8 365.9h1.35v1.35h-1.35zM496.8 330.9h1.35v1.35h-1.35zM217.2 368.8h1.35v1.35h-1.35zM440.3 354.7h1.35v1.35h-1.35zM154.4 361.0h1.35v1.35h-1.35zM396.8 358.6h1.35v1.35h-1.35zM126.3 379.3h1.35v1.35h-1.35zM256.7 361.9h1.35v1.35h-1.35zM177.0 398.0h1.35v1.35h-1.35zM401.1 329.5h1.35v1.35h-1.35zM336.4 341.1h1.35v1.35h-1.35zM331.8 341.7h1.35v1.35h-1.35zM166.1 354.1h1.35v1.35h-1.35zM165.6 392.1h1.35v1.35h-1.35zM224.3 378.1h1.35v1.35h-1.35zM427.4 359.7h1.35v1.35h-1.35zM149.1 335.3h1.35v1.35h-1.35zM420.6 369.5h1.35v1.35h-1.35zM186.2 367.2h1.35v1.35h-1.35zM102.3 368.5h1.35v1.35h-1.35zM61.2 365.9h1.35v1.35h-1.35zM581.7 311.3h1.35v1.35h-1.35zM283.9 363.4h1.35v1.35h-1.35zM48.3 365.5h1.35v1.35h-1.35zM485.0 328.3h1.35v1.35h-1.35zM170.3 374.8h1.35v1.35h-1.35zM194.5 352.8h1.35v1.35h-1.35zM185.0 380.6h1.35v1.35h-1.35zM244.6 321.2h1.35v1.35h-1.35zM197.4 368.6h1.35v1.35h-1.35zM162.6 335.1h1.35v1.35h-1.35zM374.2 311.2h1.35v1.35h-1.35zM63.5 367.2h1.35v1.35h-1.35zM308.7 351.2h1.35v1.35h-1.35zM74.1 406.6h1.35v1.35h-1.35zM313.9 360.9h1.35v1.35h-1.35zM309.4 337.2h1.35v1.35h-1.35zM266.7 329.8h1.35v1.35h-1.35zM164.0 407.7h1.35v1.35h-1.35zM237.5 385.2h1.35v1.35h-1.35zM456.2 343.3h1.35v1.35h-1.35zM273.3 366.0h1.35v1.35h-1.35zM543.7 315.7h1.35v1.35h-1.35zM215.5 393.1h1.35v1.35h-1.35zM117.1 368.4h1.35v1.35h-1.35zM437.2 337.8h1.35v1.35h-1.35zM296.0 351.5h1.35v1.35h-1.35zM463.9 338.7h1.35v1.35h-1.35zM475.8 344.7h1.35v1.35h-1.35zM461.1 325.4h1.35v1.35h-1.35zM373.9 352.5h1.35v1.35h-1.35zM183.0 363.3h1.35v1.35h-1.35zM463.1 361.7h1.35v1.35h-1.35zM328.3 336.4h1.35v1.35h-1.35zM321.7 354.6h1.35v1.35h-1.35zM271.3 329.4h1.35v1.35h-1.35zM392.8 374.9h1.35v1.35h-1.35zM261.5 381.3h1.35v1.35h-1.35zM144.9 396.0h1.35v1.35h-1.35zM222.2 317.6h1.35v1.35h-1.35zM64.2 392.9h1.35v1.35h-1.35zM236.2 380.0h1.35v1.35h-1.35zM96.0 344.7h1.35v1.35h-1.35zM246.1 347.3h1.35v1.35h-1.35zM508.4 338.4h1.35v1.35h-1.35zM133.5 341.9h1.35v1.35h-1.35zM58.5 376.7h1.35v1.35h-1.35zM173.9 367.5h1.35v1.35h-1.35zM211.1 379.7h1.35v1.35h-1.35zM95.3 335.9h1.35v1.35h-1.35zM48.9 354.8h1.35v1.35h-1.35zM47.7 389.7h1.35v1.35h-1.35zM340.6 354.8h1.35v1.35h-1.35zM395.9 328.0h1.35v1.35h-1.35zM192.2 365.6h1.35v1.35h-1.35zM159.6 358.9h1.35v1.35h-1.35zM48.1 380.7h1.35v1.35h-1.35zM300.2 348.7h1.35v1.35h-1.35zM538.5 345.2h1.35v1.35h-1.35zM191.7 344.8h1.35v1.35h-1.35zM48.2 406.0h1.35v1.35h-1.35zM492.1 350.7h1.35v1.35h-1.35zM329.3 373.0h1.35v1.35h-1.35zM452.6 353.7h1.35v1.35h-1.35zM387.0 335.2h1.35v1.35h-1.35zM222.5 351.9h1.35v1.35h-1.35zM307.8 358.1h1.35v1.35h-1.35zM58.4 377.4h1.35v1.35h-1.35zM215.9 350.0h1.35v1.35h-1.35zM294.1 333.9h1.35v1.35h-1.35zM113.6 348.1h1.35v1.35h-1.35zM252.1 360.4h1.35v1.35h-1.35zM381.9 323.5h1.35v1.35h-1.35zM209.5 388.3h1.35v1.35h-1.35zM208.0 365.7h1.35v1.35h-1.35zM162.3 352.1h1.35v1.35h-1.35zM107.4 386.6h1.35v1.35h-1.35zM229.7 375.0h1.35v1.35h-1.35zM176.6 350.0h1.35v1.35h-1.35zM357.9 375.3h1.35v1.35h-1.35zM53.4 346.4h1.35v1.35h-1.35zM176.2 370.6h1.35v1.35h-1.35zM180.8 370.0h1.35v1.35h-1.35zM215.3 355.0h1.35v1.35h-1.35zM183.2 353.7h1.35v1.35h-1.35zM310.7 378.6h1.35v1.35h-1.35zM179.2 355.7h1.35v1.35h-1.35zM255.1 350.1h1.35v1.35h-1.35zM528.3 333.6h1.35v1.35h-1.35zM153.1 344.0h1.35v1.35h-1.35zM185.3 372.5h1.35v1.35h-1.35zM105.0 338.2h1.35v1.35h-1.35zM599.7 346.2h1.35v1.35h-1.35zM418.8 336.6h1.35v1.35h-1.35zM120.4 385.4h1.35v1.35h-1.35zM317.2 315.9h1.35v1.35h-1.35zM154.4 380.4h1.35v1.35h-1.35zM396.8 346.9h1.35v1.35h-1.35zM479.9 302.1h1.35v1.35h-1.35zM201.4 400.2h1.35v1.35h-1.35zM203.2 360.5h1.35v1.35h-1.35zM113.0 352.0h1.35v1.35h-1.35zM481.5 345.9h1.35v1.35h-1.35zM56.9 373.8h1.35v1.35h-1.35zM57.1 371.2h1.35v1.35h-1.35zM147.7 359.0h1.35v1.35h-1.35zM546.4 337.2h1.35v1.35h-1.35zM139.1 363.5h1.35v1.35h-1.35zM532.7 337.0h1.35v1.35h-1.35zM415.5 350.5h1.35v1.35h-1.35zM78.9 416.9h1.35v1.35h-1.35zM326.9 351.8h1.35v1.35h-1.35zM408.6 336.4h1.35v1.35h-1.35zM110.0 370.4h1.35v1.35h-1.35zM221.2 349.5h1.35v1.35h-1.35zM81.8 382.3h1.35v1.35h-1.35zM134.5 393.1h1.35v1.35h-1.35zM113.4 387.7h1.35v1.35h-1.35zM113.8 410.3h1.35v1.35h-1.35zM152.7 357.6h1.35v1.35h-1.35zM78.9 399.0h1.35v1.35h-1.35zM117.2 357.3h1.35v1.35h-1.35zM351.9 340.8h1.35v1.35h-1.35zM261.8 370.5h1.35v1.35h-1.35zM405.6 337.0h1.35v1.35h-1.35zM499.8 345.4h1.35v1.35h-1.35zM125.5 352.6h1.35v1.35h-1.35zM326.5 359.5h1.35v1.35h-1.35zM92.9 367.8h1.35v1.35h-1.35zM113.0 383.4h1.35v1.35h-1.35zM182.8 383.4h1.35v1.35h-1.35zM98.7 401.4h1.35v1.35h-1.35zM458.3 321.4h1.35v1.35h-1.35zM466.6 328.5h1.35v1.35h-1.35zM143.3 379.2h1.35v1.35h-1.35zM278.9 364.3h1.35v1.35h-1.35zM204.9 374.1h1.35v1.35h-1.35zM120.4 360.9h1.35v1.35h-1.35zM249.7 370.3h1.35v1.35h-1.35zM353.1 356.7h1.35v1.35h-1.35zM533.5 361.9h1.35v1.35h-1.35zM425.0 340.2h1.35v1.35h-1.35zM194.2 352.3h1.35v1.35h-1.35zM271.1 314.3h1.35v1.35h-1.35zM259.1 380.3h1.35v1.35h-1.35zM520.1 376.6h1.35v1.35h-1.35zM145.6 371.8h1.35v1.35h-1.35zM254.3 367.6h1.35v1.35h-1.35zM48.5 374.0h1.35v1.35h-1.35zM164.6 387.6h1.35v1.35h-1.35zM58.1 387.0h1.35v1.35h-1.35zM398.9 360.8h1.35v1.35h-1.35zM261.2 385.4h1.35v1.35h-1.35zM85.8 360.4h1.35v1.35h-1.35zM79.1 384.6h1.35v1.35h-1.35zM285.8 362.7h1.35v1.35h-1.35zM316.8 327.5h1.35v1.35h-1.35zM251.4 346.2h1.35v1.35h-1.35zM322.6 324.8h1.35v1.35h-1.35zM116.7 422.4h1.35v1.35h-1.35zM485.9 339.7h1.35v1.35h-1.35zM406.3 340.3h1.35v1.35h-1.35zM106.9 364.7h1.35v1.35h-1.35zM103.2 369.3h1.35v1.35h-1.35zM137.2 396.9h1.35v1.35h-1.35zM312.7 332.9h1.35v1.35h-1.35zM404.3 362.8h1.35v1.35h-1.35zM527.7 340.8h1.35v1.35h-1.35zM354.7 362.6h1.35v1.35h-1.35zM363.6 347.2h1.35v1.35h-1.35zM93.6 372.5h1.35v1.35h-1.35zM450.6 330.5h1.35v1.35h-1.35zM214.9 361.6h1.35v1.35h-1.35zM293.7 349.5h1.35v1.35h-1.35zM353.6 402.3h1.35v1.35h-1.35zM203.4 379.0h1.35v1.35h-1.35zM299.9 358.7h1.35v1.35h-1.35zM174.3 335.1h1.35v1.35h-1.35zM433.4 308.0h1.35v1.35h-1.35zM246.5 386.0h1.35v1.35h-1.35zM169.1 375.2h1.35v1.35h-1.35zM179.9 371.9h1.35v1.35h-1.35zM184.4 347.0h1.35v1.35h-1.35zM197.4 378.7h1.35v1.35h-1.35zM114.5 396.7h1.35v1.35h-1.35zM52.9 366.1h1.35v1.35h-1.35zM99.3 383.5h1.35v1.35h-1.35zM160.9 358.3h1.35v1.35h-1.35zM635.5 288.1h1.35v1.35h-1.35zM422.5 333.8h1.35v1.35h-1.35zM48.3 367.1h1.35v1.35h-1.35zM164.1 343.6h1.35v1.35h-1.35zM343.4 342.6h1.35v1.35h-1.35zM319.3 353.6h1.35v1.35h-1.35zM471.1 334.6h1.35v1.35h-1.35zM73.2 400.1h1.35v1.35h-1.35zM66.0 361.0h1.35v1.35h-1.35zM478.1 330.5h1.35v1.35h-1.35zM290.7 344.9h1.35v1.35h-1.35zM195.7 388.0h1.35v1.35h-1.35zM235.6 357.6h1.35v1.35h-1.35zM48.6 375.4h1.35v1.35h-1.35zM177.3 382.6h1.35v1.35h-1.35zM132.2 349.6h1.35v1.35h-1.35zM234.6 337.9h1.35v1.35h-1.35zM273.2 362.9h1.35v1.35h-1.35zM515.1 293.3h1.35v1.35h-1.35zM186.8 412.6h1.35v1.35h-1.35zM243.0 355.7h1.35v1.35h-1.35zM126.9 379.7h1.35v1.35h-1.35zM153.8 367.4h1.35v1.35h-1.35zM57.4 365.3h1.35v1.35h-1.35zM214.0 350.4h1.35v1.35h-1.35zM298.1 358.9h1.35v1.35h-1.35zM179.9 342.0h1.35v1.35h-1.35zM264.7 359.6h1.35v1.35h-1.35zM423.3 306.4h1.35v1.35h-1.35zM46.3 386.4h1.35v1.35h-1.35zM207.1 404.6h1.35v1.35h-1.35zM516.8 329.5h1.35v1.35h-1.35zM178.7 341.2h1.35v1.35h-1.35zM414.3 327.2h1.35v1.35h-1.35zM319.6 365.8h1.35v1.35h-1.35zM248.1 325.0h1.35v1.35h-1.35zM282.4 345.3h1.35v1.35h-1.35zM586.5 319.6h1.35v1.35h-1.35zM460.6 353.9h1.35v1.35h-1.35zM138.0 357.1h1.35v1.35h-1.35zM212.7 355.9h1.35v1.35h-1.35zM346.3 367.9h1.35v1.35h-1.35zM414.9 364.1h1.35v1.35h-1.35zM178.1 405.0h1.35v1.35h-1.35zM45.7 367.0h1.35v1.35h-1.35zM69.0 331.4h1.35v1.35h-1.35zM171.4 372.0h1.35v1.35h-1.35zM68.6 377.9h1.35v1.35h-1.35zM193.8 371.9h1.35v1.35h-1.35zM353.1 318.4h1.35v1.35h-1.35zM219.5 372.8h1.35v1.35h-1.35zM331.7 337.4h1.35v1.35h-1.35zM417.6 345.7h1.35v1.35h-1.35zM123.4 346.6h1.35v1.35h-1.35zM412.1 328.2h1.35v1.35h-1.35zM94.0 385.4h1.35v1.35h-1.35zM231.7 360.7h1.35v1.35h-1.35zM223.5 337.4h1.35v1.35h-1.35zM238.9 343.3h1.35v1.35h-1.35zM292.7 375.2h1.35v1.35h-1.35zM219.7 375.4h1.35v1.35h-1.35zM469.5 343.9h1.35v1.35h-1.35zM161.0 373.6h1.35v1.35h-1.35zM275.2 353.2h1.35v1.35h-1.35zM77.1 373.2h1.35v1.35h-1.35zM330.4 345.1h1.35v1.35h-1.35zM302.6 378.3h1.35v1.35h-1.35zM137.8 367.6h1.35v1.35h-1.35zM67.4 372.1h1.35v1.35h-1.35zM133.4 343.4h1.35v1.35h-1.35zM446.2 308.1h1.35v1.35h-1.35zM115.9 344.3h1.35v1.35h-1.35zM92.8 376.0h1.35v1.35h-1.35zM462.2 360.2h1.35v1.35h-1.35zM244.9 370.3h1.35v1.35h-1.35zM93.6 365.0h1.35v1.35h-1.35zM216.8 377.1h1.35v1.35h-1.35zM352.3 373.6h1.35v1.35h-1.35zM55.1 373.9h1.35v1.35h-1.35zM154.1 350.3h1.35v1.35h-1.35zM358.5 325.2h1.35v1.35h-1.35zM379.8 369.3h1.35v1.35h-1.35zM58.4 368.8h1.35v1.35h-1.35zM331.7 372.1h1.35v1.35h-1.35zM317.0 361.3h1.35v1.35h-1.35zM153.9 407.8h1.35v1.35h-1.35zM231.2 386.2h1.35v1.35h-1.35zM181.6 362.8h1.35v1.35h-1.35zM143.3 353.3h1.35v1.35h-1.35zM354.1 318.3h1.35v1.35h-1.35zM269.5 389.6h1.35v1.35h-1.35zM167.9 368.6h1.35v1.35h-1.35zM279.5 340.7h1.35v1.35h-1.35zM337.0 346.1h1.35v1.35h-1.35zM134.3 345.4h1.35v1.35h-1.35zM84.0 348.2h1.35v1.35h-1.35zM145.7 388.7h1.35v1.35h-1.35zM383.7 319.3h1.35v1.35h-1.35zM169.9 347.1h1.35v1.35h-1.35zM554.0 332.6h1.35v1.35h-1.35zM250.0 358.0h1.35v1.35h-1.35zM306.9 336.9h1.35v1.35h-1.35zM127.9 345.6h1.35v1.35h-1.35zM316.3 360.4h1.35v1.35h-1.35zM103.1 362.2h1.35v1.35h-1.35zM84.0 376.5h1.35v1.35h-1.35zM290.5 355.4h1.35v1.35h-1.35zM154.7 389.9h1.35v1.35h-1.35zM231.3 354.0h1.35v1.35h-1.35zM168.9 383.4h1.35v1.35h-1.35zM192.3 334.1h1.35v1.35h-1.35zM367.1 345.2h1.35v1.35h-1.35zM110.4 352.9h1.35v1.35h-1.35zM152.1 356.4h1.35v1.35h-1.35zM75.0 324.6h1.35v1.35h-1.35zM258.2 363.2h1.35v1.35h-1.35zM629.6 326.1h1.35v1.35h-1.35zM280.7 341.2h1.35v1.35h-1.35zM105.1 378.0h1.35v1.35h-1.35zM509.0 329.8h1.35v1.35h-1.35zM52.9 340.5h1.35v1.35h-1.35zM90.9 400.1h1.35v1.35h-1.35zM127.8 374.6h1.35v1.35h-1.35zM253.5 369.4h1.35v1.35h-1.35zM238.5 368.4h1.35v1.35h-1.35zM451.4 317.4h1.35v1.35h-1.35zM397.6 346.0h1.35v1.35h-1.35zM56.8 388.3h1.35v1.35h-1.35zM322.7 386.3h1.35v1.35h-1.35zM300.0 369.6h1.35v1.35h-1.35zM302.8 353.7h1.35v1.35h-1.35zM160.5 384.4h1.35v1.35h-1.35zM275.3 351.4h1.35v1.35h-1.35zM137.4 373.0h1.35v1.35h-1.35zM46.6 365.3h1.35v1.35h-1.35zM93.1 333.2h1.35v1.35h-1.35zM132.5 390.7h1.35v1.35h-1.35zM519.7 321.0h1.35v1.35h-1.35zM499.3 315.5h1.35v1.35h-1.35zM402.5 349.6h1.35v1.35h-1.35zM54.9 363.1h1.35v1.35h-1.35zM494.3 358.9h1.35v1.35h-1.35zM172.2 344.2h1.35v1.35h-1.35zM183.8 349.0h1.35v1.35h-1.35zM417.3 351.2h1.35v1.35h-1.35zM53.3 356.2h1.35v1.35h-1.35zM249.1 368.3h1.35v1.35h-1.35zM356.5 354.8h1.35v1.35h-1.35zM134.1 350.4h1.35v1.35h-1.35zM374.7 329.9h1.35v1.35h-1.35zM177.2 359.1h1.35v1.35h-1.35zM83.2 375.8h1.35v1.35h-1.35zM408.7 315.7h1.35v1.35h-1.35zM199.9 346.4h1.35v1.35h-1.35zM59.6 341.3h1.35v1.35h-1.35zM62.4 335.6h1.35v1.35h-1.35zM434.9 351.9h1.35v1.35h-1.35zM147.7 388.7h1.35v1.35h-1.35zM118.1 369.2h1.35v1.35h-1.35zM317.2 367.1h1.35v1.35h-1.35zM65.7 363.6h1.35v1.35h-1.35zM345.4 325.3h1.35v1.35h-1.35zM381.1 322.8h1.35v1.35h-1.35zM65.4 368.1h1.35v1.35h-1.35zM154.2 357.0h1.35v1.35h-1.35zM172.8 350.3h1.35v1.35h-1.35zM161.3 361.7h1.35v1.35h-1.35zM273.8 356.9h1.35v1.35h-1.35zM431.1 354.2h1.35v1.35h-1.35zM110.9 356.7h1.35v1.35h-1.35zM346.4 348.3h1.35v1.35h-1.35zM455.8 337.1h1.35v1.35h-1.35zM65.4 323.1h1.35v1.35h-1.35zM318.5 359.5h1.35v1.35h-1.35zM196.9 359.3h1.35v1.35h-1.35zM383.6 349.5h1.35v1.35h-1.35zM228.9 365.7h1.35v1.35h-1.35zM62.8 361.3h1.35v1.35h-1.35zM169.1 364.0h1.35v1.35h-1.35zM359.1 330.2h1.35v1.35h-1.35zM221.9 357.4h1.35v1.35h-1.35zM216.4 365.8h1.35v1.35h-1.35zM139.0 386.6h1.35v1.35h-1.35zM80.6 381.2h1.35v1.35h-1.35zM252.0 348.5h1.35v1.35h-1.35zM247.7 348.0h1.35v1.35h-1.35zM105.7 374.8h1.35v1.35h-1.35zM457.4 343.7h1.35v1.35h-1.35zM174.4 337.2h1.35v1.35h-1.35zM314.2 366.9h1.35v1.35h-1.35zM46.1 348.5h1.35v1.35h-1.35zM152.8 358.9h1.35v1.35h-1.35zM352.0 352.0h1.35v1.35h-1.35zM164.5 380.5h1.35v1.35h-1.35zM216.7 332.3h1.35v1.35h-1.35zM553.8 351.1h1.35v1.35h-1.35zM119.1 349.7h1.35v1.35h-1.35zM533.5 301.1h1.35v1.35h-1.35zM513.7 322.3h1.35v1.35h-1.35zM206.3 391.3h1.35v1.35h-1.35zM326.9 353.9h1.35v1.35h-1.35zM314.1 319.5h1.35v1.35h-1.35zM64.6 388.3h1.35v1.35h-1.35zM344.7 360.9h1.35v1.35h-1.35zM205.9 346.2h1.35v1.35h-1.35zM246.0 367.6h1.35v1.35h-1.35zM455.4 324.5h1.35v1.35h-1.35zM542.3 359.7h1.35v1.35h-1.35zM109.3 399.8h1.35v1.35h-1.35zM80.9 379.8h1.35v1.35h-1.35zM529.3 314.7h1.35v1.35h-1.35zM364.4 369.3h1.35v1.35h-1.35zM501.7 328.7h1.35v1.35h-1.35zM186.3 332.1h1.35v1.35h-1.35zM361.7 358.4h1.35v1.35h-1.35zM59.3 361.5h1.35v1.35h-1.35zM93.5 382.3h1.35v1.35h-1.35zM379.6 340.8h1.35v1.35h-1.35zM404.8 348.4h1.35v1.35h-1.35zM421.5 312.5h1.35v1.35h-1.35zM54.3 393.3h1.35v1.35h-1.35zM176.0 318.1h1.35v1.35h-1.35zM209.5 354.7h1.35v1.35h-1.35zM368.6 340.9h1.35v1.35h-1.35zM558.7 324.4h1.35v1.35h-1.35zM109.0 372.2h1.35v1.35h-1.35zM54.7 366.3h1.35v1.35h-1.35zM250.2 391.7h1.35v1.35h-1.35zM113.6 381.3h1.35v1.35h-1.35zM73.4 364.1h1.35v1.35h-1.35zM401.3 336.0h1.35v1.35h-1.35zM348.6 364.1h1.35v1.35h-1.35zM230.7 360.2h1.35v1.35h-1.35zM544.4 320.4h1.35v1.35h-1.35zM211.6 344.8h1.35v1.35h-1.35zM257.6 365.6h1.35v1.35h-1.35zM418.7 337.6h1.35v1.35h-1.35zM384.3 299.5h1.35v1.35h-1.35zM104.2 363.2h1.35v1.35h-1.35zM322.7 338.5h1.35v1.35h-1.35zM382.1 352.9h1.35v1.35h-1.35zM138.5 371.8h1.35v1.35h-1.35zM308.3 367.9h1.35v1.35h-1.35zM358.2 340.9h1.35v1.35h-1.35zM83.0 345.5h1.35v1.35h-1.35zM242.1 368.6h1.35v1.35h-1.35zM236.5 364.4h1.35v1.35h-1.35zM158.6 377.3h1.35v1.35h-1.35zM152.0 340.2h1.35v1.35h-1.35zM139.0 361.0h1.35v1.35h-1.35zM394.5 348.5h1.35v1.35h-1.35zM145.5 366.4h1.35v1.35h-1.35zM127.3 347.9h1.35v1.35h-1.35zM323.0 319.2h1.35v1.35h-1.35zM280.8 338.2h1.35v1.35h-1.35zM474.6 320.4h1.35v1.35h-1.35zM60.7 332.6h1.35v1.35h-1.35zM404.6 364.4h1.35v1.35h-1.35zM307.3 357.9h1.35v1.35h-1.35zM98.1 375.3h1.35v1.35h-1.35zM436.3 309.4h1.35v1.35h-1.35zM215.0 366.1h1.35v1.35h-1.35zM153.9 372.6h1.35v1.35h-1.35zM134.0 341.3h1.35v1.35h-1.35zM135.7 369.5h1.35v1.35h-1.35zM327.2 385.5h1.35v1.35h-1.35zM288.5 393.4h1.35v1.35h-1.35zM92.8 351.7h1.35v1.35h-1.35zM269.6 340.6h1.35v1.35h-1.35zM133.7 343.4h1.35v1.35h-1.35zM67.0 340.9h1.35v1.35h-1.35zM458.2 318.2h1.35v1.35h-1.35zM52.2 360.4h1.35v1.35h-1.35zM223.1 352.0h1.35v1.35h-1.35zM654.2 325.1h1.35v1.35h-1.35zM495.9 326.3h1.35v1.35h-1.35zM327.7 366.9h1.35v1.35h-1.35zM65.5 372.4h1.35v1.35h-1.35zM458.5 332.8h1.35v1.35h-1.35zM329.9 352.1h1.35v1.35h-1.35zM253.2 370.5h1.35v1.35h-1.35zM305.0 360.0h1.35v1.35h-1.35zM188.6 367.5h1.35v1.35h-1.35zM47.0 349.7h1.35v1.35h-1.35zM77.9 339.6h1.35v1.35h-1.35zM411.8 322.0h1.35v1.35h-1.35zM502.3 327.3h1.35v1.35h-1.35zM394.0 321.2h1.35v1.35h-1.35zM64.2 365.1h1.35v1.35h-1.35zM306.9 344.3h1.35v1.35h-1.35zM185.2 400.7h1.35v1.35h-1.35zM289.9 370.2h1.35v1.35h-1.35zM326.3 363.2h1.35v1.35h-1.35zM167.5 361.7h1.35v1.35h-1.35zM391.9 337.7h1.35v1.35h-1.35zM145.1 366.8h1.35v1.35h-1.35zM273.3 338.3h1.35v1.35h-1.35zM451.9 355.2h1.35v1.35h-1.35zM126.2 381.9h1.35v1.35h-1.35zM272.6 369.6h1.35v1.35h-1.35zM107.2 357.3h1.35v1.35h-1.35zM247.6 341.9h1.35v1.35h-1.35zM77.5 405.0h1.35v1.35h-1.35zM282.2 359.7h1.35v1.35h-1.35zM268.9 346.0h1.35v1.35h-1.35zM262.1 328.2h1.35v1.35h-1.35zM159.5 394.3h1.35v1.35h-1.35zM339.2 332.0h1.35v1.35h-1.35zM89.1 400.1h1.35v1.35h-1.35zM267.7 345.3h1.35v1.35h-1.35zM74.4 375.9h1.35v1.35h-1.35zM69.5 373.7h1.35v1.35h-1.35zM253.7 373.1h1.35v1.35h-1.35zM315.1 363.3h1.35v1.35h-1.35zM206.6 381.5h1.35v1.35h-1.35zM548.4 317.6h1.35v1.35h-1.35zM208.2 326.3h1.35v1.35h-1.35zM165.7 371.3h1.35v1.35h-1.35zM509.4 363.4h1.35v1.35h-1.35zM263.8 383.1h1.35v1.35h-1.35zM291.4 343.5h1.35v1.35h-1.35zM553.2 330.3h1.35v1.35h-1.35zM374.6 378.9h1.35v1.35h-1.35zM277.3 330.0h1.35v1.35h-1.35zM394.2 332.6h1.35v1.35h-1.35zM190.6 372.4h1.35v1.35h-1.35zM319.7 336.3h1.35v1.35h-1.35zM155.8 344.9h1.35v1.35h-1.35zM490.8 353.7h1.35v1.35h-1.35zM653.6 331.1h1.35v1.35h-1.35zM562.6 329.1h1.35v1.35h-1.35zM189.8 343.2h1.35v1.35h-1.35zM143.0 367.6h1.35v1.35h-1.35zM387.9 348.6h1.35v1.35h-1.35zM49.4 371.5h1.35v1.35h-1.35zM147.0 363.4h1.35v1.35h-1.35zM569.8 314.5h1.35v1.35h-1.35zM194.6 327.0h1.35v1.35h-1.35zM353.8 344.0h1.35v1.35h-1.35zM194.0 339.7h1.35v1.35h-1.35zM52.0 366.0h1.35v1.35h-1.35zM153.9 335.8h1.35v1.35h-1.35zM53.1 401.7h1.35v1.35h-1.35zM140.5 386.3h1.35v1.35h-1.35zM53.0 377.3h1.35v1.35h-1.35zM251.2 341.5h1.35v1.35h-1.35zM104.0 369.2h1.35v1.35h-1.35zM54.8 387.0h1.35v1.35h-1.35zM243.8 387.3h1.35v1.35h-1.35zM178.9 389.8h1.35v1.35h-1.35zM57.9 337.8h1.35v1.35h-1.35zM216.8 369.7h1.35v1.35h-1.35zM247.6 357.2h1.35v1.35h-1.35zM248.6 336.4h1.35v1.35h-1.35zM71.6 325.5h1.35v1.35h-1.35zM289.6 356.2h1.35v1.35h-1.35zM123.2 369.6h1.35v1.35h-1.35zM122.3 355.4h1.35v1.35h-1.35zM316.4 379.1h1.35v1.35h-1.35zM131.5 390.5h1.35v1.35h-1.35zM150.3 356.8h1.35v1.35h-1.35zM158.1 377.9h1.35v1.35h-1.35zM90.4 389.5h1.35v1.35h-1.35zM200.1 326.2h1.35v1.35h-1.35zM49.4 373.4h1.35v1.35h-1.35zM437.6 330.1h1.35v1.35h-1.35zM147.4 353.9h1.35v1.35h-1.35zM148.4 362.1h1.35v1.35h-1.35zM261.5 333.9h1.35v1.35h-1.35zM143.2 385.8h1.35v1.35h-1.35zM233.1 336.1h1.35v1.35h-1.35zM103.7 380.2h1.35v1.35h-1.35zM178.2 361.0h1.35v1.35h-1.35zM86.9 339.3h1.35v1.35h-1.35zM188.8 368.5h1.35v1.35h-1.35zM92.5 393.7h1.35v1.35h-1.35zM239.4 403.9h1.35v1.35h-1.35zM60.1 322.7h1.35v1.35h-1.35zM441.6 323.2h1.35v1.35h-1.35zM278.4 337.4h1.35v1.35h-1.35zM451.1 364.6h1.35v1.35h-1.35zM573.0 326.2h1.35v1.35h-1.35zM160.5 356.1h1.35v1.35h-1.35zM600.9 331.1h1.35v1.35h-1.35zM339.4 340.8h1.35v1.35h-1.35zM240.2 340.3h1.35v1.35h-1.35zM82.1 353.7h1.35v1.35h-1.35zM58.9 386.9h1.35v1.35h-1.35zM322.7 364.2h1.35v1.35h-1.35zM245.7 372.6h1.35v1.35h-1.35zM342.8 371.8h1.35v1.35h-1.35zM216.9 359.2h1.35v1.35h-1.35zM183.3 405.5h1.35v1.35h-1.35zM512.0 331.2h1.35v1.35h-1.35zM225.0 353.3h1.35v1.35h-1.35zM302.9 390.7h1.35v1.35h-1.35zM382.6 350.1h1.35v1.35h-1.35zM137.1 365.0h1.35v1.35h-1.35zM414.1 323.5h1.35v1.35h-1.35zM111.8 363.2h1.35v1.35h-1.35zM274.9 354.0h1.35v1.35h-1.35zM313.1 373.1h1.35v1.35h-1.35zM362.3 327.2h1.35v1.35h-1.35zM197.9 345.2h1.35v1.35h-1.35zM139.5 373.4h1.35v1.35h-1.35zM97.2 352.0h1.35v1.35h-1.35zM313.3 318.4h1.35v1.35h-1.35zM253.2 358.8h1.35v1.35h-1.35zM447.2 339.7h1.35v1.35h-1.35zM173.9 360.9h1.35v1.35h-1.35zM299.5 346.9h1.35v1.35h-1.35zM250.6 384.3h1.35v1.35h-1.35zM55.4 365.6h1.35v1.35h-1.35zM195.2 362.2h1.35v1.35h-1.35zM177.6 368.3h1.35v1.35h-1.35zM217.3 366.5h1.35v1.35h-1.35zM209.0 370.5h1.35v1.35h-1.35zM77.9 357.3h1.35v1.35h-1.35zM197.2 336.4h1.35v1.35h-1.35zM339.2 350.5h1.35v1.35h-1.35zM179.4 365.2h1.35v1.35h-1.35zM479.1 340.6h1.35v1.35h-1.35zM482.2 344.7h1.35v1.35h-1.35zM157.0 368.5h1.35v1.35h-1.35zM380.5 323.8h1.35v1.35h-1.35zM352.8 338.8h1.35v1.35h-1.35zM366.1 346.7h1.35v1.35h-1.35zM643.4 332.6h1.35v1.35h-1.35zM78.3 363.6h1.35v1.35h-1.35zM225.4 352.6h1.35v1.35h-1.35zM298.9 338.2h1.35v1.35h-1.35zM316.4 364.7h1.35v1.35h-1.35zM342.8 339.7h1.35v1.35h-1.35zM576.9 330.4h1.35v1.35h-1.35zM196.9 355.6h1.35v1.35h-1.35zM455.3 330.8h1.35v1.35h-1.35zM253.7 382.4h1.35v1.35h-1.35zM65.3 361.6h1.35v1.35h-1.35zM108.5 334.9h1.35v1.35h-1.35zM128.5 369.8h1.35v1.35h-1.35zM390.3 351.2h1.35v1.35h-1.35zM492.4 326.1h1.35v1.35h-1.35zM382.7 356.5h1.35v1.35h-1.35zM93.0 363.8h1.35v1.35h-1.35zM394.8 380.4h1.35v1.35h-1.35zM209.9 385.0h1.35v1.35h-1.35zM120.3 391.9h1.35v1.35h-1.35zM306.8 344.8h1.35v1.35h-1.35zM188.0 366.3h1.35v1.35h-1.35zM387.6 338.0h1.35v1.35h-1.35zM330.8 370.5h1.35v1.35h-1.35zM152.1 383.5h1.35v1.35h-1.35zM628.9 340.9h1.35v1.35h-1.35zM110.5 393.1h1.35v1.35h-1.35zM55.1 408.7h1.35v1.35h-1.35zM417.5 346.3h1.35v1.35h-1.35zM347.9 353.5h1.35v1.35h-1.35zM305.2 333.6h1.35v1.35h-1.35zM205.5 332.1h1.35v1.35h-1.35zM53.8 388.3h1.35v1.35h-1.35zM637.1 296.3h1.35v1.35h-1.35zM376.0 357.1h1.35v1.35h-1.35zM385.0 334.5h1.35v1.35h-1.35zM261.3 360.1h1.35v1.35h-1.35zM233.5 348.9h1.35v1.35h-1.35zM70.6 351.0h1.35v1.35h-1.35zM427.2 355.8h1.35v1.35h-1.35zM127.4 339.2h1.35v1.35h-1.35zM179.5 346.0h1.35v1.35h-1.35zM160.3 349.5h1.35v1.35h-1.35zM353.0 317.5h1.35v1.35h-1.35zM89.2 390.1h1.35v1.35h-1.35zM337.4 365.6h1.35v1.35h-1.35zM130.3 382.4h1.35v1.35h-1.35zM204.9 370.1h1.35v1.35h-1.35zM147.9 389.5h1.35v1.35h-1.35zM90.2 316.1h1.35v1.35h-1.35zM233.9 389.5h1.35v1.35h-1.35zM199.4 331.8h1.35v1.35h-1.35zM208.2 374.0h1.35v1.35h-1.35zM618.0 316.1h1.35v1.35h-1.35zM124.1 366.8h1.35v1.35h-1.35zM569.7 361.7h1.35v1.35h-1.35zM380.4 346.7h1.35v1.35h-1.35zM145.9 360.7h1.35v1.35h-1.35zM223.8 262.7h1.35v1.35h-1.35zM259.4 308.6h1.35v1.35h-1.35zM475.4 255.2h1.35v1.35h-1.35zM598.4 249.4h1.35v1.35h-1.35zM597.9 270.2h1.35v1.35h-1.35zM528.1 278.0h1.35v1.35h-1.35zM626.0 227.4h1.35v1.35h-1.35zM518.2 267.6h1.35v1.35h-1.35zM419.7 241.8h1.35v1.35h-1.35zM588.4 243.3h1.35v1.35h-1.35zM657.4 243.2h1.35v1.35h-1.35zM395.0 250.9h1.35v1.35h-1.35zM607.6 268.0h1.35v1.35h-1.35zM518.5 264.4h1.35v1.35h-1.35z" shape-rendering="auto"/>
<path fill="#3c88c4" d="M236.1 375.5h1.35v1.35h-1.35zM448.1 300.6h1.35v1.35h-1.35zM177.4 363.5h1.35v1.35h-1.35zM69.8 359.5h1.35v1.35h-1.35zM597.6 326.4h1.35v1.35h-1.35zM147.0 330.8h1.35v1.35h-1.35zM318.1 344.8h1.35v1.35h-1.35zM510.3 320.0h1.35v1.35h-1.35zM338.3 321.7h1.35v1.35h-1.35zM115.8 351.6h1.35v1.35h-1.35zM180.1 350.7h1.35v1.35h-1.35zM135.0 375.5h1.35v1.35h-1.35zM317.9 360.2h1.35v1.35h-1.35zM244.2 357.0h1.35v1.35h-1.35zM344.9 354.6h1.35v1.35h-1.35zM257.2 345.4h1.35v1.35h-1.35zM118.9 371.6h1.35v1.35h-1.35zM459.1 340.0h1.35v1.35h-1.35zM48.4 346.3h1.35v1.35h-1.35zM199.5 340.0h1.35v1.35h-1.35zM588.2 307.5h1.35v1.35h-1.35zM540.6 305.9h1.35v1.35h-1.35zM106.9 337.0h1.35v1.35h-1.35zM185.8 350.6h1.35v1.35h-1.35zM81.4 362.0h1.35v1.35h-1.35zM121.3 352.3h1.35v1.35h-1.35zM162.1 324.7h1.35v1.35h-1.35zM430.9 332.7h1.35v1.35h-1.35zM325.6 329.1h1.35v1.35h-1.35zM174.8 367.2h1.35v1.35h-1.35zM384.7 342.5h1.35v1.35h-1.35zM393.4 333.7h1.35v1.35h-1.35zM46.5 375.5h1.35v1.35h-1.35zM296.5 365.1h1.35v1.35h-1.35zM151.3 370.1h1.35v1.35h-1.35zM68.8 367.0h1.35v1.35h-1.35zM157.1 364.2h1.35v1.35h-1.35zM75.1 312.4h1.35v1.35h-1.35zM99.6 360.3h1.35v1.35h-1.35zM234.9 322.3h1.35v1.35h-1.35zM121.2 360.3h1.35v1.35h-1.35zM370.6 323.1h1.35v1.35h-1.35zM150.0 365.5h1.35v1.35h-1.35zM279.5 334.6h1.35v1.35h-1.35zM161.4 358.9h1.35v1.35h-1.35zM247.7 345.6h1.35v1.35h-1.35zM255.6 354.3h1.35v1.35h-1.35zM502.1 326.3h1.35v1.35h-1.35zM156.1 350.2h1.35v1.35h-1.35zM642.0 288.0h1.35v1.35h-1.35zM298.8 360.3h1.35v1.35h-1.35zM64.7 341.6h1.35v1.35h-1.35zM375.0 355.2h1.35v1.35h-1.35zM445.7 315.7h1.35v1.35h-1.35zM494.4 351.1h1.35v1.35h-1.35zM231.7 392.2h1.35v1.35h-1.35zM287.0 351.5h1.35v1.35h-1.35zM185.9 354.1h1.35v1.35h-1.35zM143.6 367.1h1.35v1.35h-1.35zM219.3 329.5h1.35v1.35h-1.35zM308.1 344.7h1.35v1.35h-1.35zM426.0 319.8h1.35v1.35h-1.35zM235.8 358.9h1.35v1.35h-1.35zM278.9 321.8h1.35v1.35h-1.35zM410.2 347.0h1.35v1.35h-1.35zM131.0 374.4h1.35v1.35h-1.35zM133.4 371.2h1.35v1.35h-1.35zM509.0 323.6h1.35v1.35h-1.35zM244.9 354.0h1.35v1.35h-1.35zM125.5 341.5h1.35v1.35h-1.35zM452.8 325.5h1.35v1.35h-1.35zM241.6 346.3h1.35v1.35h-1.35zM239.3 320.5h1.35v1.35h-1.35zM294.3 347.9h1.35v1.35h-1.35zM431.4 320.8h1.35v1.35h-1.35zM596.5 283.1h1.35v1.35h-1.35zM425.9 309.7h1.35v1.35h-1.35zM88.7 344.4h1.35v1.35h-1.35zM67.4 376.0h1.35v1.35h-1.35zM223.5 356.7h1.35v1.35h-1.35zM261.2 383.0h1.35v1.35h-1.35zM179.5 333.9h1.35v1.35h-1.35zM445.4 331.8h1.35v1.35h-1.35zM267.9 338.7h1.35v1.35h-1.35zM216.3 355.3h1.35v1.35h-1.35zM584.0 303.7h1.35v1.35h-1.35zM91.9 349.2h1.35v1.35h-1.35zM224.6 354.3h1.35v1.35h-1.35zM338.0 332.0h1.35v1.35h-1.35zM392.5 358.8h1.35v1.35h-1.35zM384.4 306.1h1.35v1.35h-1.35zM153.3 348.2h1.35v1.35h-1.35zM469.3 309.6h1.35v1.35h-1.35zM175.1 353.5h1.35v1.35h-1.35zM479.4 316.6h1.35v1.35h-1.35zM272.2 348.2h1.35v1.35h-1.35zM194.6 341.7h1.35v1.35h-1.35zM159.7 326.1h1.35v1.35h-1.35zM166.2 346.8h1.35v1.35h-1.35zM426.6 307.7h1.35v1.35h-1.35zM388.8 340.7h1.35v1.35h-1.35zM520.1 309.6h1.35v1.35h-1.35zM449.4 306.0h1.35v1.35h-1.35zM565.3 289.7h1.35v1.35h-1.35zM88.6 350.4h1.35v1.35h-1.35zM82.5 359.7h1.35v1.35h-1.35zM116.4 375.0h1.35v1.35h-1.35zM87.9 327.7h1.35v1.35h-1.35zM389.3 310.9h1.35v1.35h-1.35zM290.7 311.5h1.35v1.35h-1.35zM234.7 344.0h1.35v1.35h-1.35zM236.8 349.8h1.35v1.35h-1.35zM466.6 288.9h1.35v1.35h-1.35zM300.1 325.0h1.35v1.35h-1.35zM218.9 346.1h1.35v1.35h-1.35zM471.7 332.4h1.35v1.35h-1.35zM87.9 339.2h1.35v1.35h-1.35zM269.4 345.6h1.35v1.35h-1.35zM120.2 349.3h1.35v1.35h-1.35zM258.7 341.3h1.35v1.35h-1.35zM66.5 402.1h1.35v1.35h-1.35zM201.6 362.0h1.35v1.35h-1.35zM48.9 325.8h1.35v1.35h-1.35zM445.1 328.7h1.35v1.35h-1.35zM209.7 359.1h1.35v1.35h-1.35zM135.3 359.9h1.35v1.35h-1.35zM52.6 338.8h1.35v1.35h-1.35zM459.7 319.8h1.35v1.35h-1.35zM145.5 347.7h1.35v1.35h-1.35zM533.4 320.4h1.35v1.35h-1.35zM184.4 346.3h1.35v1.35h-1.35zM221.9 355.5h1.35v1.35h-1.35zM146.1 340.1h1.35v1.35h-1.35zM62.6 349.8h1.35v1.35h-1.35zM334.5 335.6h1.35v1.35h-1.35zM251.0 371.5h1.35v1.35h-1.35zM284.9 324.9h1.35v1.35h-1.35zM250.2 324.7h1.35v1.35h-1.35zM299.3 340.2h1.35v1.35h-1.35zM253.6 365.1h1.35v1.35h-1.35zM394.9 358.6h1.35v1.35h-1.35zM371.3 322.4h1.35v1.35h-1.35zM399.4 343.5h1.35v1.35h-1.35zM506.4 314.1h1.35v1.35h-1.35zM202.5 335.9h1.35v1.35h-1.35zM219.8 363.4h1.35v1.35h-1.35zM186.6 353.4h1.35v1.35h-1.35zM79.0 332.8h1.35v1.35h-1.35zM374.2 322.2h1.35v1.35h-1.35zM199.8 363.6h1.35v1.35h-1.35zM569.6 316.9h1.35v1.35h-1.35zM360.0 315.9h1.35v1.35h-1.35zM318.3 333.9h1.35v1.35h-1.35zM127.4 348.2h1.35v1.35h-1.35zM486.9 318.3h1.35v1.35h-1.35zM185.9 354.2h1.35v1.35h-1.35zM198.4 335.4h1.35v1.35h-1.35zM378.2 330.0h1.35v1.35h-1.35zM79.5 358.0h1.35v1.35h-1.35zM104.3 338.4h1.35v1.35h-1.35zM181.9 368.9h1.35v1.35h-1.35zM638.5 320.0h1.35v1.35h-1.35zM365.2 346.0h1.35v1.35h-1.35zM194.2 364.6h1.35v1.35h-1.35zM106.0 345.3h1.35v1.35h-1.35zM192.3 348.1h1.35v1.35h-1.35zM294.4 349.8h1.35v1.35h-1.35zM152.8 325.6h1.35v1.35h-1.35zM113.4 352.8h1.35v1.35h-1.35zM284.3 325.9h1.35v1.35h-1.35zM595.2 316.7h1.35v1.35h-1.35zM124.8 338.8h1.35v1.35h-1.35zM433.7 337.7h1.35v1.35h-1.35zM379.5 327.3h1.35v1.35h-1.35zM395.4 320.3h1.35v1.35h-1.35zM461.5 345.1h1.35v1.35h-1.35zM192.5 356.3h1.35v1.35h-1.35zM469.9 311.1h1.35v1.35h-1.35zM259.8 373.1h1.35v1.35h-1.35zM378.2 348.9h1.35v1.35h-1.35zM336.4 322.5h1.35v1.35h-1.35zM233.5 320.1h1.35v1.35h-1.35zM249.7 336.7h1.35v1.35h-1.35zM302.9 331.3h1.35v1.35h-1.35zM169.5 378.4h1.35v1.35h-1.35zM52.9 326.9h1.35v1.35h-1.35zM601.0 299.9h1.35v1.35h-1.35zM349.5 335.8h1.35v1.35h-1.35zM216.2 379.9h1.35v1.35h-1.35zM586.4 313.3h1.35v1.35h-1.35zM423.4 332.5h1.35v1.35h-1.35zM335.7 310.0h1.35v1.35h-1.35zM572.0 325.0h1.35v1.35h-1.35zM192.3 358.1h1.35v1.35h-1.35zM133.3 357.3h1.35v1.35h-1.35zM136.8 353.1h1.35v1.35h-1.35zM459.1 319.5h1.35v1.35h-1.35zM182.7 369.3h1.35v1.35h-1.35zM421.7 322.3h1.35v1.35h-1.35zM172.4 357.8h1.35v1.35h-1.35zM328.7 344.8h1.35v1.35h-1.35zM192.1 338.3h1.35v1.35h-1.35zM48.9 341.6h1.35v1.35h-1.35zM179.3 375.3h1.35v1.35h-1.35zM547.7 282.3h1.35v1.35h-1.35zM127.9 342.8h1.35v1.35h-1.35zM116.0 368.6h1.35v1.35h-1.35zM571.6 331.6h1.35v1.35h-1.35zM123.7 366.6h1.35v1.35h-1.35zM123.7 364.7h1.35v1.35h-1.35zM266.0 343.1h1.35v1.35h-1.35zM305.2 341.1h1.35v1.35h-1.35zM370.4 332.7h1.35v1.35h-1.35zM292.1 324.8h1.35v1.35h-1.35zM266.5 333.9h1.35v1.35h-1.35zM114.1 358.8h1.35v1.35h-1.35zM87.3 354.5h1.35v1.35h-1.35zM248.7 348.3h1.35v1.35h-1.35zM310.4 342.8h1.35v1.35h-1.35zM83.9 352.2h1.35v1.35h-1.35zM169.6 354.6h1.35v1.35h-1.35zM147.2 375.6h1.35v1.35h-1.35zM86.6 372.5h1.35v1.35h-1.35zM331.8 315.8h1.35v1.35h-1.35zM480.0 311.8h1.35v1.35h-1.35zM129.8 336.3h1.35v1.35h-1.35zM613.0 349.1h1.35v1.35h-1.35zM559.7 317.1h1.35v1.35h-1.35zM171.2 328.1h1.35v1.35h-1.35zM270.2 349.2h1.35v1.35h-1.35zM450.9 327.4h1.35v1.35h-1.35zM207.6 342.3h1.35v1.35h-1.35zM105.9 345.4h1.35v1.35h-1.35zM565.8 340.9h1.35v1.35h-1.35zM102.9 333.1h1.35v1.35h-1.35zM418.7 301.0h1.35v1.35h-1.35zM203.3 354.3h1.35v1.35h-1.35zM356.5 332.5h1.35v1.35h-1.35zM83.0 354.1h1.35v1.35h-1.35zM295.8 350.7h1.35v1.35h-1.35zM417.9 325.1h1.35v1.35h-1.35zM83.7 367.4h1.35v1.35h-1.35zM229.2 343.7h1.35v1.35h-1.35zM58.1 364.0h1.35v1.35h-1.35zM335.2 346.3h1.35v1.35h-1.35zM165.9 342.9h1.35v1.35h-1.35zM293.5 347.4h1.35v1.35h-1.35zM110.5 371.0h1.35v1.35h-1.35zM410.6 339.4h1.35v1.35h-1.35zM111.6 354.5h1.35v1.35h-1.35zM115.9 330.6h1.35v1.35h-1.35zM227.9 340.7h1.35v1.35h-1.35zM56.2 377.1h1.35v1.35h-1.35zM242.1 361.7h1.35v1.35h-1.35zM48.5 350.5h1.35v1.35h-1.35zM375.2 335.2h1.35v1.35h-1.35zM240.1 355.8h1.35v1.35h-1.35zM185.7 348.6h1.35v1.35h-1.35zM112.7 366.4h1.35v1.35h-1.35zM54.0 374.0h1.35v1.35h-1.35zM246.0 339.2h1.35v1.35h-1.35zM372.1 338.5h1.35v1.35h-1.35zM58.9 387.0h1.35v1.35h-1.35zM225.6 349.7h1.35v1.35h-1.35zM98.0 349.2h1.35v1.35h-1.35zM347.5 349.6h1.35v1.35h-1.35zM607.3 337.6h1.35v1.35h-1.35zM183.2 339.6h1.35v1.35h-1.35zM199.6 345.9h1.35v1.35h-1.35zM281.9 337.1h1.35v1.35h-1.35zM426.6 329.3h1.35v1.35h-1.35zM184.9 341.5h1.35v1.35h-1.35zM187.4 371.3h1.35v1.35h-1.35zM347.6 311.4h1.35v1.35h-1.35zM84.4 353.5h1.35v1.35h-1.35zM651.1 306.9h1.35v1.35h-1.35zM567.7 326.7h1.35v1.35h-1.35zM164.7 372.6h1.35v1.35h-1.35zM436.9 319.3h1.35v1.35h-1.35zM297.4 330.2h1.35v1.35h-1.35zM115.8 381.9h1.35v1.35h-1.35zM53.9 354.9h1.35v1.35h-1.35zM307.7 335.6h1.35v1.35h-1.35zM178.5 340.0h1.35v1.35h-1.35zM125.2 363.5h1.35v1.35h-1.35zM315.6 344.6h1.35v1.35h-1.35zM104.3 365.8h1.35v1.35h-1.35zM506.2 327.5h1.35v1.35h-1.35zM61.7 391.0h1.35v1.35h-1.35zM221.3 359.9h1.35v1.35h-1.35zM400.4 328.6h1.35v1.35h-1.35zM445.4 318.0h1.35v1.35h-1.35zM59.9 354.4h1.35v1.35h-1.35zM380.9 318.1h1.35v1.35h-1.35zM233.9 334.4h1.35v1.35h-1.35zM657.3 308.3h1.35v1.35h-1.35zM301.4 358.5h1.35v1.35h-1.35zM224.7 338.9h1.35v1.35h-1.35zM121.6 356.0h1.35v1.35h-1.35zM137.7 358.3h1.35v1.35h-1.35zM103.0 360.4h1.35v1.35h-1.35zM135.0 361.7h1.35v1.35h-1.35zM329.7 351.8h1.35v1.35h-1.35zM91.6 339.5h1.35v1.35h-1.35zM247.8 332.7h1.35v1.35h-1.35zM152.5 340.7h1.35v1.35h-1.35zM94.6 348.0h1.35v1.35h-1.35zM378.9 345.9h1.35v1.35h-1.35zM425.1 317.5h1.35v1.35h-1.35zM52.9 339.2h1.35v1.35h-1.35zM421.2 342.5h1.35v1.35h-1.35zM270.8 321.7h1.35v1.35h-1.35zM77.8 338.6h1.35v1.35h-1.35zM167.9 326.9h1.35v1.35h-1.35zM362.2 339.2h1.35v1.35h-1.35zM250.3 335.0h1.35v1.35h-1.35zM92.0 343.4h1.35v1.35h-1.35zM76.7 341.0h1.35v1.35h-1.35zM133.0 338.4h1.35v1.35h-1.35zM254.2 338.7h1.35v1.35h-1.35zM252.2 362.6h1.35v1.35h-1.35zM375.5 343.9h1.35v1.35h-1.35zM321.8 334.9h1.35v1.35h-1.35zM370.2 309.1h1.35v1.35h-1.35zM250.9 321.0h1.35v1.35h-1.35zM120.5 345.2h1.35v1.35h-1.35zM347.2 338.7h1.35v1.35h-1.35zM305.4 343.3h1.35v1.35h-1.35zM557.9 319.4h1.35v1.35h-1.35zM120.9 366.3h1.35v1.35h-1.35zM159.5 341.3h1.35v1.35h-1.35zM177.5 360.3h1.35v1.35h-1.35zM215.0 334.1h1.35v1.35h-1.35zM188.9 340.6h1.35v1.35h-1.35zM557.0 317.0h1.35v1.35h-1.35zM65.1 344.2h1.35v1.35h-1.35zM202.4 340.2h1.35v1.35h-1.35zM242.6 355.2h1.35v1.35h-1.35zM177.2 327.7h1.35v1.35h-1.35zM402.8 323.5h1.35v1.35h-1.35zM439.4 309.3h1.35v1.35h-1.35zM331.6 309.9h1.35v1.35h-1.35zM313.0 363.2h1.35v1.35h-1.35zM247.5 342.8h1.35v1.35h-1.35zM238.4 349.5h1.35v1.35h-1.35zM381.3 324.4h1.35v1.35h-1.35zM328.9 326.5h1.35v1.35h-1.35zM56.7 349.4h1.35v1.35h-1.35zM156.9 375.3h1.35v1.35h-1.35zM266.4 342.7h1.35v1.35h-1.35zM426.2 331.1h1.35v1.35h-1.35zM411.5 343.3h1.35v1.35h-1.35zM207.2 357.2h1.35v1.35h-1.35zM287.4 323.9h1.35v1.35h-1.35zM390.3 320.7h1.35v1.35h-1.35zM399.1 317.8h1.35v1.35h-1.35zM106.5 319.9h1.35v1.35h-1.35zM381.9 316.3h1.35v1.35h-1.35zM321.8 360.5h1.35v1.35h-1.35zM64.9 352.5h1.35v1.35h-1.35zM163.8 388.6h1.35v1.35h-1.35zM426.0 334.4h1.35v1.35h-1.35zM491.3 306.6h1.35v1.35h-1.35zM99.7 342.0h1.35v1.35h-1.35zM124.2 340.0h1.35v1.35h-1.35zM194.4 315.7h1.35v1.35h-1.35zM272.4 327.0h1.35v1.35h-1.35zM497.5 310.9h1.35v1.35h-1.35zM222.6 331.9h1.35v1.35h-1.35zM431.6 321.4h1.35v1.35h-1.35zM75.4 374.0h1.35v1.35h-1.35zM316.3 329.1h1.35v1.35h-1.35zM294.1 347.4h1.35v1.35h-1.35zM243.5 333.7h1.35v1.35h-1.35zM138.0 358.7h1.35v1.35h-1.35zM396.8 343.7h1.35v1.35h-1.35zM305.3 336.0h1.35v1.35h-1.35zM392.0 322.8h1.35v1.35h-1.35zM56.0 373.9h1.35v1.35h-1.35zM166.2 341.2h1.35v1.35h-1.35zM284.2 358.0h1.35v1.35h-1.35zM316.7 319.5h1.35v1.35h-1.35zM226.6 339.6h1.35v1.35h-1.35zM483.2 311.1h1.35v1.35h-1.35zM250.9 339.9h1.35v1.35h-1.35zM463.3 334.0h1.35v1.35h-1.35zM345.6 307.5h1.35v1.35h-1.35zM286.8 348.1h1.35v1.35h-1.35zM249.1 332.0h1.35v1.35h-1.35zM539.2 332.6h1.35v1.35h-1.35zM321.7 326.8h1.35v1.35h-1.35zM591.1 325.6h1.35v1.35h-1.35zM233.1 336.8h1.35v1.35h-1.35zM276.4 339.0h1.35v1.35h-1.35zM109.5 348.7h1.35v1.35h-1.35zM82.7 409.3h1.35v1.35h-1.35zM464.5 339.3h1.35v1.35h-1.35zM168.1 335.6h1.35v1.35h-1.35zM354.5 331.7h1.35v1.35h-1.35zM479.6 331.3h1.35v1.35h-1.35zM195.4 350.2h1.35v1.35h-1.35zM240.7 362.8h1.35v1.35h-1.35zM128.4 370.4h1.35v1.35h-1.35zM180.6 332.8h1.35v1.35h-1.35zM489.3 323.8h1.35v1.35h-1.35zM86.2 341.5h1.35v1.35h-1.35zM158.5 358.7h1.35v1.35h-1.35zM157.7 351.1h1.35v1.35h-1.35zM416.3 320.4h1.35v1.35h-1.35zM548.5 327.3h1.35v1.35h-1.35zM442.1 304.9h1.35v1.35h-1.35zM141.2 350.3h1.35v1.35h-1.35zM424.3 331.4h1.35v1.35h-1.35zM174.4 348.2h1.35v1.35h-1.35zM165.3 350.9h1.35v1.35h-1.35zM96.9 346.6h1.35v1.35h-1.35zM257.1 333.0h1.35v1.35h-1.35zM638.2 294.5h1.35v1.35h-1.35zM175.5 348.2h1.35v1.35h-1.35zM492.8 275.2h1.35v1.35h-1.35zM247.0 349.3h1.35v1.35h-1.35zM113.1 354.1h1.35v1.35h-1.35zM178.3 320.2h1.35v1.35h-1.35zM546.7 331.5h1.35v1.35h-1.35zM91.4 316.8h1.35v1.35h-1.35zM518.9 325.8h1.35v1.35h-1.35zM82.5 400.8h1.35v1.35h-1.35zM476.8 323.4h1.35v1.35h-1.35zM584.6 306.9h1.35v1.35h-1.35zM152.4 366.6h1.35v1.35h-1.35zM194.0 337.1h1.35v1.35h-1.35zM508.1 321.4h1.35v1.35h-1.35zM75.3 350.6h1.35v1.35h-1.35zM64.1 375.7h1.35v1.35h-1.35zM91.5 332.6h1.35v1.35h-1.35zM457.0 314.4h1.35v1.35h-1.35zM363.8 327.9h1.35v1.35h-1.35zM198.4 344.9h1.35v1.35h-1.35zM432.3 340.1h1.35v1.35h-1.35zM278.2 338.9h1.35v1.35h-1.35zM214.3 354.9h1.35v1.35h-1.35zM245.6 339.4h1.35v1.35h-1.35zM233.3 360.9h1.35v1.35h-1.35zM217.0 346.4h1.35v1.35h-1.35zM111.9 370.3h1.35v1.35h-1.35zM195.1 371.1h1.35v1.35h-1.35zM309.4 355.3h1.35v1.35h-1.35zM213.1 358.7h1.35v1.35h-1.35zM371.5 369.0h1.35v1.35h-1.35zM476.9 317.7h1.35v1.35h-1.35zM196.7 359.9h1.35v1.35h-1.35zM59.0 350.0h1.35v1.35h-1.35zM345.6 305.5h1.35v1.35h-1.35zM157.6 346.7h1.35v1.35h-1.35zM297.1 366.2h1.35v1.35h-1.35zM443.9 334.4h1.35v1.35h-1.35zM437.0 339.2h1.35v1.35h-1.35zM411.6 322.4h1.35v1.35h-1.35zM191.2 366.0h1.35v1.35h-1.35zM139.6 354.2h1.35v1.35h-1.35zM510.6 334.6h1.35v1.35h-1.35zM275.4 348.6h1.35v1.35h-1.35zM116.1 355.2h1.35v1.35h-1.35zM138.6 343.1h1.35v1.35h-1.35zM178.1 343.9h1.35v1.35h-1.35zM313.7 351.8h1.35v1.35h-1.35zM393.4 326.7h1.35v1.35h-1.35zM70.2 362.7h1.35v1.35h-1.35zM254.3 344.6h1.35v1.35h-1.35zM227.1 360.8h1.35v1.35h-1.35zM204.5 371.0h1.35v1.35h-1.35zM275.1 363.5h1.35v1.35h-1.35zM273.7 342.7h1.35v1.35h-1.35zM401.1 324.7h1.35v1.35h-1.35zM212.7 353.4h1.35v1.35h-1.35zM81.2 359.2h1.35v1.35h-1.35zM59.6 365.5h1.35v1.35h-1.35zM254.8 335.1h1.35v1.35h-1.35zM62.8 368.6h1.35v1.35h-1.35zM188.8 349.3h1.35v1.35h-1.35zM101.5 361.8h1.35v1.35h-1.35zM182.3 361.6h1.35v1.35h-1.35zM344.8 336.6h1.35v1.35h-1.35zM555.4 335.9h1.35v1.35h-1.35zM166.2 357.5h1.35v1.35h-1.35zM219.2 359.1h1.35v1.35h-1.35zM240.0 349.2h1.35v1.35h-1.35zM295.0 320.8h1.35v1.35h-1.35zM238.4 354.8h1.35v1.35h-1.35zM75.5 340.5h1.35v1.35h-1.35zM68.2 363.2h1.35v1.35h-1.35zM109.6 347.5h1.35v1.35h-1.35zM257.8 349.1h1.35v1.35h-1.35zM449.7 322.5h1.35v1.35h-1.35zM408.4 341.1h1.35v1.35h-1.35zM424.6 324.2h1.35v1.35h-1.35zM392.6 330.9h1.35v1.35h-1.35zM512.4 312.5h1.35v1.35h-1.35zM101.8 322.0h1.35v1.35h-1.35zM408.6 355.3h1.35v1.35h-1.35zM49.8 343.1h1.35v1.35h-1.35zM183.7 352.4h1.35v1.35h-1.35zM181.9 356.1h1.35v1.35h-1.35zM354.6 340.6h1.35v1.35h-1.35zM247.2 349.8h1.35v1.35h-1.35zM278.8 354.7h1.35v1.35h-1.35zM300.9 333.8h1.35v1.35h-1.35zM169.8 379.2h1.35v1.35h-1.35zM501.5 314.5h1.35v1.35h-1.35zM347.5 325.8h1.35v1.35h-1.35zM293.3 365.8h1.35v1.35h-1.35zM360.4 339.0h1.35v1.35h-1.35zM382.6 335.4h1.35v1.35h-1.35zM192.5 346.4h1.35v1.35h-1.35zM202.1 330.2h1.35v1.35h-1.35zM146.3 367.5h1.35v1.35h-1.35zM166.2 376.5h1.35v1.35h-1.35zM66.9 370.6h1.35v1.35h-1.35zM135.1 342.2h1.35v1.35h-1.35zM586.1 301.0h1.35v1.35h-1.35zM112.9 350.2h1.35v1.35h-1.35zM178.4 329.3h1.35v1.35h-1.35zM400.4 350.3h1.35v1.35h-1.35zM412.3 337.6h1.35v1.35h-1.35zM81.0 384.7h1.35v1.35h-1.35zM287.5 309.1h1.35v1.35h-1.35zM74.0 349.1h1.35v1.35h-1.35zM98.2 354.9h1.35v1.35h-1.35zM396.0 323.1h1.35v1.35h-1.35zM274.2 331.8h1.35v1.35h-1.35zM488.4 322.4h1.35v1.35h-1.35zM70.8 359.6h1.35v1.35h-1.35zM261.8 336.2h1.35v1.35h-1.35zM82.5 382.9h1.35v1.35h-1.35zM410.8 353.5h1.35v1.35h-1.35zM570.6 302.9h1.35v1.35h-1.35zM72.5 362.9h1.35v1.35h-1.35zM187.3 350.5h1.35v1.35h-1.35zM240.6 365.2h1.35v1.35h-1.35zM212.5 354.3h1.35v1.35h-1.35zM457.3 338.5h1.35v1.35h-1.35zM380.3 324.7h1.35v1.35h-1.35zM199.1 346.6h1.35v1.35h-1.35zM361.5 334.9h1.35v1.35h-1.35zM303.6 331.8h1.35v1.35h-1.35zM168.3 370.0h1.35v1.35h-1.35zM107.0 363.5h1.35v1.35h-1.35zM126.2 341.0h1.35v1.35h-1.35zM363.6 344.5h1.35v1.35h-1.35zM219.0 337.6h1.35v1.35h-1.35zM534.1 314.2h1.35v1.35h-1.35zM170.4 347.7h1.35v1.35h-1.35zM275.9 354.3h1.35v1.35h-1.35zM561.1 319.7h1.35v1.35h-1.35zM233.4 353.5h1.35v1.35h-1.35zM282.8 336.6h1.35v1.35h-1.35zM97.7 356.3h1.35v1.35h-1.35zM382.0 329.5h1.35v1.35h-1.35zM166.6 360.0h1.35v1.35h-1.35zM293.6 332.8h1.35v1.35h-1.35zM177.1 357.1h1.35v1.35h-1.35zM204.3 358.8h1.35v1.35h-1.35zM74.8 370.1h1.35v1.35h-1.35zM449.1 318.4h1.35v1.35h-1.35zM178.8 340.8h1.35v1.35h-1.35zM360.9 332.9h1.35v1.35h-1.35zM209.6 353.3h1.35v1.35h-1.35zM261.9 317.2h1.35v1.35h-1.35zM196.8 361.7h1.35v1.35h-1.35zM257.9 338.7h1.35v1.35h-1.35zM163.8 342.0h1.35v1.35h-1.35zM270.5 354.0h1.35v1.35h-1.35zM294.1 342.6h1.35v1.35h-1.35zM83.3 339.2h1.35v1.35h-1.35zM66.6 345.5h1.35v1.35h-1.35zM342.6 340.3h1.35v1.35h-1.35zM260.7 337.9h1.35v1.35h-1.35zM182.9 354.8h1.35v1.35h-1.35zM231.3 320.0h1.35v1.35h-1.35zM269.6 349.0h1.35v1.35h-1.35zM191.8 366.8h1.35v1.35h-1.35zM72.4 372.7h1.35v1.35h-1.35zM209.0 350.9h1.35v1.35h-1.35zM60.2 366.0h1.35v1.35h-1.35zM66.1 347.8h1.35v1.35h-1.35zM321.1 344.3h1.35v1.35h-1.35zM128.6 351.1h1.35v1.35h-1.35zM180.4 354.4h1.35v1.35h-1.35zM521.5 305.7h1.35v1.35h-1.35zM120.2 351.5h1.35v1.35h-1.35zM365.1 332.4h1.35v1.35h-1.35zM289.1 351.5h1.35v1.35h-1.35zM186.4 364.5h1.35v1.35h-1.35zM111.8 364.1h1.35v1.35h-1.35zM203.3 358.3h1.35v1.35h-1.35zM230.0 344.3h1.35v1.35h-1.35zM347.8 354.5h1.35v1.35h-1.35zM429.9 320.4h1.35v1.35h-1.35zM115.5 371.7h1.35v1.35h-1.35zM330.4 361.4h1.35v1.35h-1.35zM217.7 354.8h1.35v1.35h-1.35zM291.9 324.2h1.35v1.35h-1.35zM247.3 357.0h1.35v1.35h-1.35zM425.1 334.2h1.35v1.35h-1.35zM106.7 354.4h1.35v1.35h-1.35zM171.4 341.6h1.35v1.35h-1.35zM82.0 354.8h1.35v1.35h-1.35zM86.0 359.6h1.35v1.35h-1.35zM63.6 357.5h1.35v1.35h-1.35zM137.7 337.0h1.35v1.35h-1.35zM469.4 331.4h1.35v1.35h-1.35zM187.4 359.5h1.35v1.35h-1.35zM57.3 359.6h1.35v1.35h-1.35zM150.0 358.9h1.35v1.35h-1.35zM255.5 356.9h1.35v1.35h-1.35zM162.5 327.2h1.35v1.35h-1.35zM70.2 363.6h1.35v1.35h-1.35zM260.0 358.5h1.35v1.35h-1.35zM90.1 351.4h1.35v1.35h-1.35zM320.8 314.0h1.35v1.35h-1.35zM106.8 341.2h1.35v1.35h-1.35zM79.5 363.9h1.35v1.35h-1.35zM296.9 326.8h1.35v1.35h-1.35zM107.2 350.3h1.35v1.35h-1.35zM442.8 316.0h1.35v1.35h-1.35zM105.9 337.7h1.35v1.35h-1.35zM533.2 297.8h1.35v1.35h-1.35zM169.9 359.8h1.35v1.35h-1.35zM73.3 332.3h1.35v1.35h-1.35zM211.8 349.1h1.35v1.35h-1.35zM263.7 329.2h1.35v1.35h-1.35zM333.3 354.2h1.35v1.35h-1.35zM379.8 343.1h1.35v1.35h-1.35zM305.0 350.1h1.35v1.35h-1.35zM277.7 340.3h1.35v1.35h-1.35zM181.9 363.9h1.35v1.35h-1.35zM157.8 372.7h1.35v1.35h-1.35zM187.7 355.7h1.35v1.35h-1.35zM279.3 359.5h1.35v1.35h-1.35zM79.1 366.2h1.35v1.35h-1.35zM58.6 361.4h1.35v1.35h-1.35zM225.0 345.2h1.35v1.35h-1.35zM277.1 343.8h1.35v1.35h-1.35zM220.1 368.9h1.35v1.35h-1.35zM489.4 328.4h1.35v1.35h-1.35zM616.8 297.0h1.35v1.35h-1.35zM123.2 322.8h1.35v1.35h-1.35zM302.5 323.3h1.35v1.35h-1.35zM335.0 341.8h1.35v1.35h-1.35zM131.7 381.9h1.35v1.35h-1.35zM129.3 346.4h1.35v1.35h-1.35zM89.8 375.7h1.35v1.35h-1.35zM316.9 311.6h1.35v1.35h-1.35zM512.7 327.4h1.35v1.35h-1.35zM98.4 363.6h1.35v1.35h-1.35zM212.1 340.3h1.35v1.35h-1.35zM160.9 337.2h1.35v1.35h-1.35zM150.9 346.0h1.35v1.35h-1.35zM171.3 354.7h1.35v1.35h-1.35zM108.3 345.6h1.35v1.35h-1.35zM79.4 345.6h1.35v1.35h-1.35zM544.8 330.1h1.35v1.35h-1.35zM256.1 338.1h1.35v1.35h-1.35zM312.5 313.2h1.35v1.35h-1.35zM461.0 318.2h1.35v1.35h-1.35zM64.9 376.8h1.35v1.35h-1.35zM217.7 333.4h1.35v1.35h-1.35zM48.3 358.1h1.35v1.35h-1.35zM114.9 356.8h1.35v1.35h-1.35zM164.9 327.7h1.35v1.35h-1.35zM169.2 324.3h1.35v1.35h-1.35zM123.4 334.8h1.35v1.35h-1.35zM354.0 363.7h1.35v1.35h-1.35zM226.9 351.5h1.35v1.35h-1.35zM305.3 326.0h1.35v1.35h-1.35zM182.8 322.7h1.35v1.35h-1.35zM211.7 360.0h1.35v1.35h-1.35zM179.3 341.4h1.35v1.35h-1.35zM556.3 295.8h1.35v1.35h-1.35zM183.2 362.2h1.35v1.35h-1.35zM77.8 342.7h1.35v1.35h-1.35zM496.0 309.0h1.35v1.35h-1.35zM274.3 357.5h1.35v1.35h-1.35zM92.5 331.6h1.35v1.35h-1.35zM334.3 366.9h1.35v1.35h-1.35zM404.2 329.3h1.35v1.35h-1.35zM181.9 348.5h1.35v1.35h-1.35zM204.1 342.1h1.35v1.35h-1.35zM560.5 310.3h1.35v1.35h-1.35zM420.3 311.9h1.35v1.35h-1.35zM419.9 317.1h1.35v1.35h-1.35zM47.9 333.6h1.35v1.35h-1.35zM133.2 343.2h1.35v1.35h-1.35zM61.9 353.0h1.35v1.35h-1.35zM269.0 309.6h1.35v1.35h-1.35zM519.6 305.8h1.35v1.35h-1.35zM413.1 329.1h1.35v1.35h-1.35zM240.9 364.4h1.35v1.35h-1.35zM184.9 339.4h1.35v1.35h-1.35zM137.8 319.3h1.35v1.35h-1.35zM476.6 293.0h1.35v1.35h-1.35zM70.4 353.3h1.35v1.35h-1.35zM327.9 342.9h1.35v1.35h-1.35zM402.0 325.0h1.35v1.35h-1.35zM248.0 377.0h1.35v1.35h-1.35zM268.5 355.8h1.35v1.35h-1.35zM72.9 376.6h1.35v1.35h-1.35zM142.2 377.6h1.35v1.35h-1.35zM401.1 320.8h1.35v1.35h-1.35zM156.8 362.7h1.35v1.35h-1.35zM573.8 319.1h1.35v1.35h-1.35zM529.0 318.3h1.35v1.35h-1.35zM628.1 297.9h1.35v1.35h-1.35zM87.2 342.6h1.35v1.35h-1.35zM445.2 324.9h1.35v1.35h-1.35zM81.0 355.9h1.35v1.35h-1.35zM523.0 340.3h1.35v1.35h-1.35zM118.0 361.1h1.35v1.35h-1.35zM351.0 325.5h1.35v1.35h-1.35zM302.6 339.1h1.35v1.35h-1.35zM142.7 351.0h1.35v1.35h-1.35zM67.8 359.5h1.35v1.35h-1.35zM214.4 360.8h1.35v1.35h-1.35zM84.5 385.7h1.35v1.35h-1.35zM193.6 345.1h1.35v1.35h-1.35zM297.7 352.4h1.35v1.35h-1.35zM158.4 371.5h1.35v1.35h-1.35zM323.6 342.5h1.35v1.35h-1.35zM227.4 326.4h1.35v1.35h-1.35zM175.3 354.9h1.35v1.35h-1.35zM103.1 367.4h1.35v1.35h-1.35zM485.3 313.8h1.35v1.35h-1.35zM500.3 322.8h1.35v1.35h-1.35zM88.8 345.4h1.35v1.35h-1.35zM223.9 354.5h1.35v1.35h-1.35zM131.2 354.8h1.35v1.35h-1.35zM442.1 328.5h1.35v1.35h-1.35zM164.7 350.5h1.35v1.35h-1.35zM174.3 344.5h1.35v1.35h-1.35zM64.2 365.9h1.35v1.35h-1.35zM377.9 342.1h1.35v1.35h-1.35zM285.3 325.7h1.35v1.35h-1.35zM371.4 322.2h1.35v1.35h-1.35zM77.0 365.6h1.35v1.35h-1.35zM133.2 335.3h1.35v1.35h-1.35zM396.4 329.1h1.35v1.35h-1.35zM63.1 350.7h1.35v1.35h-1.35zM415.1 325.2h1.35v1.35h-1.35zM204.5 311.8h1.35v1.35h-1.35zM159.9 358.5h1.35v1.35h-1.35zM89.2 374.5h1.35v1.35h-1.35zM69.1 355.3h1.35v1.35h-1.35zM105.1 359.6h1.35v1.35h-1.35zM208.5 344.6h1.35v1.35h-1.35zM522.1 324.4h1.35v1.35h-1.35zM294.8 350.0h1.35v1.35h-1.35zM62.5 332.5h1.35v1.35h-1.35zM445.8 328.9h1.35v1.35h-1.35zM508.5 319.7h1.35v1.35h-1.35zM256.3 319.8h1.35v1.35h-1.35zM229.0 361.8h1.35v1.35h-1.35zM270.1 341.0h1.35v1.35h-1.35zM54.6 345.6h1.35v1.35h-1.35zM441.5 307.9h1.35v1.35h-1.35zM520.8 309.6h1.35v1.35h-1.35zM388.4 347.0h1.35v1.35h-1.35zM139.3 349.7h1.35v1.35h-1.35zM99.0 343.2h1.35v1.35h-1.35zM348.1 326.3h1.35v1.35h-1.35zM130.2 337.3h1.35v1.35h-1.35zM428.9 325.0h1.35v1.35h-1.35zM451.8 348.9h1.35v1.35h-1.35zM224.5 359.3h1.35v1.35h-1.35zM240.2 371.5h1.35v1.35h-1.35zM132.3 380.4h1.35v1.35h-1.35zM614.6 292.9h1.35v1.35h-1.35zM93.6 348.7h1.35v1.35h-1.35zM217.2 364.7h1.35v1.35h-1.35zM273.0 308.7h1.35v1.35h-1.35zM177.2 363.2h1.35v1.35h-1.35zM155.6 382.7h1.35v1.35h-1.35zM176.2 356.7h1.35v1.35h-1.35zM93.0 359.3h1.35v1.35h-1.35zM101.2 350.8h1.35v1.35h-1.35zM134.2 363.5h1.35v1.35h-1.35zM421.9 300.0h1.35v1.35h-1.35zM301.6 349.9h1.35v1.35h-1.35zM247.2 340.3h1.35v1.35h-1.35zM114.8 357.9h1.35v1.35h-1.35zM461.7 331.6h1.35v1.35h-1.35zM512.3 309.8h1.35v1.35h-1.35zM362.8 343.2h1.35v1.35h-1.35zM223.2 348.0h1.35v1.35h-1.35zM130.7 363.3h1.35v1.35h-1.35zM198.0 332.3h1.35v1.35h-1.35zM125.2 339.7h1.35v1.35h-1.35zM66.3 318.3h1.35v1.35h-1.35zM454.8 325.7h1.35v1.35h-1.35zM113.3 324.3h1.35v1.35h-1.35zM581.0 322.7h1.35v1.35h-1.35zM149.2 328.4h1.35v1.35h-1.35zM172.8 341.0h1.35v1.35h-1.35zM313.8 329.8h1.35v1.35h-1.35zM366.1 335.6h1.35v1.35h-1.35zM282.6 333.6h1.35v1.35h-1.35zM214.9 337.9h1.35v1.35h-1.35zM472.3 317.4h1.35v1.35h-1.35zM160.6 367.6h1.35v1.35h-1.35zM197.6 349.2h1.35v1.35h-1.35zM46.1 380.8h1.35v1.35h-1.35zM137.5 364.7h1.35v1.35h-1.35zM342.4 330.9h1.35v1.35h-1.35zM182.3 364.5h1.35v1.35h-1.35zM259.4 348.3h1.35v1.35h-1.35zM600.4 316.7h1.35v1.35h-1.35zM266.1 351.4h1.35v1.35h-1.35zM260.9 346.8h1.35v1.35h-1.35zM376.1 340.2h1.35v1.35h-1.35zM301.5 334.8h1.35v1.35h-1.35zM192.0 359.6h1.35v1.35h-1.35zM353.0 329.9h1.35v1.35h-1.35zM504.3 331.8h1.35v1.35h-1.35zM115.0 335.4h1.35v1.35h-1.35zM361.5 353.0h1.35v1.35h-1.35zM67.0 337.6h1.35v1.35h-1.35zM104.9 362.5h1.35v1.35h-1.35zM190.5 376.8h1.35v1.35h-1.35zM338.0 334.8h1.35v1.35h-1.35zM202.0 365.8h1.35v1.35h-1.35zM161.2 359.5h1.35v1.35h-1.35zM230.8 350.0h1.35v1.35h-1.35zM110.6 368.9h1.35v1.35h-1.35zM284.2 345.9h1.35v1.35h-1.35zM283.4 349.6h1.35v1.35h-1.35zM218.5 324.6h1.35v1.35h-1.35zM171.1 345.0h1.35v1.35h-1.35zM346.2 330.6h1.35v1.35h-1.35zM339.2 326.1h1.35v1.35h-1.35zM474.5 324.1h1.35v1.35h-1.35zM124.5 341.0h1.35v1.35h-1.35zM221.1 338.2h1.35v1.35h-1.35zM54.9 380.0h1.35v1.35h-1.35zM157.9 337.4h1.35v1.35h-1.35zM595.9 303.8h1.35v1.35h-1.35zM140.3 346.2h1.35v1.35h-1.35zM271.7 345.9h1.35v1.35h-1.35zM252.5 333.4h1.35v1.35h-1.35zM164.6 347.9h1.35v1.35h-1.35zM414.0 333.2h1.35v1.35h-1.35zM312.5 372.4h1.35v1.35h-1.35zM134.0 326.4h1.35v1.35h-1.35zM185.0 355.3h1.35v1.35h-1.35zM138.2 339.2h1.35v1.35h-1.35zM118.2 357.2h1.35v1.35h-1.35zM249.8 352.5h1.35v1.35h-1.35zM262.7 342.5h1.35v1.35h-1.35zM45.8 341.6h1.35v1.35h-1.35zM223.0 354.5h1.35v1.35h-1.35zM64.5 377.0h1.35v1.35h-1.35zM238.1 344.2h1.35v1.35h-1.35zM284.7 360.6h1.35v1.35h-1.35zM216.6 332.5h1.35v1.35h-1.35zM60.6 368.1h1.35v1.35h-1.35zM137.3 348.9h1.35v1.35h-1.35zM379.4 339.3h1.35v1.35h-1.35zM401.0 322.1h1.35v1.35h-1.35zM291.5 310.8h1.35v1.35h-1.35zM220.2 338.4h1.35v1.35h-1.35zM60.3 327.3h1.35v1.35h-1.35zM288.3 346.4h1.35v1.35h-1.35zM292.3 346.6h1.35v1.35h-1.35zM91.1 369.0h1.35v1.35h-1.35zM296.8 333.7h1.35v1.35h-1.35zM61.9 341.3h1.35v1.35h-1.35zM279.4 336.3h1.35v1.35h-1.35zM248.2 319.2h1.35v1.35h-1.35zM311.2 339.8h1.35v1.35h-1.35zM166.9 347.5h1.35v1.35h-1.35zM237.4 361.8h1.35v1.35h-1.35zM481.2 330.5h1.35v1.35h-1.35zM75.3 339.0h1.35v1.35h-1.35zM215.6 315.2h1.35v1.35h-1.35zM430.9 323.2h1.35v1.35h-1.35zM111.6 340.1h1.35v1.35h-1.35zM140.4 356.9h1.35v1.35h-1.35zM223.3 341.9h1.35v1.35h-1.35zM459.4 320.5h1.35v1.35h-1.35zM88.4 363.2h1.35v1.35h-1.35zM267.1 365.8h1.35v1.35h-1.35zM391.4 329.3h1.35v1.35h-1.35zM336.7 329.8h1.35v1.35h-1.35zM175.0 356.7h1.35v1.35h-1.35zM360.1 332.8h1.35v1.35h-1.35zM68.9 359.4h1.35v1.35h-1.35zM130.8 342.1h1.35v1.35h-1.35zM319.7 314.2h1.35v1.35h-1.35zM176.8 342.3h1.35v1.35h-1.35zM405.2 342.2h1.35v1.35h-1.35zM153.1 348.2h1.35v1.35h-1.35zM309.2 352.3h1.35v1.35h-1.35zM439.2 313.5h1.35v1.35h-1.35zM467.0 311.5h1.35v1.35h-1.35zM153.8 334.9h1.35v1.35h-1.35zM90.0 342.5h1.35v1.35h-1.35zM62.7 349.5h1.35v1.35h-1.35zM322.9 312.1h1.35v1.35h-1.35zM71.5 362.6h1.35v1.35h-1.35zM250.8 339.2h1.35v1.35h-1.35zM595.2 326.6h1.35v1.35h-1.35zM218.6 372.8h1.35v1.35h-1.35zM284.2 329.5h1.35v1.35h-1.35zM522.2 317.2h1.35v1.35h-1.35zM190.0 345.3h1.35v1.35h-1.35zM394.3 327.4h1.35v1.35h-1.35zM157.0 344.0h1.35v1.35h-1.35zM284.4 319.0h1.35v1.35h-1.35zM273.5 343.2h1.35v1.35h-1.35zM61.1 344.2h1.35v1.35h-1.35zM518.6 313.6h1.35v1.35h-1.35zM333.8 342.1h1.35v1.35h-1.35zM409.5 337.3h1.35v1.35h-1.35zM74.4 364.5h1.35v1.35h-1.35zM100.4 367.8h1.35v1.35h-1.35zM433.3 323.6h1.35v1.35h-1.35zM592.4 328.3h1.35v1.35h-1.35zM235.0 322.1h1.35v1.35h-1.35zM307.5 337.0h1.35v1.35h-1.35zM304.3 345.5h1.35v1.35h-1.35zM537.7 336.4h1.35v1.35h-1.35zM256.8 367.9h1.35v1.35h-1.35zM510.4 320.6h1.35v1.35h-1.35zM156.1 380.6h1.35v1.35h-1.35zM350.8 365.1h1.35v1.35h-1.35zM99.8 333.6h1.35v1.35h-1.35zM276.9 347.1h1.35v1.35h-1.35zM537.3 305.0h1.35v1.35h-1.35zM296.7 341.7h1.35v1.35h-1.35zM456.6 338.8h1.35v1.35h-1.35zM652.3 306.4h1.35v1.35h-1.35zM324.6 321.0h1.35v1.35h-1.35zM130.1 340.9h1.35v1.35h-1.35zM590.4 308.5h1.35v1.35h-1.35zM521.1 291.5h1.35v1.35h-1.35zM235.5 340.6h1.35v1.35h-1.35zM452.8 337.6h1.35v1.35h-1.35zM212.0 356.5h1.35v1.35h-1.35zM479.5 319.4h1.35v1.35h-1.35zM313.7 345.5h1.35v1.35h-1.35zM113.7 193.1h1.35v1.35h-1.35zM422.7 190.0h1.35v1.35h-1.35zM645.5 262.0h1.35v1.35h-1.35zM523.0 280.1h1.35v1.35h-1.35zM436.6 284.1h1.35v1.35h-1.35zM399.4 297.3h1.35v1.35h-1.35zM531.3 226.6h1.35v1.35h-1.35zM450.7 278.3h1.35v1.35h-1.35zM593.1 280.8h1.35v1.35h-1.35zM410.0 287.5h1.35v1.35h-1.35zM456.2 248.9h1.35v1.35h-1.35zM562.6 261.5h1.35v1.35h-1.35zM410.5 267.3h1.35v1.35h-1.35zM597.8 236.1h1.35v1.35h-1.35zM388.4 280.8h1.35v1.35h-1.35zM550.3 264.0h1.35v1.35h-1.35zM462.5 236.8h1.35v1.35h-1.35zM588.4 265.3h1.35v1.35h-1.35z" shape-rendering="auto"/>
<rect x="41" y="458.5" width="3" height="1" fill="#505050"/>
<rect x="41" y="441.2" width="3" height="1" fill="#505050"/>
<rect x="41" y="423.9" width="3" height="1" fill="#505050"/>
<rect x="41" y="406.6" width="3" height="1" fill="#505050"/>
<rect x="41" y="389.2" width="3" height="1" fill="#505050"/>
<rect x="41" y="371.9" width="3" height="1" fill="#505050"/>
<rect x="41" y="354.6" width="3" height="1" fill="#505050"/>
<rect x="41" y="337.3" width="3" height="1" fill="#505050"/>
<rect x="41" y="320.0" width="3" height="1" fill="#505050"/>
<rect x="41" y="302.7" width="3" height="1" fill="#505050"/>
<rect x="41" y="285.4" width="3" height="1" fill="#505050"/>
<rect x="41" y="268.0" width="3" height="1" fill="#505050"/>
<rect x="41" y="250.7" width="3" height="1" fill="#505050"/>
<rect x="41" y="233.4" width="3" height="1" fill="#505050"/>
<rect x="41" y="216.1" width="3" height="1" fill="#505050"/>
<rect x="41" y="198.8" width="3" height="1" fill="#505050"/>
<rect x="41" y="181.5" width="3" height="1" fill="#505050"/>
<rect x="41" y="164.1" width="3" height="1" fill="#505050"/>
<rect x="41" y="146.8" width="3" height="1" fill="#505050"/>
<rect x="41" y="129.5" width="3" height="1" fill="#505050"/>
<rect x="41" y="112.2" width="3" height="1" fill="#505050"/>
<rect x="44.4" y="459" width="1" height="3" fill="#555"/>
<rect x="106.1" y="459" width="1" height="3" fill="#555"/>
<rect x="167.8" y="459" width="1" height="3" fill="#555"/>
<rect x="229.5" y="459" width="1" height="3" fill="#555"/>
<rect x="291.2" y="459" width="1" height="3" fill="#555"/>
<rect x="352.9" y="459" width="1" height="3" fill="#555"/>
<rect x="414.6" y="459" width="1" height="3" fill="#555"/>
<rect x="476.3" y="459" width="1" height="3" fill="#555"/>
<rect x="538.0" y="459" width="1" height="3" fill="#555"/>
<rect x="599.7" y="459" width="1" height="3" fill="#555"/>
<rect x="661.4" y="459" width="1" height="3" fill="#555"/>
</svg>
<div style="left:45px;top:101px;font-size:10px;line-height:10px;color:#222;letter-spacing:-0.3px">ms</div>
<div class="yl" style="top:108.7px">50.0</div>
<div class="yl" style="top:143.3px">45.0</div>
<div class="yl" style="top:178.0px">40.0</div>
<div class="yl" style="top:212.6px">35.0</div>
<div class="yl" style="top:247.2px">30.0</div>
<div class="yl" style="top:281.9px">25.0</div>
<div class="yl" style="top:316.5px">20.0</div>
<div class="yl" style="top:351.1px">15.0</div>
<div class="yl" style="top:385.7px">10.0</div>
<div class="yl" style="top:420.4px">5.00</div>
<div class="xl" style="left:44.4px">0</div>
<div class="xl" style="left:106.1px">3000</div>
<div class="xl" style="left:167.8px">6000</div>
<div class="xl" style="left:229.5px">9000</div>
<div class="xl" style="left:291.2px">12000</div>
<div class="xl" style="left:352.9px">15000</div>
<div class="xl" style="left:414.6px">18000</div>
<div class="xl" style="left:476.3px">21000</div>
<div class="xl" style="left:538.0px">24000</div>
<div class="xl" style="left:599.7px">27000</div>
<div class="xl" style="left:643.4px;transform:scaleX(0.91);transform-origin:0 0">30000gB</div>
<!-- table -->
<div class="hdr" style="left:77.5px">传输大小</div>
<div class="hdr" style="left:182px">操作/秒</div>
<div class="hdr" style="left:290px">平均访问时间</div>
<div class="hdr" style="left:406px">最大访问时间</div>
<div class="hdr" style="left:512px">平均速度</div>
<div style="left:35px;top:499px;width:519px;height:2px;background:#7a7a7a"></div>
<div style="left:124px;top:483px;width:2px;height:116px;background:#707070"></div>
<div style="left:234px;top:483px;width:2px;height:116px;background:#7a7a7a"></div>
<div style="left:349px;top:483px;width:2px;height:116px;background:#7a7a7a"></div>
<div style="left:459px;top:483px;width:2px;height:116px;background:#7a7a7a"></div>
<div class="sq" style="top:509.2px;background:#ffff20"></div>
<div class="cb" style="top:507.2px"><svg width="12" height="12"><path d="M2.8 6 L5 8.2 L9.2 4" fill="none" stroke="#fff" stroke-width="1.1"/></svg></div>
<div class="ui" style="left:48px;top:507.7px">512 字节</div>
<div class="mono" style="left:117px;width:100px;text-align:right;top:505.7px">101 IOPS</div>
<div class="mono" style="left:226px;width:100px;text-align:right;top:505.7px"> 9.872 ms</div>
<div class="mono" style="left:337px;width:100px;text-align:right;top:505.7px">39.909 ms</div>
<div class="mono" style="left:446px;width:100px;text-align:right;top:505.7px"> 0.049 MB/s</div>
<div class="sq" style="top:527.7px;background:#d01010"></div>
<div class="cb" style="top:525.7px"><svg width="12" height="12"><path d="M2.8 6 L5 8.2 L9.2 4" fill="none" stroke="#fff" stroke-width="1.1"/></svg></div>
<div class="ui" style="left:48px;top:526.2px">4 KB</div>
<div class="mono" style="left:117px;width:100px;text-align:right;top:524.2px"> 84 IOPS</div>
<div class="mono" style="left:226px;width:100px;text-align:right;top:524.2px">11.872 ms</div>
<div class="mono" style="left:337px;width:100px;text-align:right;top:524.2px">21.773 ms</div>
<div class="mono" style="left:446px;width:100px;text-align:right;top:524.2px"> 0.329 MB/s</div>
<div class="sq" style="top:547.0px;background:#20d020"></div>
<div class="cb" style="top:545.0px"><svg width="12" height="12"><path d="M2.8 6 L5 8.2 L9.2 4" fill="none" stroke="#fff" stroke-width="1.1"/></svg></div>
<div class="ui" style="left:48px;top:545.5px">64 KB</div>
<div class="mono" style="left:117px;width:100px;text-align:right;top:542.8px"> 83 IOPS</div>
<div class="mono" style="left:226px;width:100px;text-align:right;top:542.8px">12.048 ms</div>
<div class="mono" style="left:337px;width:100px;text-align:right;top:542.8px">23.692 ms</div>
<div class="mono" style="left:446px;width:100px;text-align:right;top:542.8px"> 5.188 MB/s</div>
<div class="sq" style="top:565.7px;background:#2070d8"></div>
<div class="cb" style="top:563.7px"><svg width="12" height="12"><path d="M2.8 6 L5 8.2 L9.2 4" fill="none" stroke="#fff" stroke-width="1.1"/></svg></div>
<div class="ui" style="left:48px;top:564.2px">1 MB</div>
<div class="mono" style="left:117px;width:100px;text-align:right;top:562.2px"> 59 IOPS</div>
<div class="mono" style="left:226px;width:100px;text-align:right;top:562.2px">16.821 ms</div>
<div class="mono" style="left:337px;width:100px;text-align:right;top:562.2px">33.317 ms</div>
<div class="mono" style="left:446px;width:100px;text-align:right;top:562.2px">59.446 MB/s</div>
<div class="sq" style="top:585.4px;background:#40e8e8"></div>
<div class="cb" style="top:583.4px"><svg width="12" height="12"><path d="M2.8 6 L5 8.2 L9.2 4" fill="none" stroke="#fff" stroke-width="1.1"/></svg></div>
<div class="ui" style="left:48px;top:583.9px">随机</div>
<div class="mono" style="left:117px;width:100px;text-align:right;top:581.8px"> 69 IOPS</div>
<div class="mono" style="left:226px;width:100px;text-align:right;top:581.8px">14.384 ms</div>
<div class="mono" style="left:337px;width:100px;text-align:right;top:581.8px">35.429 ms</div>
<div class="mono" style="left:446px;width:100px;text-align:right;top:581.8px">35.274 MB/s</div>
<!-- right panel -->
<div style="left:693px;top:112px;width:75px;height:24px;border:1px solid #5a8bb3;border-radius:3px;background:#fdfdfd"></div>
<div class="ui" style="left:719px;top:118px;font-size:11.5px">开始</div>
<div class="sep" style="left:686px;top:147.5px;width:101px"></div>
<div style="left:690px;top:157px;width:11px;height:11px;border-radius:50%;background:#1462b0"></div>
<div style="left:693.5px;top:160.5px;width:4px;height:4px;border-radius:50%;background:#fff"></div>
<div class="ui" style="left:704px;top:157px">读取</div>
<div style="left:690px;top:175px;width:11px;height:11px;border-radius:50%;background:#f0f0f0;border:1px solid #6e6e6e"></div>
<div class="ui" style="left:704px;top:175px">写入</div>
<div class="sep" style="left:686px;top:191px;width:101px"></div>
<div style="left:690px;top:203px;width:11px;height:11px;border-radius:2.5px;background:#f3f3f3;border:1px solid #6e6e6e"></div>
<div class="ui" style="left:704px;top:203px">短行程</div>
<div style="left:690px;top:222px;width:48px;height:22px;background:#f6f6f6;border:1px solid #e5e5e5"></div>
<div class="ui" style="left:693px;top:228px;font-size:11.5px;color:#999">40</div>
<div style="left:737px;top:222px;width:15px;height:22px;background:#f3f3f3;border:1px solid #d0d0d0"></div>
<div style="left:738px;top:232.5px;width:13px;height:1px;background:#dcdcdc"></div>
<svg style="left:740.5px;top:226px" width="8" height="16"><path d="M1.5 4 L4 1.5 L6.5 4Z M1.5 11 L4 13.5 L6.5 11Z" fill="#8a8a8a"/></svg>
<div class="ui" style="left:764px;top:228px;font-size:11.5px">GB</div>
<div class="sep" style="left:686px;top:255.5px;width:99px"></div>
<div class="cb" style="left:690px;top:269px;width:11px;height:11px"><svg width="11" height="11"><path d="M2.5 5.5 L4.5 7.5 L8.5 3.5" fill="none" stroke="#fff" stroke-width="1.1"/></svg></div>
<div class="ui" style="left:704px;top:269px">4KB 对齐</div>
</body></html>
